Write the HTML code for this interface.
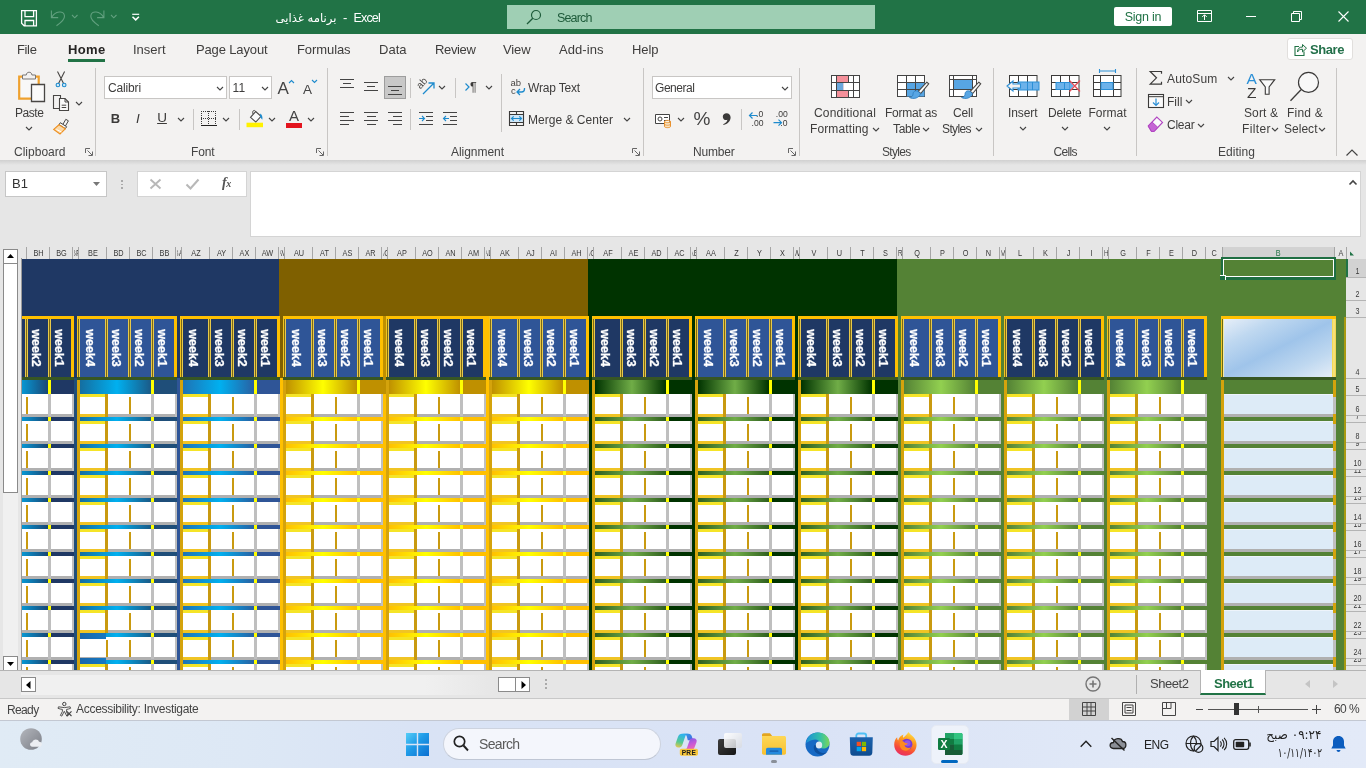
<!DOCTYPE html>
<html lang="en"><head><meta charset="utf-8"><title>Excel</title><style>
*{box-sizing:border-box;margin:0;padding:0}
html,body{width:1366px;height:768px;overflow:hidden;background:#e6e6e6;font-family:"Liberation Sans","DejaVu Sans",sans-serif;color:#323130}
.a{position:absolute}
.t{position:absolute;white-space:nowrap;line-height:16px;font-size:12px;color:#3e3d3c}
.c{text-align:center}
svg{position:absolute;overflow:visible}
.sep{position:absolute;width:1px;background:#c8c6c4}
.lb{position:absolute;white-space:nowrap;line-height:16px;font-size:12px;color:#444;text-align:center;top:144px}
.tab{position:absolute;white-space:nowrap;top:41px;line-height:17px;font-size:13px;color:#3e3d3c}
.box{position:absolute;background:#fff;border:1px solid #c8c6c4}
.ch{position:absolute;width:7px;height:4px}

.wk{position:absolute;width:60px;height:16px;line-height:16px;text-align:center;color:#fff;font-weight:bold;font-size:12.5px;-webkit-text-stroke:.3px #fff;transform:rotate(90deg);white-space:nowrap}
.ch2{font-size:8.5px;line-height:12px;color:#383838;white-space:nowrap;transform:scaleX(.86)}
.rh{font-size:8.3px;line-height:12px;color:#3a3a3a}
</style></head><body><div id="root" style="position:absolute;left:0;top:0;width:1366px;height:768px;will-change:transform">
<div class="a" style="left:0;top:0;width:1366px;height:34px;background:#217346"></div>
<svg style="left:20px;top:9px" width="18" height="18" viewBox="20 9 18 18"><path d="M21.600 10.600h14.800v15.200h-12.300l-2.500-2.500z M25 10.600v6h8.600v-6 M25 25.800v-5.300h8.600v5.300" fill="none" stroke="#fff" stroke-width="1.300"/></svg>
<svg style="left:50px;top:9px" width="17" height="18" viewBox="50 9 17 18"><path d="M51.400 10.400v7.200h6.800 M51.800 17.200C55 11.500 64 9.500 64.500 16C64.800 20 60.500 23 56.500 25.700" fill="none" stroke="#62a07f" stroke-width="1.100"/></svg>
<svg style="left:71.85px;top:15.4px" width="5.5" height="2.8" viewBox="0 0 5.5 2.8"><path d="M0 0 L2.75 2.8 L5.5 0" fill="none" stroke="#62a07f" stroke-width="1.1"/></svg>
<svg style="left:89px;top:9px" width="17" height="18" viewBox="89 9 17 18"><path d="M103.900 10.400v7.200h-6.800 M103.500 17.200C100.300 11.500 91.300 9.500 90.800 16C90.500 20 94.800 23 98.800 25.700" fill="none" stroke="#62a07f" stroke-width="1.100"/></svg>
<svg style="left:110.85px;top:15.4px" width="5.5" height="2.8" viewBox="0 0 5.5 2.8"><path d="M0 0 L2.75 2.8 L5.5 0" fill="none" stroke="#62a07f" stroke-width="1.1"/></svg>
<svg style="left:131px;top:13px" width="9" height="8" viewBox="131 13 9 8"><path d="M132.200 14.300h7" stroke="#fff" stroke-width="1.200"/><path d="M132.500 16.700l3.200 3.200 3.200-3.200" fill="none" stroke="#fff" stroke-width="1.500"/></svg>
<div class="t" id="ttl_ar" style="left:275.5px;top:9.3px;font-size:11.65px;line-height:18px;color:#fff;font-family:'DejaVu Sans',sans-serif;direction:rtl">برنامه غذایی</div>
<div class="t" style="left:343px;top:9px;font-size:13px;line-height:18px;color:#fff">-</div>
<div class="t" id="ttl_ex" style="left:353.6px;top:9px;letter-spacing:-0.854px;font-size:12.5px;line-height:18px;color:#fff">Excel</div>
<div class="a" style="left:507px;top:5px;width:368px;height:24px;background:#9fcfb4"></div>
<svg style="left:526px;top:9px" width="16" height="16" viewBox="0 0 16 16"><circle cx="10" cy="6" r="4.5" fill="none" stroke="#1e5b3a" stroke-width="1.2"/><path d="M6.8 9.2L1 15" stroke="#1e5b3a" stroke-width="1.3"/></svg>
<div class="t" id="srch" style="left:557px;top:8.7px;letter-spacing:-0.851px;font-size:12.5px;line-height:18px;color:#1e5b3a">Search</div>
<div class="a" style="left:1114px;top:7px;width:58px;height:19px;background:#fff;border-radius:2px"></div>
<div class="t c" style="left:1114px;top:8px;width:58px;font-size:12.5px;letter-spacing:-.25px;line-height:18px;color:#217346">Sign in</div>
<svg style="left:1197px;top:10px" width="15" height="12" viewBox="0 0 15 12"><path d="M0.5 0.5h14v11h-14z M0.5 3.5h14" fill="none" stroke="#fff" stroke-width="1"/><path d="M7.5 10v-5 M5.2 7l2.3-2.3L9.8 7" fill="none" stroke="#fff" stroke-width="1"/></svg>
<div class="a" style="left:1246px;top:16px;width:10px;height:1px;background:#fff"></div>
<svg style="left:1291px;top:11px" width="11" height="11" viewBox="0 0 11 11"><path d="M0.5 2.5h8v8h-8z M2.5 2.5v-2h8v8h-2" fill="none" stroke="#fff" stroke-width="1"/></svg>
<svg style="left:1338px;top:11px" width="11" height="11" viewBox="0 0 11 11"><path d="M0.5 0.5l10 10 M10.5 0.5l-10 10" fill="none" stroke="#fff" stroke-width="1.1"/></svg>
<div class="a" style="left:0;top:34px;width:1366px;height:126px;background:#f3f2f1"></div>
<div class="a" style="left:0;top:160px;width:1366px;height:5px;background:linear-gradient(#d0d0d0,#e6e6e6)"></div>
<div class="tab" id="tab0" style="left:17px;top:41px;letter-spacing:-0.363px;">File</div>
<div class="tab" id="tab1" style="left:68px;top:41px;letter-spacing:0.344px;font-weight:bold;color:#252423;">Home</div>
<div class="tab" id="tab2" style="left:133px;top:41px;letter-spacing:-0.003px;">Insert</div>
<div class="tab" id="tab3" style="left:196px;top:41px;letter-spacing:-0.138px;">Page Layout</div>
<div class="tab" id="tab4" style="left:297px;top:41px;letter-spacing:-0.086px;">Formulas</div>
<div class="tab" id="tab5" style="left:379px;top:41px;letter-spacing:0.008px;">Data</div>
<div class="tab" id="tab6" style="left:435px;top:41px;letter-spacing:-0.357px;">Review</div>
<div class="tab" id="tab7" style="left:503px;top:41px;letter-spacing:-0.113px;">View</div>
<div class="tab" id="tab8" style="left:559px;top:41px;letter-spacing:0.060px;">Add-ins</div>
<div class="tab" id="tab9" style="left:632px;top:41px;letter-spacing:-0.062px;">Help</div>
<div class="a" style="left:68px;top:59px;width:37px;height:3px;background:#217346"></div>
<div class="a" style="left:1287px;top:38px;width:66px;height:22px;background:#fff;border:1px solid #e1dfdd;border-radius:3px"></div>
<svg style="left:1294px;top:42.500px" width="13" height="13" viewBox="0 0 13 13"><path d="M5 3.5h-4v9h9v-4" fill="none" stroke="#217346" stroke-width="1.1"/><path d="M3.5 9c0-3.5 2-5 5-5v-2.5l4 3.7-4 3.7v-2.6c-2.5 0-4 .7-5 2.7z" fill="#f3f2f1" stroke="#217346" stroke-width="1"/></svg>
<div class="t" id="share" style="left:1310px;top:40.7px;letter-spacing:-0.428px;font-size:13px;line-height:18px;color:#23704a;font-weight:bold">Share</div>
<div class="sep" style="left:95px;top:68px;height:88px"></div>
<div class="sep" style="left:327px;top:68px;height:88px"></div>
<div class="sep" style="left:643px;top:68px;height:88px"></div>
<div class="sep" style="left:799px;top:68px;height:88px"></div>
<div class="sep" style="left:993px;top:68px;height:88px"></div>
<div class="sep" style="left:1136px;top:68px;height:88px"></div>
<div class="sep" style="left:1336px;top:68px;height:88px"></div>
<div class="t" id="lb_Clipboard" style="left:14px;top:144px;letter-spacing:0.014px;color:#444">Clipboard</div>
<div class="t" id="lb_Font" style="left:191px;top:144px;letter-spacing:-0.129px;color:#444">Font</div>
<div class="t" id="lb_Alignment" style="left:451px;top:144px;letter-spacing:-0.040px;color:#444">Alignment</div>
<div class="t" id="lb_Number" style="left:693px;top:144px;letter-spacing:-0.198px;color:#444">Number</div>
<div class="t" id="lb_Styles" style="left:882px;top:144px;letter-spacing:-0.698px;color:#444">Styles</div>
<div class="t" id="lb_Cells" style="left:1053.5px;top:144px;letter-spacing:-0.637px;color:#444">Cells</div>
<div class="t" id="lb_Editing" style="left:1218px;top:144px;letter-spacing:0.042px;color:#444">Editing</div>
<svg style="left:85px;top:148px" width="8" height="8" viewBox="0 0 8 8"><path d="M0.5 5v-4.5h4.5" fill="none" stroke="#666" stroke-width="1"/><path d="M2.5 2.5l4.5 4.5 M7.5 3.5v4h-4" fill="none" stroke="#666" stroke-width="1"/></svg>
<svg style="left:316px;top:148px" width="8" height="8" viewBox="0 0 8 8"><path d="M0.5 5v-4.5h4.5" fill="none" stroke="#666" stroke-width="1"/><path d="M2.5 2.5l4.5 4.5 M7.5 3.5v4h-4" fill="none" stroke="#666" stroke-width="1"/></svg>
<svg style="left:632px;top:148px" width="8" height="8" viewBox="0 0 8 8"><path d="M0.5 5v-4.5h4.5" fill="none" stroke="#666" stroke-width="1"/><path d="M2.5 2.5l4.5 4.5 M7.5 3.5v4h-4" fill="none" stroke="#666" stroke-width="1"/></svg>
<svg style="left:788px;top:148px" width="8" height="8" viewBox="0 0 8 8"><path d="M0.5 5v-4.5h4.5" fill="none" stroke="#666" stroke-width="1"/><path d="M2.5 2.5l4.5 4.5 M7.5 3.5v4h-4" fill="none" stroke="#666" stroke-width="1"/></svg>
<svg style="left:1346px;top:149px" width="12" height="7" viewBox="0 0 12 7"><path d="M0.5 6.5l5.5-5.5 5.5 5.5" fill="none" stroke="#444" stroke-width="1.2"/></svg>
<svg style="left:16px;top:71px" width="31" height="33" viewBox="0 0 31 33">
<path d="M3.200 5.700h19.500v22h-19.500z" fill="#f8f8f8" stroke="#efa12e" stroke-width="2.200"/>
<path d="M6.500 8v-4h3.800c0-3.700 5.600-3.700 5.600 0h3.600v4z" fill="#f3f2f1" stroke="#797775" stroke-width="1"/>
<path d="M15.500 13.500h13v17h-13z" fill="#fafafa" stroke="#484644" stroke-width="1.300"/></svg>
<div class="t" id="paste" style="left:15px;top:105px;letter-spacing:-0.438px;">Paste</div>
<svg style="left:25.5px;top:127.0px" width="6" height="3" viewBox="0 0 6 3"><path d="M0 0 L3.0 3 L6 0" fill="none" stroke="#444" stroke-width="1.1"/></svg>
<svg style="left:55px;top:70px" width="13" height="19" viewBox="0 0 13 19">
<path d="M2.500 1.500L8.700 13.700 M9.600 1.500L3.400 13.700" fill="none" stroke="#484644" stroke-width="1.100"/>
<circle cx="2.900" cy="15" r="1.800" fill="#cfe9f8" stroke="#1e8bcd" stroke-width="1.100"/><circle cx="9.200" cy="15" r="1.800" fill="#cfe9f8" stroke="#1e8bcd" stroke-width="1.100"/></svg>
<svg style="left:53px;top:95px" width="17" height="17" viewBox="0 0 17 17">
<path d="M7.500 3v-2.500h-7v13h5.500" fill="none" stroke="#484644" stroke-width="1.100"/>
<path d="M6.500 3.500h5.500l3.500 3.500v8.500h-9z" fill="#fafafa" stroke="#484644" stroke-width="1.100"/><path d="M12 3.500v3.500h3.500" fill="none" stroke="#484644" stroke-width="1"/><path d="M8.700 10.200h4.500M8.700 12.500h4.500" stroke="#484644" stroke-width="1"/></svg>
<svg style="left:75.5px;top:101.5px" width="6" height="3" viewBox="0 0 6 3"><path d="M0 0 L3.0 3 L6 0" fill="none" stroke="#444" stroke-width="1.1"/></svg>
<svg style="left:53px;top:118px" width="17" height="17" viewBox="0 0 17 17">
<path d="M12.800 1.300l2.600 1.500-3.200 5.600-2.600-1.500z" fill="#f8f8f8" stroke="#484644" stroke-width="1"/>
<path d="M7.300 4.700l6.300 4-1.200 2-6.300-4z" fill="#f8f8f8" stroke="#484644" stroke-width="1"/>
<path d="M6 6.800l6.300 4-5.300 5.200-6.300-4.600z" fill="#fbd9a8" stroke="#ee8f1f" stroke-width="1.100"/><path d="M3.500 11.500l5 2.500" stroke="#fff" stroke-width="1"/></svg>
<div class="box" style="left:104px;top:76px;width:123px;height:23px"></div>
<div class="t" id="calibri" style="left:108px;top:80px;letter-spacing:-0.145px;">Calibri</div>
<svg style="left:217.0px;top:87.0px" width="6" height="3" viewBox="0 0 6 3"><path d="M0 0 L3.0 3 L6 0" fill="none" stroke="#444" stroke-width="1.1"/></svg>
<div class="box" style="left:229px;top:76px;width:43px;height:23px"></div>
<div class="t" id="sz11" style="left:232.5px;top:80px;letter-spacing:0.266px;">11</div>
<svg style="left:261.5px;top:87.0px" width="6" height="3" viewBox="0 0 6 3"><path d="M0 0 L3.0 3 L6 0" fill="none" stroke="#444" stroke-width="1.1"/></svg>
<div class="t" style="left:277.500px;top:77.500px;font-size:17px;line-height:22px;color:#444">A</div>
<svg style="left:288.500px;top:80.300px" width="5" height="3" viewBox="0 0 5 3"><path d="M0 3L2.500 0.500 5 3" fill="none" stroke="#1e8bcd" stroke-width="1.1"/></svg>
<div class="t" style="left:303px;top:80.500px;font-size:13.5px;line-height:18px;color:#444">A</div>
<svg style="left:312px;top:80.300px" width="5" height="3" viewBox="0 0 5 3"><path d="M0 0L2.500 2.500 5 0" fill="none" stroke="#1e8bcd" stroke-width="1.1"/></svg>
<div class="t c" style="left:105.5px;top:110px;width:20px;font-size:13px;line-height:18px;font-weight:bold;color:#3b3a39">B</div>
<div class="t c" style="left:128px;top:110px;width:20px;font-size:13.5px;line-height:18px;font-style:italic;color:#3b3a39">I</div>
<div class="t c" style="left:152px;top:109px;width:20px;font-size:13.5px;line-height:18px;text-decoration:underline;color:#3b3a39">U</div>
<svg style="left:177.5px;top:118.0px" width="6" height="3" viewBox="0 0 6 3"><path d="M0 0 L3.0 3 L6 0" fill="none" stroke="#444" stroke-width="1.1"/></svg>
<div class="sep" style="left:193px;top:109px;height:21px"></div>
<svg style="left:200px;top:110px" width="17" height="17" viewBox="0 0 17 17" shape-rendering="crispEdges">
<path d="M1 1.500h15M1.500 1v14M15.500 1v14M8.500 1v14M1 8.500h15" fill="none" stroke="#3b3a39" stroke-width="1" stroke-dasharray="1 1"/>
<path d="M0.500 15.500h16" stroke="#201f1e" stroke-width="1.400"/></svg>
<svg style="left:223.0px;top:118.0px" width="6" height="3" viewBox="0 0 6 3"><path d="M0 0 L3.0 3 L6 0" fill="none" stroke="#444" stroke-width="1.1"/></svg>
<div class="sep" style="left:239px;top:109px;height:21px"></div>
<svg style="left:246px;top:109px" width="18" height="19" viewBox="0 0 18 19">
<path d="M4.500 8.300l5.200-5.800 5.300 4.900-5.200 5.600z" fill="#fafafa" stroke="#484644" stroke-width="1.100"/>
<path d="M9.700 2.500c-1.500-2.300-4-.5-2.600 2.600" fill="none" stroke="#484644" stroke-width="1"/>
<path d="M14.300 4.500c1.600 1.200 2.600 3.500 2 6.300-.8-1-1.700-1.700-2.400-3.300z" fill="#1e8bcd"/>
<rect x="0.500" y="13.700" width="16.500" height="4.500" fill="#fff100"/></svg>
<svg style="left:269.0px;top:118.0px" width="6" height="3" viewBox="0 0 6 3"><path d="M0 0 L3.0 3 L6 0" fill="none" stroke="#444" stroke-width="1.1"/></svg>
<div class="t c" style="left:284px;top:107px;width:20px;font-size:15px;line-height:18px;color:#444">A</div>
<div class="a" style="left:286px;top:123px;width:16px;height:5px;background:#e3141e"></div>
<svg style="left:308.0px;top:118.0px" width="6" height="3" viewBox="0 0 6 3"><path d="M0 0 L3.0 3 L6 0" fill="none" stroke="#444" stroke-width="1.1"/></svg>
<div class="a" style="left:340px;top:79px;width:14px;height:1px;background:#444"></div>
<div class="a" style="left:343px;top:83px;width:8px;height:1px;background:#444"></div>
<div class="a" style="left:340px;top:87px;width:14px;height:1px;background:#444"></div>
<div class="a" style="left:364px;top:82px;width:14px;height:1px;background:#444"></div>
<div class="a" style="left:367px;top:86px;width:8px;height:1px;background:#444"></div>
<div class="a" style="left:364px;top:90px;width:14px;height:1px;background:#444"></div>
<div class="a" style="left:384px;top:76px;width:22px;height:23px;background:#c8c8c8;border:1px solid #9d9d9d"></div>
<div class="a" style="left:388px;top:86px;width:14px;height:1px;background:#444"></div>
<div class="a" style="left:391px;top:90px;width:8px;height:1px;background:#444"></div>
<div class="a" style="left:388px;top:94px;width:14px;height:1px;background:#444"></div>
<div class="sep" style="left:410px;top:78px;height:20px"></div>
<svg style="left:417px;top:78px" width="19" height="18" viewBox="0 0 19 18">
<text x="0" y="0" font-size="10" font-family="Liberation Sans, sans-serif" fill="#484644" transform="translate(3.500 11.500) rotate(-48)">ab</text>
<path d="M6 16L16.500 5.500 M11.500 5h5.500v5.500" fill="none" stroke="#1e8bcd" stroke-width="1.300"/></svg>
<svg style="left:438.5px;top:86.0px" width="6" height="3" viewBox="0 0 6 3"><path d="M0 0 L3.0 3 L6 0" fill="none" stroke="#444" stroke-width="1.1"/></svg>
<div class="sep" style="left:455px;top:78px;height:20px"></div>
<svg style="left:465px;top:83px" width="5" height="8" viewBox="0 0 5 8"><path d="M0.5 0.500l3.500 3.500-3.500 3.500" fill="none" stroke="#1e8bcd" stroke-width="1.200"/></svg>
<div class="t" style="left:470px;top:79px;font-size:12.5px;line-height:16px;color:#3b3a39">¶</div>
<svg style="left:485.5px;top:86.0px" width="6" height="3" viewBox="0 0 6 3"><path d="M0 0 L3.0 3 L6 0" fill="none" stroke="#444" stroke-width="1.1"/></svg>
<div class="sep" style="left:501px;top:74px;height:58px"></div>
<svg style="left:510px;top:79px" width="17" height="17" viewBox="0 0 17 17">
<text x="0.500" y="7" font-size="9.500" font-family="Liberation Sans, sans-serif" fill="#484644">ab</text>
<text x="1" y="14.500" font-size="9.500" font-family="Liberation Sans, sans-serif" fill="#484644">c</text>
<path d="M14.500 9v1c0 2.500-1 3-3 3h-4 M10 10l-3 3 3 3" fill="none" stroke="#1e8bcd" stroke-width="1.300"/></svg>
<div class="t" id="wrap" style="left:528px;top:80px;letter-spacing:-0.177px;">Wrap Text</div>
<div class="a" style="left:340px;top:112px;width:14px;height:1px;background:#444"></div>
<div class="a" style="left:340px;top:116px;width:9px;height:1px;background:#444"></div>
<div class="a" style="left:340px;top:120px;width:14px;height:1px;background:#444"></div>
<div class="a" style="left:340px;top:124px;width:9px;height:1px;background:#444"></div>
<div class="a" style="left:364.0px;top:112px;width:14px;height:1px;background:#444"></div>
<div class="a" style="left:366.5px;top:116px;width:9px;height:1px;background:#444"></div>
<div class="a" style="left:364.0px;top:120px;width:14px;height:1px;background:#444"></div>
<div class="a" style="left:366.5px;top:124px;width:9px;height:1px;background:#444"></div>
<div class="a" style="left:388px;top:112px;width:14px;height:1px;background:#444"></div>
<div class="a" style="left:393px;top:116px;width:9px;height:1px;background:#444"></div>
<div class="a" style="left:388px;top:120px;width:14px;height:1px;background:#444"></div>
<div class="a" style="left:393px;top:124px;width:9px;height:1px;background:#444"></div>
<div class="sep" style="left:410px;top:109px;height:21px"></div>
<div class="a" style="left:419px;top:112px;width:14px;height:1px;background:#444"></div>
<div class="a" style="left:419px;top:124px;width:14px;height:1px;background:#444"></div>
<div class="a" style="left:426px;top:116px;width:7px;height:1px;background:#444"></div>
<div class="a" style="left:426px;top:120px;width:7px;height:1px;background:#444"></div>
<svg style="left:419px;top:115px" width="6" height="7" viewBox="0 0 6 7"><path d="M0 3.500h5.500 M3 1l2.500 2.500-2.500 2.500" fill="none" stroke="#1e8bcd" stroke-width="1.100"/></svg>
<div class="a" style="left:443px;top:112px;width:14px;height:1px;background:#444"></div>
<div class="a" style="left:443px;top:124px;width:14px;height:1px;background:#444"></div>
<div class="a" style="left:450px;top:116px;width:7px;height:1px;background:#444"></div>
<div class="a" style="left:450px;top:120px;width:7px;height:1px;background:#444"></div>
<svg style="left:443px;top:115px" width="6" height="7" viewBox="0 0 6 7"><path d="M0.500 3.500h5.500 M3 1l-2.500 2.500 2.500 2.500" fill="none" stroke="#1e8bcd" stroke-width="1.100"/></svg>
<svg style="left:509px;top:111px" width="15" height="15" viewBox="0 0 15 15">
<rect x="1" y="4" width="13" height="7" fill="#cfe7f8"/>
<path d="M0.500 0.500h14v14h-14z M0.500 3.500h14 M0.500 11.500h14 M7.500 0.500v3 M7.500 11.500v3" fill="none" stroke="#3b3a39" stroke-width="1.100"/>
<path d="M2.500 7.500h10 M4.700 5.300l-2.200 2.200 2.200 2.200 M10.300 5.300l2.200 2.200-2.200 2.200" fill="none" stroke="#1e8bcd" stroke-width="1.200"/></svg>
<div class="t" id="merge" style="left:528px;top:111.5px;letter-spacing:0.021px;">Merge &amp; Center</div>
<svg style="left:623.5px;top:118.0px" width="6" height="3" viewBox="0 0 6 3"><path d="M0 0 L3.0 3 L6 0" fill="none" stroke="#444" stroke-width="1.1"/></svg>
<div class="box" style="left:652px;top:76px;width:140px;height:23px"></div>
<div class="t" id="general" style="left:655px;top:80px;letter-spacing:-0.458px;">General</div>
<svg style="left:782.0px;top:87.0px" width="6" height="3" viewBox="0 0 6 3"><path d="M0 0 L3.0 3 L6 0" fill="none" stroke="#444" stroke-width="1.1"/></svg>
<svg style="left:655px;top:114px" width="17" height="15" viewBox="0 0 17 15">
<path d="M0.500 0.500h14v9h-14z" fill="#fff" stroke="#444" stroke-width="1"/>
<circle cx="5" cy="5" r="2" fill="none" stroke="#444" stroke-width="1"/><path d="M9 3.500h4M9 6.500h4" stroke="#444"/>
<path d="M9.500 7.500c0-1.500 6-1.500 6 0v5c0 1.500-6 1.500-6 0z M9.500 7.500c0 1.500 6 1.500 6 0 M9.500 10c0 1.500 6 1.500 6 0" fill="#fbe3bd" stroke="#e8912d" stroke-width="1"/></svg>
<svg style="left:677.5px;top:118.0px" width="6" height="3" viewBox="0 0 6 3"><path d="M0 0 L3.0 3 L6 0" fill="none" stroke="#444" stroke-width="1.1"/></svg>
<div class="t c" style="left:690px;top:107px;width:24px;font-size:19px;line-height:24px;color:#444">%</div>
<svg style="left:720px;top:110px" width="14" height="18" viewBox="720 110 14 18"><path d="M726.500 113.200C729 113.200 730.600 115 730.600 117.500C730.600 121 727.500 124 723.500 125.100L723.200 124.300C725.800 123.100 727.200 121.600 727.400 119.800C727 120 726.600 120.100 726.200 120.100C724.200 120.100 722.800 118.700 722.800 116.700C722.800 114.700 724.400 113.200 726.500 113.200Z" fill="#3b3a39"/></svg>
<div class="sep" style="left:741px;top:109px;height:21px"></div>
<svg style="left:748px;top:110px" width="18" height="18" viewBox="748 110 18 18">
<path d="M749.500 115.500h8 M752.500 112.500l-3 3 3 3" fill="none" stroke="#1e8bcd" stroke-width="1.200"/>
<text x="756" y="117.300" font-size="8.600" font-family="Liberation Sans, sans-serif" fill="#3b3a39">.0</text>
<text x="751.500" y="125.500" font-size="8.600" font-family="Liberation Sans, sans-serif" fill="#3b3a39">.00</text></svg>
<svg style="left:772px;top:110px" width="18" height="18" viewBox="772 110 18 18">
<text x="775.800" y="117.300" font-size="8.600" font-family="Liberation Sans, sans-serif" fill="#3b3a39">.00</text>
<path d="M773.500 122.700h8 M778.500 119.700l3 3-3 3" fill="none" stroke="#1e8bcd" stroke-width="1.200"/>
<text x="780.300" y="125.500" font-size="8.600" font-family="Liberation Sans, sans-serif" fill="#3b3a39">.0</text></svg>
<svg style="left:831px;top:75px" width="29" height="23" viewBox="0 0 29 23">
<rect x="0.500" y="0.500" width="28" height="22" fill="#fff" stroke="#444"/>
<rect x="5.500" y="1" width="12" height="21" fill="#f4909a"/><rect x="5.500" y="8" width="7" height="7" fill="#6aa7dc"/><rect x="12.500" y="8" width="10" height="7" fill="#fff"/>
<path d="M5.500 0.500v22 M17.500 0.500v7 M22.500 0.500v22 M0.500 7.500h28 M0.500 15.500h28 M17.500 15.500v7" fill="none" stroke="#444" stroke-width="1"/></svg>
<div class="t" id="cond" style="left:814px;top:105px;letter-spacing:0.178px;">Conditional</div>
<div class="t" id="fmtg" style="left:810px;top:121px;letter-spacing:0.114px;">Formatting</div>
<svg style="left:872.5px;top:127.5px" width="6" height="3" viewBox="0 0 6 3"><path d="M0 0 L3.0 3 L6 0" fill="none" stroke="#444" stroke-width="1.1"/></svg>
<svg style="left:897px;top:75px" width="32" height="26" viewBox="0 0 32 26">
<rect x="0.500" y="0.500" width="27" height="21" fill="#fff" stroke="#444"/>
<rect x="9.500" y="7.500" width="18" height="14" fill="#57a5e3"/>
<path d="M9.500 0.500v21 M18.500 0.500v21 M0.500 7.500h27 M0.500 14.500h27" fill="none" stroke="#444" stroke-width="1"/>
<path d="M29.800 7.200l1.900 1.700-8 9.600-2.500-2.200z" fill="#fafafa" stroke="#484644" stroke-width="1.100"/>
<path d="M21 16.200c-3.500-1.300-5.300 1-5 3.800-.6 1.500-2 2.300-3.500 2.500 3.500 2 9.500 1 11-3.800z" fill="#58a6e4" stroke="#2b7cc0" stroke-width=".8"/></svg>
<div class="t" id="fmtas" style="left:885px;top:105px;letter-spacing:-0.224px;">Format as</div>
<div class="t" id="table" style="left:893px;top:121px;letter-spacing:-0.338px;">Table</div>
<svg style="left:922.5px;top:127.5px" width="6" height="3" viewBox="0 0 6 3"><path d="M0 0 L3.0 3 L6 0" fill="none" stroke="#444" stroke-width="1.1"/></svg>
<svg style="left:949px;top:75px" width="32" height="26" viewBox="0 0 32 26">
<rect x="0.500" y="0.500" width="27" height="21" fill="#fff" stroke="#444"/>
<rect x="4.500" y="4.500" width="19" height="10" fill="#57a5e3"/>
<path d="M4.500 0.500v21 M23.500 0.500v21 M0.500 4.500h27 M0.500 14.500h27" fill="none" stroke="#444" stroke-width="1"/>
<path d="M29.800 7.200l1.900 1.700-8 9.600-2.500-2.200z" fill="#fafafa" stroke="#484644" stroke-width="1.100"/>
<path d="M21 16.200c-3.500-1.300-5.300 1-5 3.800-.6 1.500-2 2.300-3.500 2.500 3.500 2 9.500 1 11-3.800z" fill="#58a6e4" stroke="#2b7cc0" stroke-width=".8"/></svg>
<div class="t" id="cell" style="left:953px;top:105px;letter-spacing:-0.168px;">Cell</div>
<div class="t" id="styles2" style="left:942px;top:121px;letter-spacing:-0.615px;">Styles</div>
<svg style="left:975.5px;top:127.5px" width="6" height="3" viewBox="0 0 6 3"><path d="M0 0 L3.0 3 L6 0" fill="none" stroke="#444" stroke-width="1.1"/></svg>
<svg style="left:1006px;top:75px" width="35" height="23" viewBox="0 0 35 23">
<rect x="3.500" y="0.500" width="27.500" height="21" fill="#fff" stroke="#3b3a39"/>
<path d="M12.500 0.500v21 M21.500 0.500v21 M3.500 7.500h27.500 M3.500 14.500h27.500" fill="none" stroke="#3b3a39"/>
<rect x="12" y="7" width="21" height="8" fill="#6cb2ea" stroke="#2b8fd6" stroke-width="1"/><path d="M21.500 7v8 M26.500 7v8" stroke="#2b8fd6"/>
<path d="M14.500 9h-7.500v-3l-6 5 6 5v-3h7.500z" fill="#f3f2f1" stroke="#2b8fd6" stroke-width="1.100"/></svg>
<svg style="left:1048px;top:75px" width="35" height="23" viewBox="0 0 35 23">
<rect x="3.500" y="0.500" width="27.500" height="21" fill="#fff" stroke="#3b3a39"/>
<path d="M12.500 0.500v6.500 M21.500 0.500v6.500 M12.500 15v6.500 M21.500 15v6.500 M3.500 7.500h27.500 M3.500 14.500h27.500" fill="none" stroke="#3b3a39"/>
<rect x="8" y="7.500" width="14" height="7" fill="#6cb2ea" stroke="#2b8fd6"/><path d="M16.500 7.500v7" stroke="#2b8fd6"/>
<path d="M22 7l4 4-4 4z" fill="#6cb2ea"/>
<path d="M21.500 5.500l10.500 11 M32 5.500l-10.500 11" stroke="#e8505b" stroke-width="1.300"/></svg>
<svg style="left:1093px;top:69px" width="30" height="29" viewBox="0 0 30 29">
<path d="M6.500 0v4 M22.500 0v4 M6.500 2h16" stroke="#2b8fd6" stroke-width="1.100" fill="none"/>
<rect x="0.500" y="6.500" width="27.500" height="21" fill="#fff" stroke="#3b3a39"/>
<path d="M7.500 6.500v21 M20.500 6.500v21 M0.500 13.500h27.500 M0.500 20.500h27.500" fill="none" stroke="#3b3a39"/>
<rect x="8" y="13.500" width="12" height="7" fill="#6cb2ea" stroke="#2b8fd6"/></svg>
<div class="t" id="c_Insert" style="left:1008px;top:105px;letter-spacing:-0.086px;">Insert</div>
<svg style="left:1019.5px;top:127.0px" width="6" height="3" viewBox="0 0 6 3"><path d="M0 0 L3.0 3 L6 0" fill="none" stroke="#444" stroke-width="1.1"/></svg>
<div class="t" id="c_Delete" style="left:1048px;top:105px;letter-spacing:-0.198px;">Delete</div>
<svg style="left:1061.5px;top:127.0px" width="6" height="3" viewBox="0 0 6 3"><path d="M0 0 L3.0 3 L6 0" fill="none" stroke="#444" stroke-width="1.1"/></svg>
<div class="t" id="c_Format" style="left:1088.5px;top:105px;letter-spacing:-0.003px;">Format</div>
<svg style="left:1104.0px;top:127.0px" width="6" height="3" viewBox="0 0 6 3"><path d="M0 0 L3.0 3 L6 0" fill="none" stroke="#444" stroke-width="1.1"/></svg>
<svg style="left:1148px;top:70px" width="16" height="16" viewBox="1148 70 16 16"><path d="M1161.500 73.800v-2.300h-11.300l6.300 6.300-6.300 6.300h11.300v-2.300" fill="none" stroke="#3b3a39" stroke-width="1.200"/></svg>
<div class="t" id="autosum" style="left:1167px;top:71px;letter-spacing:0.161px;">AutoSum</div>
<svg style="left:1227.5px;top:76.5px" width="6" height="3" viewBox="0 0 6 3"><path d="M0 0 L3.0 3 L6 0" fill="none" stroke="#444" stroke-width="1.1"/></svg>
<svg style="left:1148px;top:94px" width="17" height="15" viewBox="0 0 17 15">
<rect x="0.500" y="0.500" width="15" height="13" fill="#fafafa" stroke="#3b3a39" stroke-width="1.100"/><path d="M0.500 2.700h15" stroke="#3b3a39"/>
<path d="M8 4.500v7 M5 8.500l3 3 3-3" fill="none" stroke="#2b8fd6" stroke-width="1.200"/></svg>
<div class="t" id="fill" style="left:1167px;top:93.5px;letter-spacing:0.039px;">Fill</div>
<svg style="left:1185.5px;top:100.0px" width="6" height="3" viewBox="0 0 6 3"><path d="M0 0 L3.0 3 L6 0" fill="none" stroke="#444" stroke-width="1.1"/></svg>
<svg style="left:1147px;top:116px" width="17" height="17" viewBox="0 0 17 17">
<path d="M1.300 10l8.500-9 5.700 5.400-8.500 9h-2.500z" fill="#fafafa" stroke="#b146c2" stroke-width="1.200"/><path d="M1.300 10l3.800-4 5.700 5.400-3.800 4h-2.500z" fill="#c565d4" stroke="#b146c2" stroke-width="1"/></svg>
<div class="t" id="clear" style="left:1167px;top:116.5px;letter-spacing:-0.237px;">Clear</div>
<svg style="left:1197.5px;top:123.5px" width="6" height="3" viewBox="0 0 6 3"><path d="M0 0 L3.0 3 L6 0" fill="none" stroke="#444" stroke-width="1.1"/></svg>
<svg style="left:1246px;top:71px" width="31" height="30" viewBox="1246 71 31 30">
<text x="1246.500" y="84.300" font-size="15.500" font-family="Liberation Sans, sans-serif" fill="#2b8fd6">A</text>
<text x="1247" y="98.200" font-size="15.500" font-family="Liberation Sans, sans-serif" fill="#3b3a39">Z</text>
<path d="M1259.700 79.700h15l-5.600 7.200v7.400h-3.800v-7.400z" fill="#fafafa" stroke="#3b3a39" stroke-width="1.100"/></svg>
<div class="t" id="sort" style="left:1244px;top:105px;letter-spacing:0.107px;">Sort &amp;</div>
<div class="t" id="filter" style="left:1242px;top:121px;letter-spacing:0.388px;">Filter</div>
<svg style="left:1271.5px;top:127.5px" width="6" height="3" viewBox="0 0 6 3"><path d="M0 0 L3.0 3 L6 0" fill="none" stroke="#444" stroke-width="1.1"/></svg>
<svg style="left:1289px;top:71px" width="33" height="31" viewBox="1289 71 33 31">
<circle cx="1308.500" cy="82.400" r="10" fill="#f8f8f8" stroke="#3b3a39" stroke-width="1.200"/><path d="M1301 89.700l-10.500 11" stroke="#3b3a39" stroke-width="1.300"/></svg>
<div class="t" id="find" style="left:1287px;top:105px;letter-spacing:0.219px;">Find &amp;</div>
<div class="t" id="select" style="left:1284px;top:121px;letter-spacing:0.023px;">Select</div>
<svg style="left:1319.0px;top:127.5px" width="6" height="3" viewBox="0 0 6 3"><path d="M0 0 L3.0 3 L6 0" fill="none" stroke="#444" stroke-width="1.1"/></svg>
<div class="a" style="left:0;top:246px;width:1366px;height:13px;background:#e6e6e6"></div>
<div class="a" style="left:1222px;top:247px;width:113px;height:12px;background:#d2d2d2"></div>
<div class="a" style="left:26px;top:247px;width:1px;height:12px;background:#a6a6a6"></div>
<div class="a ch2" style="left:26.5px;top:247px;width:23.0px;height:11px;text-align:center;color:#383838">BH</div>
<div class="a" style="left:49px;top:247px;width:1px;height:12px;background:#a6a6a6"></div>
<div class="a ch2" style="left:49.5px;top:247px;width:23.0px;height:11px;text-align:center;color:#383838">BG</div>
<div class="a" style="left:72px;top:247px;width:1px;height:12px;background:#a6a6a6"></div>
<div class="a ch2" style="left:73.5px;top:247px;width:5.0px;height:11px;overflow:hidden;color:#383838"><span style="position:absolute;left:50%;transform:translateX(-58%)">BF</span></div>
<div class="a" style="left:78px;top:247px;width:1px;height:12px;background:#a6a6a6"></div>
<div class="a ch2" style="left:78.5px;top:247px;width:28.0px;height:11px;text-align:center;color:#383838">BE</div>
<div class="a" style="left:106px;top:247px;width:1px;height:12px;background:#a6a6a6"></div>
<div class="a ch2" style="left:106.5px;top:247px;width:23.0px;height:11px;text-align:center;color:#383838">BD</div>
<div class="a" style="left:129px;top:247px;width:1px;height:12px;background:#a6a6a6"></div>
<div class="a ch2" style="left:129.5px;top:247px;width:23.0px;height:11px;text-align:center;color:#383838">BC</div>
<div class="a" style="left:152px;top:247px;width:1px;height:12px;background:#a6a6a6"></div>
<div class="a ch2" style="left:152.5px;top:247px;width:23.0px;height:11px;text-align:center;color:#383838">BB</div>
<div class="a" style="left:175px;top:247px;width:1px;height:12px;background:#a6a6a6"></div>
<div class="a ch2" style="left:176.5px;top:247px;width:5.0px;height:11px;overflow:hidden;color:#383838"><span style="position:absolute;left:50%;transform:translateX(-58%)">BA</span></div>
<div class="a" style="left:181px;top:247px;width:1px;height:12px;background:#a6a6a6"></div>
<div class="a ch2" style="left:181.5px;top:247px;width:28.0px;height:11px;text-align:center;color:#383838">AZ</div>
<div class="a" style="left:209px;top:247px;width:1px;height:12px;background:#a6a6a6"></div>
<div class="a ch2" style="left:209.5px;top:247px;width:23.0px;height:11px;text-align:center;color:#383838">AY</div>
<div class="a" style="left:232px;top:247px;width:1px;height:12px;background:#a6a6a6"></div>
<div class="a ch2" style="left:232.5px;top:247px;width:23.0px;height:11px;text-align:center;color:#383838">AX</div>
<div class="a" style="left:255px;top:247px;width:1px;height:12px;background:#a6a6a6"></div>
<div class="a ch2" style="left:255.5px;top:247px;width:23.0px;height:11px;text-align:center;color:#383838">AW</div>
<div class="a" style="left:278px;top:247px;width:1px;height:12px;background:#a6a6a6"></div>
<div class="a ch2" style="left:279.5px;top:247px;width:5.0px;height:11px;overflow:hidden;color:#383838"><span style="position:absolute;left:50%;transform:translateX(-58%)">AV</span></div>
<div class="a" style="left:284px;top:247px;width:1px;height:12px;background:#a6a6a6"></div>
<div class="a ch2" style="left:284.5px;top:247px;width:28.0px;height:11px;text-align:center;color:#383838">AU</div>
<div class="a" style="left:312px;top:247px;width:1px;height:12px;background:#a6a6a6"></div>
<div class="a ch2" style="left:312.5px;top:247px;width:23.0px;height:11px;text-align:center;color:#383838">AT</div>
<div class="a" style="left:335px;top:247px;width:1px;height:12px;background:#a6a6a6"></div>
<div class="a ch2" style="left:335.5px;top:247px;width:23.0px;height:11px;text-align:center;color:#383838">AS</div>
<div class="a" style="left:358px;top:247px;width:1px;height:12px;background:#a6a6a6"></div>
<div class="a ch2" style="left:358.5px;top:247px;width:23.0px;height:11px;text-align:center;color:#383838">AR</div>
<div class="a" style="left:381px;top:247px;width:1px;height:12px;background:#a6a6a6"></div>
<div class="a ch2" style="left:382.5px;top:247px;width:5.0px;height:11px;overflow:hidden;color:#383838"><span style="position:absolute;left:50%;transform:translateX(-58%)">AQ</span></div>
<div class="a" style="left:387px;top:247px;width:1px;height:12px;background:#a6a6a6"></div>
<div class="a ch2" style="left:387.5px;top:247px;width:28.0px;height:11px;text-align:center;color:#383838">AP</div>
<div class="a" style="left:415px;top:247px;width:1px;height:12px;background:#a6a6a6"></div>
<div class="a ch2" style="left:415.5px;top:247px;width:23.0px;height:11px;text-align:center;color:#383838">AO</div>
<div class="a" style="left:438px;top:247px;width:1px;height:12px;background:#a6a6a6"></div>
<div class="a ch2" style="left:438.5px;top:247px;width:23.0px;height:11px;text-align:center;color:#383838">AN</div>
<div class="a" style="left:461px;top:247px;width:1px;height:12px;background:#a6a6a6"></div>
<div class="a ch2" style="left:461.5px;top:247px;width:23.0px;height:11px;text-align:center;color:#383838">AM</div>
<div class="a" style="left:484px;top:247px;width:1px;height:12px;background:#a6a6a6"></div>
<div class="a ch2" style="left:485.5px;top:247px;width:5.0px;height:11px;overflow:hidden;color:#383838"><span style="position:absolute;left:50%;transform:translateX(-58%)">AL</span></div>
<div class="a" style="left:490px;top:247px;width:1px;height:12px;background:#a6a6a6"></div>
<div class="a ch2" style="left:490.5px;top:247px;width:28.0px;height:11px;text-align:center;color:#383838">AK</div>
<div class="a" style="left:518px;top:247px;width:1px;height:12px;background:#a6a6a6"></div>
<div class="a ch2" style="left:518.5px;top:247px;width:23.0px;height:11px;text-align:center;color:#383838">AJ</div>
<div class="a" style="left:541px;top:247px;width:1px;height:12px;background:#a6a6a6"></div>
<div class="a ch2" style="left:541.5px;top:247px;width:23.0px;height:11px;text-align:center;color:#383838">AI</div>
<div class="a" style="left:564px;top:247px;width:1px;height:12px;background:#a6a6a6"></div>
<div class="a ch2" style="left:564.5px;top:247px;width:23.0px;height:11px;text-align:center;color:#383838">AH</div>
<div class="a" style="left:587px;top:247px;width:1px;height:12px;background:#a6a6a6"></div>
<div class="a ch2" style="left:588.5px;top:247px;width:5.0px;height:11px;overflow:hidden;color:#383838"><span style="position:absolute;left:50%;transform:translateX(-58%)">AG</span></div>
<div class="a" style="left:593px;top:247px;width:1px;height:12px;background:#a6a6a6"></div>
<div class="a ch2" style="left:593.5px;top:247px;width:28.0px;height:11px;text-align:center;color:#383838">AF</div>
<div class="a" style="left:621px;top:247px;width:1px;height:12px;background:#a6a6a6"></div>
<div class="a ch2" style="left:621.5px;top:247px;width:23.0px;height:11px;text-align:center;color:#383838">AE</div>
<div class="a" style="left:644px;top:247px;width:1px;height:12px;background:#a6a6a6"></div>
<div class="a ch2" style="left:644.5px;top:247px;width:23.0px;height:11px;text-align:center;color:#383838">AD</div>
<div class="a" style="left:667px;top:247px;width:1px;height:12px;background:#a6a6a6"></div>
<div class="a ch2" style="left:667.5px;top:247px;width:23.0px;height:11px;text-align:center;color:#383838">AC</div>
<div class="a" style="left:690px;top:247px;width:1px;height:12px;background:#a6a6a6"></div>
<div class="a ch2" style="left:691.5px;top:247px;width:5.0px;height:11px;overflow:hidden;color:#383838"><span style="position:absolute;left:50%;transform:translateX(-58%)">AB</span></div>
<div class="a" style="left:696px;top:247px;width:1px;height:12px;background:#a6a6a6"></div>
<div class="a ch2" style="left:696.5px;top:247px;width:28.0px;height:11px;text-align:center;color:#383838">AA</div>
<div class="a" style="left:724px;top:247px;width:1px;height:12px;background:#a6a6a6"></div>
<div class="a ch2" style="left:724.5px;top:247px;width:23.0px;height:11px;text-align:center;color:#383838">Z</div>
<div class="a" style="left:747px;top:247px;width:1px;height:12px;background:#a6a6a6"></div>
<div class="a ch2" style="left:747.5px;top:247px;width:23.0px;height:11px;text-align:center;color:#383838">Y</div>
<div class="a" style="left:770px;top:247px;width:1px;height:12px;background:#a6a6a6"></div>
<div class="a ch2" style="left:770.5px;top:247px;width:23.0px;height:11px;text-align:center;color:#383838">X</div>
<div class="a" style="left:793px;top:247px;width:1px;height:12px;background:#a6a6a6"></div>
<div class="a ch2" style="left:794.5px;top:247px;width:5.0px;height:11px;overflow:hidden;color:#383838"><span style="position:absolute;left:50%;transform:translateX(-58%)">W</span></div>
<div class="a" style="left:799px;top:247px;width:1px;height:12px;background:#a6a6a6"></div>
<div class="a ch2" style="left:799.5px;top:247px;width:28.0px;height:11px;text-align:center;color:#383838">V</div>
<div class="a" style="left:827px;top:247px;width:1px;height:12px;background:#a6a6a6"></div>
<div class="a ch2" style="left:827.5px;top:247px;width:23.0px;height:11px;text-align:center;color:#383838">U</div>
<div class="a" style="left:850px;top:247px;width:1px;height:12px;background:#a6a6a6"></div>
<div class="a ch2" style="left:850.5px;top:247px;width:23.0px;height:11px;text-align:center;color:#383838">T</div>
<div class="a" style="left:873px;top:247px;width:1px;height:12px;background:#a6a6a6"></div>
<div class="a ch2" style="left:873.5px;top:247px;width:23.0px;height:11px;text-align:center;color:#383838">S</div>
<div class="a" style="left:896px;top:247px;width:1px;height:12px;background:#a6a6a6"></div>
<div class="a ch2" style="left:897.5px;top:247px;width:5.0px;height:11px;overflow:hidden;color:#383838"><span style="position:absolute;left:50%;transform:translateX(-58%)">R</span></div>
<div class="a" style="left:902px;top:247px;width:1px;height:12px;background:#a6a6a6"></div>
<div class="a ch2" style="left:902.5px;top:247px;width:28.0px;height:11px;text-align:center;color:#383838">Q</div>
<div class="a" style="left:930px;top:247px;width:1px;height:12px;background:#a6a6a6"></div>
<div class="a ch2" style="left:930.5px;top:247px;width:23.0px;height:11px;text-align:center;color:#383838">P</div>
<div class="a" style="left:953px;top:247px;width:1px;height:12px;background:#a6a6a6"></div>
<div class="a ch2" style="left:953.5px;top:247px;width:23.0px;height:11px;text-align:center;color:#383838">O</div>
<div class="a" style="left:976px;top:247px;width:1px;height:12px;background:#a6a6a6"></div>
<div class="a ch2" style="left:976.5px;top:247px;width:23.0px;height:11px;text-align:center;color:#383838">N</div>
<div class="a" style="left:999px;top:247px;width:1px;height:12px;background:#a6a6a6"></div>
<div class="a ch2" style="left:1000.5px;top:247px;width:5.0px;height:11px;overflow:hidden;color:#383838"><span style="position:absolute;left:50%;transform:translateX(-58%)">M</span></div>
<div class="a" style="left:1005px;top:247px;width:1px;height:12px;background:#a6a6a6"></div>
<div class="a ch2" style="left:1005.5px;top:247px;width:28.0px;height:11px;text-align:center;color:#383838">L</div>
<div class="a" style="left:1033px;top:247px;width:1px;height:12px;background:#a6a6a6"></div>
<div class="a ch2" style="left:1033.5px;top:247px;width:23.0px;height:11px;text-align:center;color:#383838">K</div>
<div class="a" style="left:1056px;top:247px;width:1px;height:12px;background:#a6a6a6"></div>
<div class="a ch2" style="left:1056.5px;top:247px;width:23.0px;height:11px;text-align:center;color:#383838">J</div>
<div class="a" style="left:1079px;top:247px;width:1px;height:12px;background:#a6a6a6"></div>
<div class="a ch2" style="left:1079.5px;top:247px;width:23.0px;height:11px;text-align:center;color:#383838">I</div>
<div class="a" style="left:1102px;top:247px;width:1px;height:12px;background:#a6a6a6"></div>
<div class="a ch2" style="left:1103.5px;top:247px;width:5.0px;height:11px;overflow:hidden;color:#383838"><span style="position:absolute;left:50%;transform:translateX(-58%)">H</span></div>
<div class="a" style="left:1108px;top:247px;width:1px;height:12px;background:#a6a6a6"></div>
<div class="a ch2" style="left:1108.5px;top:247px;width:28.0px;height:11px;text-align:center;color:#383838">G</div>
<div class="a" style="left:1136px;top:247px;width:1px;height:12px;background:#a6a6a6"></div>
<div class="a ch2" style="left:1136.5px;top:247px;width:23.0px;height:11px;text-align:center;color:#383838">F</div>
<div class="a" style="left:1159px;top:247px;width:1px;height:12px;background:#a6a6a6"></div>
<div class="a ch2" style="left:1159.5px;top:247px;width:23.0px;height:11px;text-align:center;color:#383838">E</div>
<div class="a" style="left:1182px;top:247px;width:1px;height:12px;background:#a6a6a6"></div>
<div class="a ch2" style="left:1182.5px;top:247px;width:23.0px;height:11px;text-align:center;color:#383838">D</div>
<div class="a" style="left:1205px;top:247px;width:1px;height:12px;background:#a6a6a6"></div>
<div class="a ch2" style="left:1205.5px;top:247px;width:16.5px;height:11px;text-align:center;color:#383838">C</div>
<div class="a" style="left:1222px;top:247px;width:1px;height:12px;background:#a6a6a6"></div>
<div class="a ch2" style="left:1222px;top:247px;width:112.5px;height:11px;text-align:center;color:#217346">B</div>
<div class="a" style="left:1334px;top:247px;width:1px;height:12px;background:#a6a6a6"></div>
<div class="a ch2" style="left:1334.5px;top:247px;width:12.0px;height:11px;text-align:center;color:#383838">A</div>
<div class="a" style="left:1346px;top:247px;width:1px;height:12px;background:#a6a6a6"></div>
<svg style="left:1350px;top:251px" width="5" height="5" viewBox="0 0 5 5"><path d="M0 0.500v4h4z" fill="#217346"/></svg>
<div class="a" style="left:1346px;top:259px;width:20px;height:411px;background:#e6e6e6;overflow:hidden">
<div class="a" style="left:0;top:0;width:20px;height:18px;background:#d2d2d2;border-left:2px solid #217346"></div>
<div class="a" style="left:0;top:18px;width:20px;height:1px;background:#b4b4b4"></div>
<div class="a rh" style="left:2px;top:1px;width:19px;height:17px;overflow:hidden"><span style="position:absolute;left:0;width:19px;bottom:-0.300px;text-align:center;transform:scaleX(.86)">1</span></div>
<div class="a" style="left:0;top:41px;width:20px;height:1px;background:#b4b4b4"></div>
<div class="a rh" style="left:2px;top:19px;width:19px;height:22px;overflow:hidden"><span style="position:absolute;left:0;width:19px;bottom:-0.300px;text-align:center;transform:scaleX(.86)">2</span></div>
<div class="a" style="left:0;top:58px;width:20px;height:1px;background:#b4b4b4"></div>
<div class="a rh" style="left:2px;top:42px;width:19px;height:16px;overflow:hidden"><span style="position:absolute;left:0;width:19px;bottom:-0.300px;text-align:center;transform:scaleX(.86)">3</span></div>
<div class="a" style="left:0;top:119px;width:20px;height:1px;background:#b4b4b4"></div>
<div class="a rh" style="left:2px;top:59px;width:19px;height:60px;overflow:hidden"><span style="position:absolute;left:0;width:19px;bottom:-0.300px;text-align:center;transform:scaleX(.86)">4</span></div>
<div class="a" style="left:0;top:136px;width:20px;height:1px;background:#b4b4b4"></div>
<div class="a rh" style="left:2px;top:120px;width:19px;height:16px;overflow:hidden"><span style="position:absolute;left:0;width:19px;bottom:-0.300px;text-align:center;transform:scaleX(.86)">5</span></div>
<div class="a" style="left:0;top:156px;width:20px;height:1px;background:#b4b4b4"></div>
<div class="a rh" style="left:2px;top:137px;width:19px;height:19px;overflow:hidden"><span style="position:absolute;left:0;width:19px;bottom:-0.300px;text-align:center;transform:scaleX(.86)">6</span></div>
<div class="a" style="left:0;top:163px;width:20px;height:1px;background:#b4b4b4"></div>
<div class="a rh" style="left:2px;top:157px;width:19px;height:6px;overflow:hidden"><span style="position:absolute;left:0;width:19px;bottom:-0.300px;text-align:center;transform:scaleX(.86)">7</span></div>
<div class="a" style="left:0;top:183px;width:20px;height:1px;background:#b4b4b4"></div>
<div class="a rh" style="left:2px;top:164px;width:19px;height:19px;overflow:hidden"><span style="position:absolute;left:0;width:19px;bottom:-0.300px;text-align:center;transform:scaleX(.86)">8</span></div>
<div class="a" style="left:0;top:190px;width:20px;height:1px;background:#b4b4b4"></div>
<div class="a rh" style="left:2px;top:184px;width:19px;height:6px;overflow:hidden"><span style="position:absolute;left:0;width:19px;bottom:-0.300px;text-align:center;transform:scaleX(.86)">9</span></div>
<div class="a" style="left:0;top:210px;width:20px;height:1px;background:#b4b4b4"></div>
<div class="a rh" style="left:2px;top:191px;width:19px;height:19px;overflow:hidden"><span style="position:absolute;left:0;width:19px;bottom:-0.300px;text-align:center;transform:scaleX(.86)">10</span></div>
<div class="a" style="left:0;top:217px;width:20px;height:1px;background:#b4b4b4"></div>
<div class="a rh" style="left:2px;top:211px;width:19px;height:6px;overflow:hidden"><span style="position:absolute;left:0;width:19px;bottom:-0.300px;text-align:center;transform:scaleX(.86)">11</span></div>
<div class="a" style="left:0;top:237px;width:20px;height:1px;background:#b4b4b4"></div>
<div class="a rh" style="left:2px;top:218px;width:19px;height:19px;overflow:hidden"><span style="position:absolute;left:0;width:19px;bottom:-0.300px;text-align:center;transform:scaleX(.86)">12</span></div>
<div class="a" style="left:0;top:244px;width:20px;height:1px;background:#b4b4b4"></div>
<div class="a rh" style="left:2px;top:238px;width:19px;height:6px;overflow:hidden"><span style="position:absolute;left:0;width:19px;bottom:-0.300px;text-align:center;transform:scaleX(.86)">13</span></div>
<div class="a" style="left:0;top:264px;width:20px;height:1px;background:#b4b4b4"></div>
<div class="a rh" style="left:2px;top:245px;width:19px;height:19px;overflow:hidden"><span style="position:absolute;left:0;width:19px;bottom:-0.300px;text-align:center;transform:scaleX(.86)">14</span></div>
<div class="a" style="left:0;top:271px;width:20px;height:1px;background:#b4b4b4"></div>
<div class="a rh" style="left:2px;top:265px;width:19px;height:6px;overflow:hidden"><span style="position:absolute;left:0;width:19px;bottom:-0.300px;text-align:center;transform:scaleX(.86)">15</span></div>
<div class="a" style="left:0;top:291px;width:20px;height:1px;background:#b4b4b4"></div>
<div class="a rh" style="left:2px;top:272px;width:19px;height:19px;overflow:hidden"><span style="position:absolute;left:0;width:19px;bottom:-0.300px;text-align:center;transform:scaleX(.86)">16</span></div>
<div class="a" style="left:0;top:298px;width:20px;height:1px;background:#b4b4b4"></div>
<div class="a rh" style="left:2px;top:292px;width:19px;height:6px;overflow:hidden"><span style="position:absolute;left:0;width:19px;bottom:-0.300px;text-align:center;transform:scaleX(.86)">17</span></div>
<div class="a" style="left:0;top:318px;width:20px;height:1px;background:#b4b4b4"></div>
<div class="a rh" style="left:2px;top:299px;width:19px;height:19px;overflow:hidden"><span style="position:absolute;left:0;width:19px;bottom:-0.300px;text-align:center;transform:scaleX(.86)">18</span></div>
<div class="a" style="left:0;top:325px;width:20px;height:1px;background:#b4b4b4"></div>
<div class="a rh" style="left:2px;top:319px;width:19px;height:6px;overflow:hidden"><span style="position:absolute;left:0;width:19px;bottom:-0.300px;text-align:center;transform:scaleX(.86)">19</span></div>
<div class="a" style="left:0;top:345px;width:20px;height:1px;background:#b4b4b4"></div>
<div class="a rh" style="left:2px;top:326px;width:19px;height:19px;overflow:hidden"><span style="position:absolute;left:0;width:19px;bottom:-0.300px;text-align:center;transform:scaleX(.86)">20</span></div>
<div class="a" style="left:0;top:352px;width:20px;height:1px;background:#b4b4b4"></div>
<div class="a rh" style="left:2px;top:346px;width:19px;height:6px;overflow:hidden"><span style="position:absolute;left:0;width:19px;bottom:-0.300px;text-align:center;transform:scaleX(.86)">21</span></div>
<div class="a" style="left:0;top:372px;width:20px;height:1px;background:#b4b4b4"></div>
<div class="a rh" style="left:2px;top:353px;width:19px;height:19px;overflow:hidden"><span style="position:absolute;left:0;width:19px;bottom:-0.300px;text-align:center;transform:scaleX(.86)">22</span></div>
<div class="a" style="left:0;top:379px;width:20px;height:1px;background:#b4b4b4"></div>
<div class="a rh" style="left:2px;top:373px;width:19px;height:6px;overflow:hidden"><span style="position:absolute;left:0;width:19px;bottom:-0.300px;text-align:center;transform:scaleX(.86)">23</span></div>
<div class="a" style="left:0;top:399px;width:20px;height:1px;background:#b4b4b4"></div>
<div class="a rh" style="left:2px;top:380px;width:19px;height:19px;overflow:hidden"><span style="position:absolute;left:0;width:19px;bottom:-0.300px;text-align:center;transform:scaleX(.86)">24</span></div>
<div class="a" style="left:0;top:406px;width:20px;height:1px;background:#b4b4b4"></div>
<div class="a rh" style="left:2px;top:400px;width:19px;height:6px;overflow:hidden"><span style="position:absolute;left:0;width:19px;bottom:-0.300px;text-align:center;transform:scaleX(.86)">25</span></div>
<div class="a" style="left:0;top:426px;width:20px;height:1px;background:#b4b4b4"></div>
<div class="a rh" style="left:2px;top:407px;width:19px;height:19px;overflow:hidden"><span style="position:absolute;left:0;width:19px;bottom:-0.300px;text-align:center;transform:scaleX(.86)">26</span></div>
<div class="a" style="left:0;top:433px;width:20px;height:1px;background:#b4b4b4"></div>
<div class="a rh" style="left:2px;top:427px;width:19px;height:6px;overflow:hidden"><span style="position:absolute;left:0;width:19px;bottom:-0.300px;text-align:center;transform:scaleX(.86)">27</span></div>
</div>
<div class="a" id="grid" style="left:22px;top:259px;width:1324px;height:411px;overflow:hidden;background:#548235">
<div class="a" style="left:0px;top:-1px;width:257px;height:412px;background:#1f3864"></div>
<div class="a" style="left:257px;top:-1px;width:309px;height:412px;background:#7f6000"></div>
<div class="a" style="left:566px;top:-1px;width:309px;height:412px;background:#003300"></div>
<div class="a" style="left:875px;top:-1px;width:450px;height:412px;background:#548235"></div>
<div class="a" style="left:-48px;top:57px;width:100px;height:61px;background:#1f3864;border-top:3px solid #ffc000;border-right:3px solid #ffc000"></div>
<div class="a" style="left:-48px;top:57px;width:1px;height:61px;background:#f3c51f"></div>
<div class="a" style="left:-47px;top:60px;width:1px;height:58px;background:#7d6a14"></div>
<div class="a" style="left:-46px;top:60px;width:1px;height:58px;background:#e8c94a"></div>
<div class="a" style="left:-20px;top:60px;width:1px;height:58px;background:#e8c94a"></div>
<div class="a" style="left:-19px;top:60px;width:1px;height:58px;background:#7d6a14"></div>
<div class="a" style="left:-18px;top:60px;width:1px;height:58px;background:#e8c94a"></div>
<div class="a" style="left:3px;top:60px;width:1px;height:58px;background:#e8c94a"></div>
<div class="a" style="left:4px;top:60px;width:1px;height:58px;background:#7d6a14"></div>
<div class="a" style="left:5px;top:60px;width:1px;height:58px;background:#e8c94a"></div>
<div class="a" style="left:26px;top:60px;width:1px;height:58px;background:#e8c94a"></div>
<div class="a" style="left:27px;top:60px;width:1px;height:58px;background:#7d6a14"></div>
<div class="a" style="left:28px;top:60px;width:1px;height:58px;background:#e8c94a"></div>
<div class="wk" style="left:-64.9px;top:81px">week4</div>
<div class="wk" style="left:-39.4px;top:81px">week3</div>
<div class="wk" style="left:-16.4px;top:81px">week2</div>
<div class="wk" style="left:6.6px;top:81px">week1</div>
<div class="a" style="left:-48px;top:118px;width:100px;height:3px;background:#375623"></div>
<div class="a" style="left:-45px;top:121px;width:71px;height:14px;background:linear-gradient(90deg,#156092,#00b0f0 52%,#1b4675)"></div>
<div class="a" style="left:29px;top:121px;width:23px;height:14px;background:#1f3864"></div>
<div class="a" style="left:26px;top:121px;width:3px;height:14px;background:#ffff00"></div>
<div class="a" style="left:-48px;top:121px;width:3px;height:300px;background:#d4a30c"></div>
<div class="a" style="left:-45px;top:135px;width:97px;height:20px;background:#fff"></div>
<div class="a" style="left:-45px;top:155px;width:97px;height:3px;background:#b0b0b0"></div>
<div class="a" style="left:-45px;top:158px;width:71px;height:4px;background:linear-gradient(90deg,#156092,#00b0f0 52%,#1b4675)"></div>
<div class="a" style="left:29px;top:158px;width:23px;height:4px;background:#1f3864"></div>
<div class="a" style="left:26px;top:157.5px;width:3px;height:5px;background:#ffff00"></div>
<div class="a" style="left:-45px;top:135px;width:25px;height:3px;background:#f5e428"></div>
<div class="a" style="left:-45px;top:155px;width:25px;height:3px;background:#f0c424"></div>
<div class="a" style="left:-20px;top:135px;width:3px;height:23px;background:#c99a10"></div>
<div class="a" style="left:4px;top:138px;width:2px;height:17px;background:#c99a10"></div>
<div class="a" style="left:26px;top:135px;width:3px;height:22px;background:#bfbfbf"></div>
<div class="a" style="left:49.5px;top:135px;width:2.5px;height:23px;background:#bfbfbf"></div>
<div class="a" style="left:-45px;top:162px;width:97px;height:20px;background:#fff"></div>
<div class="a" style="left:-45px;top:182px;width:97px;height:3px;background:#b0b0b0"></div>
<div class="a" style="left:-45px;top:185px;width:71px;height:4px;background:linear-gradient(90deg,#156092,#00b0f0 52%,#1b4675)"></div>
<div class="a" style="left:29px;top:185px;width:23px;height:4px;background:#1f3864"></div>
<div class="a" style="left:26px;top:184.5px;width:3px;height:5px;background:#ffff00"></div>
<div class="a" style="left:-45px;top:162px;width:25px;height:3px;background:#f5e428"></div>
<div class="a" style="left:-45px;top:182px;width:25px;height:3px;background:#f0c424"></div>
<div class="a" style="left:-20px;top:162px;width:3px;height:23px;background:#c99a10"></div>
<div class="a" style="left:4px;top:165px;width:2px;height:17px;background:#c99a10"></div>
<div class="a" style="left:26px;top:162px;width:3px;height:22px;background:#bfbfbf"></div>
<div class="a" style="left:49.5px;top:162px;width:2.5px;height:23px;background:#bfbfbf"></div>
<div class="a" style="left:-45px;top:189px;width:97px;height:20px;background:#fff"></div>
<div class="a" style="left:-45px;top:209px;width:97px;height:3px;background:#b0b0b0"></div>
<div class="a" style="left:-45px;top:212px;width:71px;height:4px;background:linear-gradient(90deg,#156092,#00b0f0 52%,#1b4675)"></div>
<div class="a" style="left:29px;top:212px;width:23px;height:4px;background:#1f3864"></div>
<div class="a" style="left:26px;top:211.5px;width:3px;height:5px;background:#ffff00"></div>
<div class="a" style="left:-45px;top:189px;width:25px;height:3px;background:#f5e428"></div>
<div class="a" style="left:-45px;top:209px;width:25px;height:3px;background:#f0c424"></div>
<div class="a" style="left:-20px;top:189px;width:3px;height:23px;background:#c99a10"></div>
<div class="a" style="left:4px;top:192px;width:2px;height:17px;background:#c99a10"></div>
<div class="a" style="left:26px;top:189px;width:3px;height:22px;background:#bfbfbf"></div>
<div class="a" style="left:49.5px;top:189px;width:2.5px;height:23px;background:#bfbfbf"></div>
<div class="a" style="left:-45px;top:216px;width:97px;height:20px;background:#fff"></div>
<div class="a" style="left:-45px;top:236px;width:97px;height:3px;background:#b0b0b0"></div>
<div class="a" style="left:-45px;top:239px;width:71px;height:4px;background:linear-gradient(90deg,#156092,#00b0f0 52%,#1b4675)"></div>
<div class="a" style="left:29px;top:239px;width:23px;height:4px;background:#1f3864"></div>
<div class="a" style="left:26px;top:238.5px;width:3px;height:5px;background:#ffff00"></div>
<div class="a" style="left:-45px;top:216px;width:25px;height:3px;background:#f5e428"></div>
<div class="a" style="left:-45px;top:236px;width:25px;height:3px;background:#f0c424"></div>
<div class="a" style="left:-20px;top:216px;width:3px;height:23px;background:#c99a10"></div>
<div class="a" style="left:4px;top:219px;width:2px;height:17px;background:#c99a10"></div>
<div class="a" style="left:26px;top:216px;width:3px;height:22px;background:#bfbfbf"></div>
<div class="a" style="left:49.5px;top:216px;width:2.5px;height:23px;background:#bfbfbf"></div>
<div class="a" style="left:-45px;top:243px;width:97px;height:20px;background:#fff"></div>
<div class="a" style="left:-45px;top:263px;width:97px;height:3px;background:#b0b0b0"></div>
<div class="a" style="left:-45px;top:266px;width:71px;height:4px;background:linear-gradient(90deg,#156092,#00b0f0 52%,#1b4675)"></div>
<div class="a" style="left:29px;top:266px;width:23px;height:4px;background:#1f3864"></div>
<div class="a" style="left:26px;top:265.5px;width:3px;height:5px;background:#ffff00"></div>
<div class="a" style="left:-45px;top:243px;width:25px;height:3px;background:#f5e428"></div>
<div class="a" style="left:-45px;top:263px;width:25px;height:3px;background:#f0c424"></div>
<div class="a" style="left:-20px;top:243px;width:3px;height:23px;background:#c99a10"></div>
<div class="a" style="left:4px;top:246px;width:2px;height:17px;background:#c99a10"></div>
<div class="a" style="left:26px;top:243px;width:3px;height:22px;background:#bfbfbf"></div>
<div class="a" style="left:49.5px;top:243px;width:2.5px;height:23px;background:#bfbfbf"></div>
<div class="a" style="left:-45px;top:270px;width:97px;height:20px;background:#fff"></div>
<div class="a" style="left:-45px;top:290px;width:97px;height:3px;background:#b0b0b0"></div>
<div class="a" style="left:-45px;top:293px;width:71px;height:4px;background:linear-gradient(90deg,#156092,#00b0f0 52%,#1b4675)"></div>
<div class="a" style="left:29px;top:293px;width:23px;height:4px;background:#1f3864"></div>
<div class="a" style="left:26px;top:292.5px;width:3px;height:5px;background:#ffff00"></div>
<div class="a" style="left:-45px;top:270px;width:25px;height:3px;background:#f5e428"></div>
<div class="a" style="left:-45px;top:290px;width:25px;height:3px;background:#f0c424"></div>
<div class="a" style="left:-20px;top:270px;width:3px;height:23px;background:#c99a10"></div>
<div class="a" style="left:4px;top:273px;width:2px;height:17px;background:#c99a10"></div>
<div class="a" style="left:26px;top:270px;width:3px;height:22px;background:#bfbfbf"></div>
<div class="a" style="left:49.5px;top:270px;width:2.5px;height:23px;background:#bfbfbf"></div>
<div class="a" style="left:-45px;top:297px;width:97px;height:20px;background:#fff"></div>
<div class="a" style="left:-45px;top:317px;width:97px;height:3px;background:#b0b0b0"></div>
<div class="a" style="left:-45px;top:320px;width:71px;height:4px;background:linear-gradient(90deg,#156092,#00b0f0 52%,#1b4675)"></div>
<div class="a" style="left:29px;top:320px;width:23px;height:4px;background:#1f3864"></div>
<div class="a" style="left:26px;top:319.5px;width:3px;height:5px;background:#ffff00"></div>
<div class="a" style="left:-45px;top:297px;width:25px;height:3px;background:#f5e428"></div>
<div class="a" style="left:-45px;top:317px;width:25px;height:3px;background:#f0c424"></div>
<div class="a" style="left:-20px;top:297px;width:3px;height:23px;background:#c99a10"></div>
<div class="a" style="left:4px;top:300px;width:2px;height:17px;background:#c99a10"></div>
<div class="a" style="left:26px;top:297px;width:3px;height:22px;background:#bfbfbf"></div>
<div class="a" style="left:49.5px;top:297px;width:2.5px;height:23px;background:#bfbfbf"></div>
<div class="a" style="left:-45px;top:324px;width:97px;height:20px;background:#fff"></div>
<div class="a" style="left:-45px;top:344px;width:97px;height:3px;background:#b0b0b0"></div>
<div class="a" style="left:-45px;top:347px;width:71px;height:4px;background:linear-gradient(90deg,#156092,#00b0f0 52%,#1b4675)"></div>
<div class="a" style="left:29px;top:347px;width:23px;height:4px;background:#1f3864"></div>
<div class="a" style="left:26px;top:346.5px;width:3px;height:5px;background:#ffff00"></div>
<div class="a" style="left:-45px;top:324px;width:25px;height:3px;background:#f5e428"></div>
<div class="a" style="left:-45px;top:344px;width:25px;height:3px;background:#f0c424"></div>
<div class="a" style="left:-20px;top:324px;width:3px;height:23px;background:#c99a10"></div>
<div class="a" style="left:4px;top:327px;width:2px;height:17px;background:#c99a10"></div>
<div class="a" style="left:26px;top:324px;width:3px;height:22px;background:#bfbfbf"></div>
<div class="a" style="left:49.5px;top:324px;width:2.5px;height:23px;background:#bfbfbf"></div>
<div class="a" style="left:-45px;top:351px;width:97px;height:20px;background:#fff"></div>
<div class="a" style="left:-45px;top:371px;width:97px;height:3px;background:#b0b0b0"></div>
<div class="a" style="left:-45px;top:374px;width:71px;height:4px;background:linear-gradient(90deg,#156092,#00b0f0 52%,#1b4675)"></div>
<div class="a" style="left:29px;top:374px;width:23px;height:4px;background:#1f3864"></div>
<div class="a" style="left:26px;top:373.5px;width:3px;height:5px;background:#ffff00"></div>
<div class="a" style="left:-45px;top:351px;width:25px;height:3px;background:#f5e428"></div>
<div class="a" style="left:-45px;top:371px;width:25px;height:3px;background:#f0c424"></div>
<div class="a" style="left:-20px;top:351px;width:3px;height:23px;background:#c99a10"></div>
<div class="a" style="left:4px;top:354px;width:2px;height:17px;background:#c99a10"></div>
<div class="a" style="left:26px;top:351px;width:3px;height:22px;background:#bfbfbf"></div>
<div class="a" style="left:49.5px;top:351px;width:2.5px;height:23px;background:#bfbfbf"></div>
<div class="a" style="left:-45px;top:378px;width:97px;height:20px;background:#fff"></div>
<div class="a" style="left:-45px;top:398px;width:97px;height:3px;background:#b0b0b0"></div>
<div class="a" style="left:-45px;top:401px;width:71px;height:4px;background:linear-gradient(90deg,#156092,#00b0f0 52%,#1b4675)"></div>
<div class="a" style="left:29px;top:401px;width:23px;height:4px;background:#1f3864"></div>
<div class="a" style="left:26px;top:400.5px;width:3px;height:5px;background:#ffff00"></div>
<div class="a" style="left:-45px;top:378px;width:25px;height:3px;background:#f5e428"></div>
<div class="a" style="left:-45px;top:398px;width:25px;height:3px;background:#f0c424"></div>
<div class="a" style="left:-20px;top:378px;width:3px;height:23px;background:#c99a10"></div>
<div class="a" style="left:4px;top:381px;width:2px;height:17px;background:#c99a10"></div>
<div class="a" style="left:26px;top:378px;width:3px;height:22px;background:#bfbfbf"></div>
<div class="a" style="left:49.5px;top:378px;width:2.5px;height:23px;background:#bfbfbf"></div>
<div class="a" style="left:-45px;top:405px;width:97px;height:20px;background:#fff"></div>
<div class="a" style="left:-45px;top:425px;width:97px;height:3px;background:#b0b0b0"></div>
<div class="a" style="left:-45px;top:428px;width:71px;height:4px;background:linear-gradient(90deg,#156092,#00b0f0 52%,#1b4675)"></div>
<div class="a" style="left:29px;top:428px;width:23px;height:4px;background:#1f3864"></div>
<div class="a" style="left:26px;top:427.5px;width:3px;height:5px;background:#ffff00"></div>
<div class="a" style="left:-45px;top:405px;width:25px;height:3px;background:#f5e428"></div>
<div class="a" style="left:-45px;top:425px;width:25px;height:3px;background:#f0c424"></div>
<div class="a" style="left:-20px;top:405px;width:3px;height:23px;background:#c99a10"></div>
<div class="a" style="left:4px;top:408px;width:2px;height:17px;background:#c99a10"></div>
<div class="a" style="left:26px;top:405px;width:3px;height:22px;background:#bfbfbf"></div>
<div class="a" style="left:49.5px;top:405px;width:2.5px;height:23px;background:#bfbfbf"></div>
<div class="a" style="left:52px;top:57px;width:3px;height:62px;background:#1f3864"></div>
<div class="a" style="left:52px;top:119px;width:3px;height:16px;background:#1f4e79"></div>
<div class="a" style="left:52px;top:135px;width:3px;height:280px;background:#1f4e79"></div>
<div class="a" style="left:55px;top:57px;width:100px;height:61px;background:#2f5597;border-top:3px solid #ffc000;border-right:3px solid #ffc000"></div>
<div class="a" style="left:55px;top:57px;width:1px;height:61px;background:#f3c51f"></div>
<div class="a" style="left:56px;top:60px;width:1px;height:58px;background:#7d6a14"></div>
<div class="a" style="left:57px;top:60px;width:1px;height:58px;background:#e8c94a"></div>
<div class="a" style="left:83px;top:60px;width:1px;height:58px;background:#e8c94a"></div>
<div class="a" style="left:84px;top:60px;width:1px;height:58px;background:#7d6a14"></div>
<div class="a" style="left:85px;top:60px;width:1px;height:58px;background:#e8c94a"></div>
<div class="a" style="left:106px;top:60px;width:1px;height:58px;background:#e8c94a"></div>
<div class="a" style="left:107px;top:60px;width:1px;height:58px;background:#7d6a14"></div>
<div class="a" style="left:108px;top:60px;width:1px;height:58px;background:#e8c94a"></div>
<div class="a" style="left:129px;top:60px;width:1px;height:58px;background:#e8c94a"></div>
<div class="a" style="left:130px;top:60px;width:1px;height:58px;background:#7d6a14"></div>
<div class="a" style="left:131px;top:60px;width:1px;height:58px;background:#e8c94a"></div>
<div class="wk" style="left:38.1px;top:81px">week4</div>
<div class="wk" style="left:63.6px;top:81px">week3</div>
<div class="wk" style="left:86.6px;top:81px">week2</div>
<div class="wk" style="left:109.6px;top:81px">week1</div>
<div class="a" style="left:55px;top:118px;width:100px;height:3px;background:#375623"></div>
<div class="a" style="left:58px;top:121px;width:71px;height:14px;background:linear-gradient(90deg,#156ea0,#00b0f0 52%,#1b5a87)"></div>
<div class="a" style="left:132px;top:121px;width:23px;height:14px;background:#1f4e79"></div>
<div class="a" style="left:129px;top:121px;width:3px;height:14px;background:#ffff00"></div>
<div class="a" style="left:55px;top:121px;width:3px;height:300px;background:#d4a30c"></div>
<div class="a" style="left:58px;top:135px;width:97px;height:20px;background:#fff"></div>
<div class="a" style="left:58px;top:155px;width:97px;height:3px;background:#b0b0b0"></div>
<div class="a" style="left:58px;top:158px;width:71px;height:4px;background:linear-gradient(90deg,#156ea0,#00b0f0 52%,#1b5a87)"></div>
<div class="a" style="left:132px;top:158px;width:23px;height:4px;background:#1f4e79"></div>
<div class="a" style="left:129px;top:157.5px;width:3px;height:5px;background:#ffff00"></div>
<div class="a" style="left:58px;top:135px;width:25px;height:3px;background:#f5e428"></div>
<div class="a" style="left:58px;top:155px;width:25px;height:3px;background:#f0c424"></div>
<div class="a" style="left:83px;top:135px;width:3px;height:23px;background:#c99a10"></div>
<div class="a" style="left:107px;top:138px;width:2px;height:17px;background:#c99a10"></div>
<div class="a" style="left:129px;top:135px;width:3px;height:22px;background:#bfbfbf"></div>
<div class="a" style="left:152.5px;top:135px;width:2.5px;height:23px;background:#bfbfbf"></div>
<div class="a" style="left:58px;top:162px;width:97px;height:20px;background:#fff"></div>
<div class="a" style="left:58px;top:182px;width:97px;height:3px;background:#b0b0b0"></div>
<div class="a" style="left:58px;top:185px;width:71px;height:4px;background:linear-gradient(90deg,#156ea0,#00b0f0 52%,#1b5a87)"></div>
<div class="a" style="left:132px;top:185px;width:23px;height:4px;background:#1f4e79"></div>
<div class="a" style="left:129px;top:184.5px;width:3px;height:5px;background:#ffff00"></div>
<div class="a" style="left:58px;top:162px;width:25px;height:3px;background:#f5e428"></div>
<div class="a" style="left:58px;top:182px;width:25px;height:3px;background:#f0c424"></div>
<div class="a" style="left:83px;top:162px;width:3px;height:23px;background:#c99a10"></div>
<div class="a" style="left:107px;top:165px;width:2px;height:17px;background:#c99a10"></div>
<div class="a" style="left:129px;top:162px;width:3px;height:22px;background:#bfbfbf"></div>
<div class="a" style="left:152.5px;top:162px;width:2.5px;height:23px;background:#bfbfbf"></div>
<div class="a" style="left:58px;top:189px;width:97px;height:20px;background:#fff"></div>
<div class="a" style="left:58px;top:209px;width:97px;height:3px;background:#b0b0b0"></div>
<div class="a" style="left:58px;top:212px;width:71px;height:4px;background:linear-gradient(90deg,#156ea0,#00b0f0 52%,#1b5a87)"></div>
<div class="a" style="left:132px;top:212px;width:23px;height:4px;background:#1f4e79"></div>
<div class="a" style="left:129px;top:211.5px;width:3px;height:5px;background:#ffff00"></div>
<div class="a" style="left:58px;top:189px;width:25px;height:3px;background:#f5e428"></div>
<div class="a" style="left:58px;top:209px;width:25px;height:3px;background:#f0c424"></div>
<div class="a" style="left:83px;top:189px;width:3px;height:23px;background:#c99a10"></div>
<div class="a" style="left:107px;top:192px;width:2px;height:17px;background:#c99a10"></div>
<div class="a" style="left:129px;top:189px;width:3px;height:22px;background:#bfbfbf"></div>
<div class="a" style="left:152.5px;top:189px;width:2.5px;height:23px;background:#bfbfbf"></div>
<div class="a" style="left:58px;top:216px;width:97px;height:20px;background:#fff"></div>
<div class="a" style="left:58px;top:236px;width:97px;height:3px;background:#b0b0b0"></div>
<div class="a" style="left:58px;top:239px;width:71px;height:4px;background:linear-gradient(90deg,#156ea0,#00b0f0 52%,#1b5a87)"></div>
<div class="a" style="left:132px;top:239px;width:23px;height:4px;background:#1f4e79"></div>
<div class="a" style="left:129px;top:238.5px;width:3px;height:5px;background:#ffff00"></div>
<div class="a" style="left:58px;top:216px;width:25px;height:3px;background:#f5e428"></div>
<div class="a" style="left:58px;top:236px;width:25px;height:3px;background:#f0c424"></div>
<div class="a" style="left:83px;top:216px;width:3px;height:23px;background:#c99a10"></div>
<div class="a" style="left:107px;top:219px;width:2px;height:17px;background:#c99a10"></div>
<div class="a" style="left:129px;top:216px;width:3px;height:22px;background:#bfbfbf"></div>
<div class="a" style="left:152.5px;top:216px;width:2.5px;height:23px;background:#bfbfbf"></div>
<div class="a" style="left:58px;top:243px;width:97px;height:20px;background:#fff"></div>
<div class="a" style="left:58px;top:263px;width:97px;height:3px;background:#b0b0b0"></div>
<div class="a" style="left:58px;top:266px;width:71px;height:4px;background:linear-gradient(90deg,#156ea0,#00b0f0 52%,#1b5a87)"></div>
<div class="a" style="left:132px;top:266px;width:23px;height:4px;background:#1f4e79"></div>
<div class="a" style="left:129px;top:265.5px;width:3px;height:5px;background:#ffff00"></div>
<div class="a" style="left:58px;top:243px;width:25px;height:3px;background:#f5e428"></div>
<div class="a" style="left:58px;top:263px;width:25px;height:3px;background:#f0c424"></div>
<div class="a" style="left:83px;top:243px;width:3px;height:23px;background:#c99a10"></div>
<div class="a" style="left:107px;top:246px;width:2px;height:17px;background:#c99a10"></div>
<div class="a" style="left:129px;top:243px;width:3px;height:22px;background:#bfbfbf"></div>
<div class="a" style="left:152.5px;top:243px;width:2.5px;height:23px;background:#bfbfbf"></div>
<div class="a" style="left:58px;top:270px;width:97px;height:20px;background:#fff"></div>
<div class="a" style="left:58px;top:290px;width:97px;height:3px;background:#b0b0b0"></div>
<div class="a" style="left:58px;top:293px;width:71px;height:4px;background:linear-gradient(90deg,#156ea0,#00b0f0 52%,#1b5a87)"></div>
<div class="a" style="left:132px;top:293px;width:23px;height:4px;background:#1f4e79"></div>
<div class="a" style="left:129px;top:292.5px;width:3px;height:5px;background:#ffff00"></div>
<div class="a" style="left:58px;top:270px;width:25px;height:3px;background:#f5e428"></div>
<div class="a" style="left:58px;top:290px;width:25px;height:3px;background:#f0c424"></div>
<div class="a" style="left:83px;top:270px;width:3px;height:23px;background:#c99a10"></div>
<div class="a" style="left:107px;top:273px;width:2px;height:17px;background:#c99a10"></div>
<div class="a" style="left:129px;top:270px;width:3px;height:22px;background:#bfbfbf"></div>
<div class="a" style="left:152.5px;top:270px;width:2.5px;height:23px;background:#bfbfbf"></div>
<div class="a" style="left:58px;top:297px;width:97px;height:20px;background:#fff"></div>
<div class="a" style="left:58px;top:317px;width:97px;height:3px;background:#b0b0b0"></div>
<div class="a" style="left:58px;top:320px;width:71px;height:4px;background:linear-gradient(90deg,#156ea0,#00b0f0 52%,#1b5a87)"></div>
<div class="a" style="left:132px;top:320px;width:23px;height:4px;background:#1f4e79"></div>
<div class="a" style="left:129px;top:319.5px;width:3px;height:5px;background:#ffff00"></div>
<div class="a" style="left:58px;top:297px;width:25px;height:3px;background:#f5e428"></div>
<div class="a" style="left:58px;top:317px;width:25px;height:3px;background:#f0c424"></div>
<div class="a" style="left:83px;top:297px;width:3px;height:23px;background:#c99a10"></div>
<div class="a" style="left:107px;top:300px;width:2px;height:17px;background:#c99a10"></div>
<div class="a" style="left:129px;top:297px;width:3px;height:22px;background:#bfbfbf"></div>
<div class="a" style="left:152.5px;top:297px;width:2.5px;height:23px;background:#bfbfbf"></div>
<div class="a" style="left:58px;top:324px;width:97px;height:20px;background:#fff"></div>
<div class="a" style="left:58px;top:344px;width:97px;height:3px;background:#b0b0b0"></div>
<div class="a" style="left:58px;top:347px;width:71px;height:4px;background:linear-gradient(90deg,#156ea0,#00b0f0 52%,#1b5a87)"></div>
<div class="a" style="left:132px;top:347px;width:23px;height:4px;background:#1f4e79"></div>
<div class="a" style="left:129px;top:346.5px;width:3px;height:5px;background:#ffff00"></div>
<div class="a" style="left:58px;top:324px;width:25px;height:3px;background:#f5e428"></div>
<div class="a" style="left:58px;top:344px;width:25px;height:3px;background:#f0c424"></div>
<div class="a" style="left:83px;top:324px;width:3px;height:23px;background:#c99a10"></div>
<div class="a" style="left:107px;top:327px;width:2px;height:17px;background:#c99a10"></div>
<div class="a" style="left:129px;top:324px;width:3px;height:22px;background:#bfbfbf"></div>
<div class="a" style="left:152.5px;top:324px;width:2.5px;height:23px;background:#bfbfbf"></div>
<div class="a" style="left:58px;top:351px;width:97px;height:20px;background:#fff"></div>
<div class="a" style="left:58px;top:371px;width:97px;height:3px;background:#b0b0b0"></div>
<div class="a" style="left:58px;top:374px;width:71px;height:4px;background:linear-gradient(90deg,#156ea0,#00b0f0 52%,#1b5a87)"></div>
<div class="a" style="left:132px;top:374px;width:23px;height:4px;background:#1f4e79"></div>
<div class="a" style="left:129px;top:373.5px;width:3px;height:5px;background:#ffff00"></div>
<div class="a" style="left:58px;top:351px;width:25px;height:3px;background:#f5e428"></div>
<div class="a" style="left:58px;top:371px;width:25px;height:3px;background:#f0c424"></div>
<div class="a" style="left:83px;top:351px;width:3px;height:23px;background:#c99a10"></div>
<div class="a" style="left:107px;top:354px;width:2px;height:17px;background:#c99a10"></div>
<div class="a" style="left:129px;top:351px;width:3px;height:22px;background:#bfbfbf"></div>
<div class="a" style="left:152.5px;top:351px;width:2.5px;height:23px;background:#bfbfbf"></div>
<div class="a" style="left:58px;top:378px;width:97px;height:20px;background:#fff"></div>
<div class="a" style="left:58px;top:398px;width:97px;height:3px;background:#b0b0b0"></div>
<div class="a" style="left:58px;top:401px;width:71px;height:4px;background:linear-gradient(90deg,#156ea0,#00b0f0 52%,#1b5a87)"></div>
<div class="a" style="left:132px;top:401px;width:23px;height:4px;background:#1f4e79"></div>
<div class="a" style="left:129px;top:400.5px;width:3px;height:5px;background:#ffff00"></div>
<div class="a" style="left:58px;top:374px;width:26px;height:6px;background:linear-gradient(90deg,#1a66aa,#1579c4)"></div>
<div class="a" style="left:58px;top:399px;width:26px;height:6px;background:linear-gradient(90deg,#1a66aa,#1579c4)"></div>
<div class="a" style="left:84px;top:381px;width:2px;height:17px;background:#c99a10"></div>
<div class="a" style="left:107px;top:381px;width:2px;height:17px;background:#c99a10"></div>
<div class="a" style="left:129px;top:378px;width:3px;height:22px;background:#bfbfbf"></div>
<div class="a" style="left:152.5px;top:378px;width:2.5px;height:23px;background:#bfbfbf"></div>
<div class="a" style="left:58px;top:405px;width:97px;height:20px;background:#fff"></div>
<div class="a" style="left:58px;top:425px;width:97px;height:3px;background:#b0b0b0"></div>
<div class="a" style="left:58px;top:428px;width:71px;height:4px;background:linear-gradient(90deg,#156ea0,#00b0f0 52%,#1b5a87)"></div>
<div class="a" style="left:132px;top:428px;width:23px;height:4px;background:#1f4e79"></div>
<div class="a" style="left:129px;top:427.5px;width:3px;height:5px;background:#ffff00"></div>
<div class="a" style="left:58px;top:405px;width:25px;height:3px;background:#f5e428"></div>
<div class="a" style="left:58px;top:425px;width:25px;height:3px;background:#f0c424"></div>
<div class="a" style="left:83px;top:405px;width:3px;height:23px;background:#c99a10"></div>
<div class="a" style="left:107px;top:408px;width:2px;height:17px;background:#c99a10"></div>
<div class="a" style="left:129px;top:405px;width:3px;height:22px;background:#bfbfbf"></div>
<div class="a" style="left:152.5px;top:405px;width:2.5px;height:23px;background:#bfbfbf"></div>
<div class="a" style="left:155px;top:57px;width:3px;height:62px;background:#1f3864"></div>
<div class="a" style="left:155px;top:119px;width:3px;height:16px;background:#2f5597"></div>
<div class="a" style="left:155px;top:135px;width:3px;height:280px;background:#2f5597"></div>
<div class="a" style="left:158px;top:57px;width:100px;height:61px;background:#1f3864;border-top:3px solid #ffc000;border-right:3px solid #ffc000"></div>
<div class="a" style="left:158px;top:57px;width:1px;height:61px;background:#f3c51f"></div>
<div class="a" style="left:159px;top:60px;width:1px;height:58px;background:#7d6a14"></div>
<div class="a" style="left:160px;top:60px;width:1px;height:58px;background:#e8c94a"></div>
<div class="a" style="left:186px;top:60px;width:1px;height:58px;background:#e8c94a"></div>
<div class="a" style="left:187px;top:60px;width:1px;height:58px;background:#7d6a14"></div>
<div class="a" style="left:188px;top:60px;width:1px;height:58px;background:#e8c94a"></div>
<div class="a" style="left:209px;top:60px;width:1px;height:58px;background:#e8c94a"></div>
<div class="a" style="left:210px;top:60px;width:1px;height:58px;background:#7d6a14"></div>
<div class="a" style="left:211px;top:60px;width:1px;height:58px;background:#e8c94a"></div>
<div class="a" style="left:232px;top:60px;width:1px;height:58px;background:#e8c94a"></div>
<div class="a" style="left:233px;top:60px;width:1px;height:58px;background:#7d6a14"></div>
<div class="a" style="left:234px;top:60px;width:1px;height:58px;background:#e8c94a"></div>
<div class="wk" style="left:141.1px;top:81px">week4</div>
<div class="wk" style="left:166.6px;top:81px">week3</div>
<div class="wk" style="left:189.6px;top:81px">week2</div>
<div class="wk" style="left:212.6px;top:81px">week1</div>
<div class="a" style="left:158px;top:118px;width:100px;height:3px;background:#375623"></div>
<div class="a" style="left:161px;top:121px;width:71px;height:14px;background:linear-gradient(90deg,#1f73b4,#00b0f0 52%,#2960a2)"></div>
<div class="a" style="left:235px;top:121px;width:23px;height:14px;background:#2f5597"></div>
<div class="a" style="left:232px;top:121px;width:3px;height:14px;background:#ffff00"></div>
<div class="a" style="left:158px;top:121px;width:3px;height:300px;background:#d4a30c"></div>
<div class="a" style="left:161px;top:135px;width:97px;height:20px;background:#fff"></div>
<div class="a" style="left:161px;top:155px;width:97px;height:3px;background:#b0b0b0"></div>
<div class="a" style="left:161px;top:158px;width:71px;height:4px;background:linear-gradient(90deg,#1f73b4,#00b0f0 52%,#2960a2)"></div>
<div class="a" style="left:235px;top:158px;width:23px;height:4px;background:#2f5597"></div>
<div class="a" style="left:232px;top:157.5px;width:3px;height:5px;background:#ffff00"></div>
<div class="a" style="left:161px;top:135px;width:25px;height:3px;background:#f5e428"></div>
<div class="a" style="left:161px;top:155px;width:25px;height:3px;background:#f0c424"></div>
<div class="a" style="left:186px;top:135px;width:3px;height:23px;background:#c99a10"></div>
<div class="a" style="left:210px;top:138px;width:2px;height:17px;background:#c99a10"></div>
<div class="a" style="left:232px;top:135px;width:3px;height:22px;background:#bfbfbf"></div>
<div class="a" style="left:255.5px;top:135px;width:2.5px;height:23px;background:#bfbfbf"></div>
<div class="a" style="left:161px;top:162px;width:97px;height:20px;background:#fff"></div>
<div class="a" style="left:161px;top:182px;width:97px;height:3px;background:#b0b0b0"></div>
<div class="a" style="left:161px;top:185px;width:71px;height:4px;background:linear-gradient(90deg,#1f73b4,#00b0f0 52%,#2960a2)"></div>
<div class="a" style="left:235px;top:185px;width:23px;height:4px;background:#2f5597"></div>
<div class="a" style="left:232px;top:184.5px;width:3px;height:5px;background:#ffff00"></div>
<div class="a" style="left:161px;top:162px;width:25px;height:3px;background:#f5e428"></div>
<div class="a" style="left:161px;top:182px;width:25px;height:3px;background:#f0c424"></div>
<div class="a" style="left:186px;top:162px;width:3px;height:23px;background:#c99a10"></div>
<div class="a" style="left:210px;top:165px;width:2px;height:17px;background:#c99a10"></div>
<div class="a" style="left:232px;top:162px;width:3px;height:22px;background:#bfbfbf"></div>
<div class="a" style="left:255.5px;top:162px;width:2.5px;height:23px;background:#bfbfbf"></div>
<div class="a" style="left:161px;top:189px;width:97px;height:20px;background:#fff"></div>
<div class="a" style="left:161px;top:209px;width:97px;height:3px;background:#b0b0b0"></div>
<div class="a" style="left:161px;top:212px;width:71px;height:4px;background:linear-gradient(90deg,#1f73b4,#00b0f0 52%,#2960a2)"></div>
<div class="a" style="left:235px;top:212px;width:23px;height:4px;background:#2f5597"></div>
<div class="a" style="left:232px;top:211.5px;width:3px;height:5px;background:#ffff00"></div>
<div class="a" style="left:161px;top:189px;width:25px;height:3px;background:#f5e428"></div>
<div class="a" style="left:161px;top:209px;width:25px;height:3px;background:#f0c424"></div>
<div class="a" style="left:186px;top:189px;width:3px;height:23px;background:#c99a10"></div>
<div class="a" style="left:210px;top:192px;width:2px;height:17px;background:#c99a10"></div>
<div class="a" style="left:232px;top:189px;width:3px;height:22px;background:#bfbfbf"></div>
<div class="a" style="left:255.5px;top:189px;width:2.5px;height:23px;background:#bfbfbf"></div>
<div class="a" style="left:161px;top:216px;width:97px;height:20px;background:#fff"></div>
<div class="a" style="left:161px;top:236px;width:97px;height:3px;background:#b0b0b0"></div>
<div class="a" style="left:161px;top:239px;width:71px;height:4px;background:linear-gradient(90deg,#1f73b4,#00b0f0 52%,#2960a2)"></div>
<div class="a" style="left:235px;top:239px;width:23px;height:4px;background:#2f5597"></div>
<div class="a" style="left:232px;top:238.5px;width:3px;height:5px;background:#ffff00"></div>
<div class="a" style="left:161px;top:216px;width:25px;height:3px;background:#f5e428"></div>
<div class="a" style="left:161px;top:236px;width:25px;height:3px;background:#f0c424"></div>
<div class="a" style="left:186px;top:216px;width:3px;height:23px;background:#c99a10"></div>
<div class="a" style="left:210px;top:219px;width:2px;height:17px;background:#c99a10"></div>
<div class="a" style="left:232px;top:216px;width:3px;height:22px;background:#bfbfbf"></div>
<div class="a" style="left:255.5px;top:216px;width:2.5px;height:23px;background:#bfbfbf"></div>
<div class="a" style="left:161px;top:243px;width:97px;height:20px;background:#fff"></div>
<div class="a" style="left:161px;top:263px;width:97px;height:3px;background:#b0b0b0"></div>
<div class="a" style="left:161px;top:266px;width:71px;height:4px;background:linear-gradient(90deg,#1f73b4,#00b0f0 52%,#2960a2)"></div>
<div class="a" style="left:235px;top:266px;width:23px;height:4px;background:#2f5597"></div>
<div class="a" style="left:232px;top:265.5px;width:3px;height:5px;background:#ffff00"></div>
<div class="a" style="left:161px;top:243px;width:25px;height:3px;background:#f5e428"></div>
<div class="a" style="left:161px;top:263px;width:25px;height:3px;background:#f0c424"></div>
<div class="a" style="left:186px;top:243px;width:3px;height:23px;background:#c99a10"></div>
<div class="a" style="left:210px;top:246px;width:2px;height:17px;background:#c99a10"></div>
<div class="a" style="left:232px;top:243px;width:3px;height:22px;background:#bfbfbf"></div>
<div class="a" style="left:255.5px;top:243px;width:2.5px;height:23px;background:#bfbfbf"></div>
<div class="a" style="left:161px;top:270px;width:97px;height:20px;background:#fff"></div>
<div class="a" style="left:161px;top:290px;width:97px;height:3px;background:#b0b0b0"></div>
<div class="a" style="left:161px;top:293px;width:71px;height:4px;background:linear-gradient(90deg,#1f73b4,#00b0f0 52%,#2960a2)"></div>
<div class="a" style="left:235px;top:293px;width:23px;height:4px;background:#2f5597"></div>
<div class="a" style="left:232px;top:292.5px;width:3px;height:5px;background:#ffff00"></div>
<div class="a" style="left:161px;top:270px;width:25px;height:3px;background:#f5e428"></div>
<div class="a" style="left:161px;top:290px;width:25px;height:3px;background:#f0c424"></div>
<div class="a" style="left:186px;top:270px;width:3px;height:23px;background:#c99a10"></div>
<div class="a" style="left:210px;top:273px;width:2px;height:17px;background:#c99a10"></div>
<div class="a" style="left:232px;top:270px;width:3px;height:22px;background:#bfbfbf"></div>
<div class="a" style="left:255.5px;top:270px;width:2.5px;height:23px;background:#bfbfbf"></div>
<div class="a" style="left:161px;top:297px;width:97px;height:20px;background:#fff"></div>
<div class="a" style="left:161px;top:317px;width:97px;height:3px;background:#b0b0b0"></div>
<div class="a" style="left:161px;top:320px;width:71px;height:4px;background:linear-gradient(90deg,#1f73b4,#00b0f0 52%,#2960a2)"></div>
<div class="a" style="left:235px;top:320px;width:23px;height:4px;background:#2f5597"></div>
<div class="a" style="left:232px;top:319.5px;width:3px;height:5px;background:#ffff00"></div>
<div class="a" style="left:161px;top:297px;width:25px;height:3px;background:#f5e428"></div>
<div class="a" style="left:161px;top:317px;width:25px;height:3px;background:#f0c424"></div>
<div class="a" style="left:186px;top:297px;width:3px;height:23px;background:#c99a10"></div>
<div class="a" style="left:210px;top:300px;width:2px;height:17px;background:#c99a10"></div>
<div class="a" style="left:232px;top:297px;width:3px;height:22px;background:#bfbfbf"></div>
<div class="a" style="left:255.5px;top:297px;width:2.5px;height:23px;background:#bfbfbf"></div>
<div class="a" style="left:161px;top:324px;width:97px;height:20px;background:#fff"></div>
<div class="a" style="left:161px;top:344px;width:97px;height:3px;background:#b0b0b0"></div>
<div class="a" style="left:161px;top:347px;width:71px;height:4px;background:linear-gradient(90deg,#1f73b4,#00b0f0 52%,#2960a2)"></div>
<div class="a" style="left:235px;top:347px;width:23px;height:4px;background:#2f5597"></div>
<div class="a" style="left:232px;top:346.5px;width:3px;height:5px;background:#ffff00"></div>
<div class="a" style="left:161px;top:324px;width:25px;height:3px;background:#f5e428"></div>
<div class="a" style="left:161px;top:344px;width:25px;height:3px;background:#f0c424"></div>
<div class="a" style="left:186px;top:324px;width:3px;height:23px;background:#c99a10"></div>
<div class="a" style="left:210px;top:327px;width:2px;height:17px;background:#c99a10"></div>
<div class="a" style="left:232px;top:324px;width:3px;height:22px;background:#bfbfbf"></div>
<div class="a" style="left:255.5px;top:324px;width:2.5px;height:23px;background:#bfbfbf"></div>
<div class="a" style="left:161px;top:351px;width:97px;height:20px;background:#fff"></div>
<div class="a" style="left:161px;top:371px;width:97px;height:3px;background:#b0b0b0"></div>
<div class="a" style="left:161px;top:374px;width:71px;height:4px;background:linear-gradient(90deg,#1f73b4,#00b0f0 52%,#2960a2)"></div>
<div class="a" style="left:235px;top:374px;width:23px;height:4px;background:#2f5597"></div>
<div class="a" style="left:232px;top:373.5px;width:3px;height:5px;background:#ffff00"></div>
<div class="a" style="left:161px;top:351px;width:25px;height:3px;background:#f5e428"></div>
<div class="a" style="left:161px;top:371px;width:25px;height:3px;background:#f0c424"></div>
<div class="a" style="left:186px;top:351px;width:3px;height:23px;background:#c99a10"></div>
<div class="a" style="left:210px;top:354px;width:2px;height:17px;background:#c99a10"></div>
<div class="a" style="left:232px;top:351px;width:3px;height:22px;background:#bfbfbf"></div>
<div class="a" style="left:255.5px;top:351px;width:2.5px;height:23px;background:#bfbfbf"></div>
<div class="a" style="left:161px;top:378px;width:97px;height:20px;background:#fff"></div>
<div class="a" style="left:161px;top:398px;width:97px;height:3px;background:#b0b0b0"></div>
<div class="a" style="left:161px;top:401px;width:71px;height:4px;background:linear-gradient(90deg,#1f73b4,#00b0f0 52%,#2960a2)"></div>
<div class="a" style="left:235px;top:401px;width:23px;height:4px;background:#2f5597"></div>
<div class="a" style="left:232px;top:400.5px;width:3px;height:5px;background:#ffff00"></div>
<div class="a" style="left:161px;top:378px;width:25px;height:3px;background:#f5e428"></div>
<div class="a" style="left:161px;top:398px;width:25px;height:3px;background:#f0c424"></div>
<div class="a" style="left:186px;top:378px;width:3px;height:23px;background:#c99a10"></div>
<div class="a" style="left:210px;top:381px;width:2px;height:17px;background:#c99a10"></div>
<div class="a" style="left:232px;top:378px;width:3px;height:22px;background:#bfbfbf"></div>
<div class="a" style="left:255.5px;top:378px;width:2.5px;height:23px;background:#bfbfbf"></div>
<div class="a" style="left:161px;top:405px;width:97px;height:20px;background:#fff"></div>
<div class="a" style="left:161px;top:425px;width:97px;height:3px;background:#b0b0b0"></div>
<div class="a" style="left:161px;top:428px;width:71px;height:4px;background:linear-gradient(90deg,#1f73b4,#00b0f0 52%,#2960a2)"></div>
<div class="a" style="left:235px;top:428px;width:23px;height:4px;background:#2f5597"></div>
<div class="a" style="left:232px;top:427.5px;width:3px;height:5px;background:#ffff00"></div>
<div class="a" style="left:161px;top:405px;width:25px;height:3px;background:#f5e428"></div>
<div class="a" style="left:161px;top:425px;width:25px;height:3px;background:#f0c424"></div>
<div class="a" style="left:186px;top:405px;width:3px;height:23px;background:#c99a10"></div>
<div class="a" style="left:210px;top:408px;width:2px;height:17px;background:#c99a10"></div>
<div class="a" style="left:232px;top:405px;width:3px;height:22px;background:#bfbfbf"></div>
<div class="a" style="left:255.5px;top:405px;width:2.5px;height:23px;background:#bfbfbf"></div>
<div class="a" style="left:258px;top:57px;width:3px;height:62px;background:#7f6000"></div>
<div class="a" style="left:258px;top:119px;width:3px;height:16px;background:#ffc000"></div>
<div class="a" style="left:258px;top:135px;width:3px;height:280px;background:#ffc000"></div>
<div class="a" style="left:261px;top:57px;width:100px;height:61px;background:#2f5597;border-top:3px solid #ffc000;border-right:3px solid #ffc000"></div>
<div class="a" style="left:261px;top:57px;width:1px;height:61px;background:#f3c51f"></div>
<div class="a" style="left:262px;top:60px;width:1px;height:58px;background:#7d6a14"></div>
<div class="a" style="left:263px;top:60px;width:1px;height:58px;background:#e8c94a"></div>
<div class="a" style="left:289px;top:60px;width:1px;height:58px;background:#e8c94a"></div>
<div class="a" style="left:290px;top:60px;width:1px;height:58px;background:#7d6a14"></div>
<div class="a" style="left:291px;top:60px;width:1px;height:58px;background:#e8c94a"></div>
<div class="a" style="left:312px;top:60px;width:1px;height:58px;background:#e8c94a"></div>
<div class="a" style="left:313px;top:60px;width:1px;height:58px;background:#7d6a14"></div>
<div class="a" style="left:314px;top:60px;width:1px;height:58px;background:#e8c94a"></div>
<div class="a" style="left:335px;top:60px;width:1px;height:58px;background:#e8c94a"></div>
<div class="a" style="left:336px;top:60px;width:1px;height:58px;background:#7d6a14"></div>
<div class="a" style="left:337px;top:60px;width:1px;height:58px;background:#e8c94a"></div>
<div class="wk" style="left:244.1px;top:81px">week4</div>
<div class="wk" style="left:269.6px;top:81px">week3</div>
<div class="wk" style="left:292.6px;top:81px">week2</div>
<div class="wk" style="left:315.6px;top:81px">week1</div>
<div class="a" style="left:261px;top:118px;width:100px;height:3px;background:#375623"></div>
<div class="a" style="left:264px;top:121px;width:71px;height:14px;background:linear-gradient(90deg,#bf9000,#ffff00 52%,#bf9000)"></div>
<div class="a" style="left:338px;top:121px;width:23px;height:14px;background:#bf9000"></div>
<div class="a" style="left:335px;top:121px;width:3px;height:14px;background:#ffff00"></div>
<div class="a" style="left:261px;top:121px;width:3px;height:300px;background:#d4a30c"></div>
<div class="a" style="left:264px;top:135px;width:97px;height:20px;background:#fff"></div>
<div class="a" style="left:264px;top:155px;width:97px;height:3px;background:#b0b0b0"></div>
<div class="a" style="left:264px;top:158px;width:71px;height:4px;background:linear-gradient(90deg,#ffc000,#ffff00 52%,#ffc000)"></div>
<div class="a" style="left:338px;top:158px;width:23px;height:4px;background:#ffc000"></div>
<div class="a" style="left:335px;top:157.5px;width:3px;height:5px;background:#ffff00"></div>
<div class="a" style="left:264px;top:135px;width:25px;height:3px;background:#f5e428"></div>
<div class="a" style="left:264px;top:155px;width:25px;height:3px;background:#f0c424"></div>
<div class="a" style="left:289px;top:135px;width:3px;height:23px;background:#c99a10"></div>
<div class="a" style="left:313px;top:138px;width:2px;height:17px;background:#c99a10"></div>
<div class="a" style="left:335px;top:135px;width:3px;height:22px;background:#bfbfbf"></div>
<div class="a" style="left:358.5px;top:135px;width:2.5px;height:23px;background:#bfbfbf"></div>
<div class="a" style="left:264px;top:162px;width:97px;height:20px;background:#fff"></div>
<div class="a" style="left:264px;top:182px;width:97px;height:3px;background:#b0b0b0"></div>
<div class="a" style="left:264px;top:185px;width:71px;height:4px;background:linear-gradient(90deg,#ffc000,#ffff00 52%,#ffc000)"></div>
<div class="a" style="left:338px;top:185px;width:23px;height:4px;background:#ffc000"></div>
<div class="a" style="left:335px;top:184.5px;width:3px;height:5px;background:#ffff00"></div>
<div class="a" style="left:264px;top:162px;width:25px;height:3px;background:#f5e428"></div>
<div class="a" style="left:264px;top:182px;width:25px;height:3px;background:#f0c424"></div>
<div class="a" style="left:289px;top:162px;width:3px;height:23px;background:#c99a10"></div>
<div class="a" style="left:313px;top:165px;width:2px;height:17px;background:#c99a10"></div>
<div class="a" style="left:335px;top:162px;width:3px;height:22px;background:#bfbfbf"></div>
<div class="a" style="left:358.5px;top:162px;width:2.5px;height:23px;background:#bfbfbf"></div>
<div class="a" style="left:264px;top:189px;width:97px;height:20px;background:#fff"></div>
<div class="a" style="left:264px;top:209px;width:97px;height:3px;background:#b0b0b0"></div>
<div class="a" style="left:264px;top:212px;width:71px;height:4px;background:linear-gradient(90deg,#ffc000,#ffff00 52%,#ffc000)"></div>
<div class="a" style="left:338px;top:212px;width:23px;height:4px;background:#ffc000"></div>
<div class="a" style="left:335px;top:211.5px;width:3px;height:5px;background:#ffff00"></div>
<div class="a" style="left:264px;top:189px;width:25px;height:3px;background:#f5e428"></div>
<div class="a" style="left:264px;top:209px;width:25px;height:3px;background:#f0c424"></div>
<div class="a" style="left:289px;top:189px;width:3px;height:23px;background:#c99a10"></div>
<div class="a" style="left:313px;top:192px;width:2px;height:17px;background:#c99a10"></div>
<div class="a" style="left:335px;top:189px;width:3px;height:22px;background:#bfbfbf"></div>
<div class="a" style="left:358.5px;top:189px;width:2.5px;height:23px;background:#bfbfbf"></div>
<div class="a" style="left:264px;top:216px;width:97px;height:20px;background:#fff"></div>
<div class="a" style="left:264px;top:236px;width:97px;height:3px;background:#b0b0b0"></div>
<div class="a" style="left:264px;top:239px;width:71px;height:4px;background:linear-gradient(90deg,#ffc000,#ffff00 52%,#ffc000)"></div>
<div class="a" style="left:338px;top:239px;width:23px;height:4px;background:#ffc000"></div>
<div class="a" style="left:335px;top:238.5px;width:3px;height:5px;background:#ffff00"></div>
<div class="a" style="left:264px;top:216px;width:25px;height:3px;background:#f5e428"></div>
<div class="a" style="left:264px;top:236px;width:25px;height:3px;background:#f0c424"></div>
<div class="a" style="left:289px;top:216px;width:3px;height:23px;background:#c99a10"></div>
<div class="a" style="left:313px;top:219px;width:2px;height:17px;background:#c99a10"></div>
<div class="a" style="left:335px;top:216px;width:3px;height:22px;background:#bfbfbf"></div>
<div class="a" style="left:358.5px;top:216px;width:2.5px;height:23px;background:#bfbfbf"></div>
<div class="a" style="left:264px;top:243px;width:97px;height:20px;background:#fff"></div>
<div class="a" style="left:264px;top:263px;width:97px;height:3px;background:#b0b0b0"></div>
<div class="a" style="left:264px;top:266px;width:71px;height:4px;background:linear-gradient(90deg,#ffc000,#ffff00 52%,#ffc000)"></div>
<div class="a" style="left:338px;top:266px;width:23px;height:4px;background:#ffc000"></div>
<div class="a" style="left:335px;top:265.5px;width:3px;height:5px;background:#ffff00"></div>
<div class="a" style="left:264px;top:243px;width:25px;height:3px;background:#f5e428"></div>
<div class="a" style="left:264px;top:263px;width:25px;height:3px;background:#f0c424"></div>
<div class="a" style="left:289px;top:243px;width:3px;height:23px;background:#c99a10"></div>
<div class="a" style="left:313px;top:246px;width:2px;height:17px;background:#c99a10"></div>
<div class="a" style="left:335px;top:243px;width:3px;height:22px;background:#bfbfbf"></div>
<div class="a" style="left:358.5px;top:243px;width:2.5px;height:23px;background:#bfbfbf"></div>
<div class="a" style="left:264px;top:270px;width:97px;height:20px;background:#fff"></div>
<div class="a" style="left:264px;top:290px;width:97px;height:3px;background:#b0b0b0"></div>
<div class="a" style="left:264px;top:293px;width:71px;height:4px;background:linear-gradient(90deg,#ffc000,#ffff00 52%,#ffc000)"></div>
<div class="a" style="left:338px;top:293px;width:23px;height:4px;background:#ffc000"></div>
<div class="a" style="left:335px;top:292.5px;width:3px;height:5px;background:#ffff00"></div>
<div class="a" style="left:264px;top:270px;width:25px;height:3px;background:#f5e428"></div>
<div class="a" style="left:264px;top:290px;width:25px;height:3px;background:#f0c424"></div>
<div class="a" style="left:289px;top:270px;width:3px;height:23px;background:#c99a10"></div>
<div class="a" style="left:313px;top:273px;width:2px;height:17px;background:#c99a10"></div>
<div class="a" style="left:335px;top:270px;width:3px;height:22px;background:#bfbfbf"></div>
<div class="a" style="left:358.5px;top:270px;width:2.5px;height:23px;background:#bfbfbf"></div>
<div class="a" style="left:264px;top:297px;width:97px;height:20px;background:#fff"></div>
<div class="a" style="left:264px;top:317px;width:97px;height:3px;background:#b0b0b0"></div>
<div class="a" style="left:264px;top:320px;width:71px;height:4px;background:linear-gradient(90deg,#ffc000,#ffff00 52%,#ffc000)"></div>
<div class="a" style="left:338px;top:320px;width:23px;height:4px;background:#ffc000"></div>
<div class="a" style="left:335px;top:319.5px;width:3px;height:5px;background:#ffff00"></div>
<div class="a" style="left:264px;top:297px;width:25px;height:3px;background:#f5e428"></div>
<div class="a" style="left:264px;top:317px;width:25px;height:3px;background:#f0c424"></div>
<div class="a" style="left:289px;top:297px;width:3px;height:23px;background:#c99a10"></div>
<div class="a" style="left:313px;top:300px;width:2px;height:17px;background:#c99a10"></div>
<div class="a" style="left:335px;top:297px;width:3px;height:22px;background:#bfbfbf"></div>
<div class="a" style="left:358.5px;top:297px;width:2.5px;height:23px;background:#bfbfbf"></div>
<div class="a" style="left:264px;top:324px;width:97px;height:20px;background:#fff"></div>
<div class="a" style="left:264px;top:344px;width:97px;height:3px;background:#b0b0b0"></div>
<div class="a" style="left:264px;top:347px;width:71px;height:4px;background:linear-gradient(90deg,#ffc000,#ffff00 52%,#ffc000)"></div>
<div class="a" style="left:338px;top:347px;width:23px;height:4px;background:#ffc000"></div>
<div class="a" style="left:335px;top:346.5px;width:3px;height:5px;background:#ffff00"></div>
<div class="a" style="left:264px;top:324px;width:25px;height:3px;background:#f5e428"></div>
<div class="a" style="left:264px;top:344px;width:25px;height:3px;background:#f0c424"></div>
<div class="a" style="left:289px;top:324px;width:3px;height:23px;background:#c99a10"></div>
<div class="a" style="left:313px;top:327px;width:2px;height:17px;background:#c99a10"></div>
<div class="a" style="left:335px;top:324px;width:3px;height:22px;background:#bfbfbf"></div>
<div class="a" style="left:358.5px;top:324px;width:2.5px;height:23px;background:#bfbfbf"></div>
<div class="a" style="left:264px;top:351px;width:97px;height:20px;background:#fff"></div>
<div class="a" style="left:264px;top:371px;width:97px;height:3px;background:#b0b0b0"></div>
<div class="a" style="left:264px;top:374px;width:71px;height:4px;background:linear-gradient(90deg,#ffc000,#ffff00 52%,#ffc000)"></div>
<div class="a" style="left:338px;top:374px;width:23px;height:4px;background:#ffc000"></div>
<div class="a" style="left:335px;top:373.5px;width:3px;height:5px;background:#ffff00"></div>
<div class="a" style="left:264px;top:351px;width:25px;height:3px;background:#f5e428"></div>
<div class="a" style="left:264px;top:371px;width:25px;height:3px;background:#f0c424"></div>
<div class="a" style="left:289px;top:351px;width:3px;height:23px;background:#c99a10"></div>
<div class="a" style="left:313px;top:354px;width:2px;height:17px;background:#c99a10"></div>
<div class="a" style="left:335px;top:351px;width:3px;height:22px;background:#bfbfbf"></div>
<div class="a" style="left:358.5px;top:351px;width:2.5px;height:23px;background:#bfbfbf"></div>
<div class="a" style="left:264px;top:378px;width:97px;height:20px;background:#fff"></div>
<div class="a" style="left:264px;top:398px;width:97px;height:3px;background:#b0b0b0"></div>
<div class="a" style="left:264px;top:401px;width:71px;height:4px;background:linear-gradient(90deg,#ffc000,#ffff00 52%,#ffc000)"></div>
<div class="a" style="left:338px;top:401px;width:23px;height:4px;background:#ffc000"></div>
<div class="a" style="left:335px;top:400.5px;width:3px;height:5px;background:#ffff00"></div>
<div class="a" style="left:264px;top:378px;width:25px;height:3px;background:#f5e428"></div>
<div class="a" style="left:264px;top:398px;width:25px;height:3px;background:#f0c424"></div>
<div class="a" style="left:289px;top:378px;width:3px;height:23px;background:#c99a10"></div>
<div class="a" style="left:313px;top:381px;width:2px;height:17px;background:#c99a10"></div>
<div class="a" style="left:335px;top:378px;width:3px;height:22px;background:#bfbfbf"></div>
<div class="a" style="left:358.5px;top:378px;width:2.5px;height:23px;background:#bfbfbf"></div>
<div class="a" style="left:264px;top:405px;width:97px;height:20px;background:#fff"></div>
<div class="a" style="left:264px;top:425px;width:97px;height:3px;background:#b0b0b0"></div>
<div class="a" style="left:264px;top:428px;width:71px;height:4px;background:linear-gradient(90deg,#ffc000,#ffff00 52%,#ffc000)"></div>
<div class="a" style="left:338px;top:428px;width:23px;height:4px;background:#ffc000"></div>
<div class="a" style="left:335px;top:427.5px;width:3px;height:5px;background:#ffff00"></div>
<div class="a" style="left:264px;top:405px;width:25px;height:3px;background:#f5e428"></div>
<div class="a" style="left:264px;top:425px;width:25px;height:3px;background:#f0c424"></div>
<div class="a" style="left:289px;top:405px;width:3px;height:23px;background:#c99a10"></div>
<div class="a" style="left:313px;top:408px;width:2px;height:17px;background:#c99a10"></div>
<div class="a" style="left:335px;top:405px;width:3px;height:22px;background:#bfbfbf"></div>
<div class="a" style="left:358.5px;top:405px;width:2.5px;height:23px;background:#bfbfbf"></div>
<div class="a" style="left:361px;top:57px;width:3px;height:62px;background:#bf9000"></div>
<div class="a" style="left:361px;top:119px;width:3px;height:16px;background:#bf9000"></div>
<div class="a" style="left:361px;top:135px;width:3px;height:280px;background:#ffc000"></div>
<div class="a" style="left:364px;top:57px;width:100px;height:61px;background:#1f3864;border-top:3px solid #ffc000;border-right:3px solid #ffc000"></div>
<div class="a" style="left:364px;top:57px;width:1px;height:61px;background:#f3c51f"></div>
<div class="a" style="left:365px;top:60px;width:1px;height:58px;background:#7d6a14"></div>
<div class="a" style="left:366px;top:60px;width:1px;height:58px;background:#e8c94a"></div>
<div class="a" style="left:392px;top:60px;width:1px;height:58px;background:#e8c94a"></div>
<div class="a" style="left:393px;top:60px;width:1px;height:58px;background:#7d6a14"></div>
<div class="a" style="left:394px;top:60px;width:1px;height:58px;background:#e8c94a"></div>
<div class="a" style="left:415px;top:60px;width:1px;height:58px;background:#e8c94a"></div>
<div class="a" style="left:416px;top:60px;width:1px;height:58px;background:#7d6a14"></div>
<div class="a" style="left:417px;top:60px;width:1px;height:58px;background:#e8c94a"></div>
<div class="a" style="left:438px;top:60px;width:1px;height:58px;background:#e8c94a"></div>
<div class="a" style="left:439px;top:60px;width:1px;height:58px;background:#7d6a14"></div>
<div class="a" style="left:440px;top:60px;width:1px;height:58px;background:#e8c94a"></div>
<div class="wk" style="left:347.1px;top:81px">week4</div>
<div class="wk" style="left:372.6px;top:81px">week3</div>
<div class="wk" style="left:395.6px;top:81px">week2</div>
<div class="wk" style="left:418.6px;top:81px">week1</div>
<div class="a" style="left:364px;top:118px;width:100px;height:3px;background:#375623"></div>
<div class="a" style="left:367px;top:121px;width:71px;height:14px;background:linear-gradient(90deg,#bf9000,#ffff00 52%,#bf9000)"></div>
<div class="a" style="left:441px;top:121px;width:23px;height:14px;background:#bf9000"></div>
<div class="a" style="left:438px;top:121px;width:3px;height:14px;background:#ffff00"></div>
<div class="a" style="left:364px;top:121px;width:3px;height:300px;background:#d4a30c"></div>
<div class="a" style="left:367px;top:135px;width:97px;height:20px;background:#fff"></div>
<div class="a" style="left:367px;top:155px;width:97px;height:3px;background:#b0b0b0"></div>
<div class="a" style="left:367px;top:158px;width:71px;height:4px;background:linear-gradient(90deg,#ffc000,#ffff00 52%,#ffc000)"></div>
<div class="a" style="left:441px;top:158px;width:23px;height:4px;background:#ffc000"></div>
<div class="a" style="left:438px;top:157.5px;width:3px;height:5px;background:#ffff00"></div>
<div class="a" style="left:367px;top:135px;width:25px;height:3px;background:#f5e428"></div>
<div class="a" style="left:367px;top:155px;width:25px;height:3px;background:#f0c424"></div>
<div class="a" style="left:392px;top:135px;width:3px;height:23px;background:#c99a10"></div>
<div class="a" style="left:416px;top:138px;width:2px;height:17px;background:#c99a10"></div>
<div class="a" style="left:438px;top:135px;width:3px;height:22px;background:#bfbfbf"></div>
<div class="a" style="left:461.5px;top:135px;width:2.5px;height:23px;background:#bfbfbf"></div>
<div class="a" style="left:367px;top:162px;width:97px;height:20px;background:#fff"></div>
<div class="a" style="left:367px;top:182px;width:97px;height:3px;background:#b0b0b0"></div>
<div class="a" style="left:367px;top:185px;width:71px;height:4px;background:linear-gradient(90deg,#ffc000,#ffff00 52%,#ffc000)"></div>
<div class="a" style="left:441px;top:185px;width:23px;height:4px;background:#ffc000"></div>
<div class="a" style="left:438px;top:184.5px;width:3px;height:5px;background:#ffff00"></div>
<div class="a" style="left:367px;top:162px;width:25px;height:3px;background:#f5e428"></div>
<div class="a" style="left:367px;top:182px;width:25px;height:3px;background:#f0c424"></div>
<div class="a" style="left:392px;top:162px;width:3px;height:23px;background:#c99a10"></div>
<div class="a" style="left:416px;top:165px;width:2px;height:17px;background:#c99a10"></div>
<div class="a" style="left:438px;top:162px;width:3px;height:22px;background:#bfbfbf"></div>
<div class="a" style="left:461.5px;top:162px;width:2.5px;height:23px;background:#bfbfbf"></div>
<div class="a" style="left:367px;top:189px;width:97px;height:20px;background:#fff"></div>
<div class="a" style="left:367px;top:209px;width:97px;height:3px;background:#b0b0b0"></div>
<div class="a" style="left:367px;top:212px;width:71px;height:4px;background:linear-gradient(90deg,#ffc000,#ffff00 52%,#ffc000)"></div>
<div class="a" style="left:441px;top:212px;width:23px;height:4px;background:#ffc000"></div>
<div class="a" style="left:438px;top:211.5px;width:3px;height:5px;background:#ffff00"></div>
<div class="a" style="left:367px;top:189px;width:25px;height:3px;background:#f5e428"></div>
<div class="a" style="left:367px;top:209px;width:25px;height:3px;background:#f0c424"></div>
<div class="a" style="left:392px;top:189px;width:3px;height:23px;background:#c99a10"></div>
<div class="a" style="left:416px;top:192px;width:2px;height:17px;background:#c99a10"></div>
<div class="a" style="left:438px;top:189px;width:3px;height:22px;background:#bfbfbf"></div>
<div class="a" style="left:461.5px;top:189px;width:2.5px;height:23px;background:#bfbfbf"></div>
<div class="a" style="left:367px;top:216px;width:97px;height:20px;background:#fff"></div>
<div class="a" style="left:367px;top:236px;width:97px;height:3px;background:#b0b0b0"></div>
<div class="a" style="left:367px;top:239px;width:71px;height:4px;background:linear-gradient(90deg,#ffc000,#ffff00 52%,#ffc000)"></div>
<div class="a" style="left:441px;top:239px;width:23px;height:4px;background:#ffc000"></div>
<div class="a" style="left:438px;top:238.5px;width:3px;height:5px;background:#ffff00"></div>
<div class="a" style="left:367px;top:216px;width:25px;height:3px;background:#f5e428"></div>
<div class="a" style="left:367px;top:236px;width:25px;height:3px;background:#f0c424"></div>
<div class="a" style="left:392px;top:216px;width:3px;height:23px;background:#c99a10"></div>
<div class="a" style="left:416px;top:219px;width:2px;height:17px;background:#c99a10"></div>
<div class="a" style="left:438px;top:216px;width:3px;height:22px;background:#bfbfbf"></div>
<div class="a" style="left:461.5px;top:216px;width:2.5px;height:23px;background:#bfbfbf"></div>
<div class="a" style="left:367px;top:243px;width:97px;height:20px;background:#fff"></div>
<div class="a" style="left:367px;top:263px;width:97px;height:3px;background:#b0b0b0"></div>
<div class="a" style="left:367px;top:266px;width:71px;height:4px;background:linear-gradient(90deg,#ffc000,#ffff00 52%,#ffc000)"></div>
<div class="a" style="left:441px;top:266px;width:23px;height:4px;background:#ffc000"></div>
<div class="a" style="left:438px;top:265.5px;width:3px;height:5px;background:#ffff00"></div>
<div class="a" style="left:367px;top:243px;width:25px;height:3px;background:#f5e428"></div>
<div class="a" style="left:367px;top:263px;width:25px;height:3px;background:#f0c424"></div>
<div class="a" style="left:392px;top:243px;width:3px;height:23px;background:#c99a10"></div>
<div class="a" style="left:416px;top:246px;width:2px;height:17px;background:#c99a10"></div>
<div class="a" style="left:438px;top:243px;width:3px;height:22px;background:#bfbfbf"></div>
<div class="a" style="left:461.5px;top:243px;width:2.5px;height:23px;background:#bfbfbf"></div>
<div class="a" style="left:367px;top:270px;width:97px;height:20px;background:#fff"></div>
<div class="a" style="left:367px;top:290px;width:97px;height:3px;background:#b0b0b0"></div>
<div class="a" style="left:367px;top:293px;width:71px;height:4px;background:linear-gradient(90deg,#ffc000,#ffff00 52%,#ffc000)"></div>
<div class="a" style="left:441px;top:293px;width:23px;height:4px;background:#ffc000"></div>
<div class="a" style="left:438px;top:292.5px;width:3px;height:5px;background:#ffff00"></div>
<div class="a" style="left:367px;top:270px;width:25px;height:3px;background:#f5e428"></div>
<div class="a" style="left:367px;top:290px;width:25px;height:3px;background:#f0c424"></div>
<div class="a" style="left:392px;top:270px;width:3px;height:23px;background:#c99a10"></div>
<div class="a" style="left:416px;top:273px;width:2px;height:17px;background:#c99a10"></div>
<div class="a" style="left:438px;top:270px;width:3px;height:22px;background:#bfbfbf"></div>
<div class="a" style="left:461.5px;top:270px;width:2.5px;height:23px;background:#bfbfbf"></div>
<div class="a" style="left:367px;top:297px;width:97px;height:20px;background:#fff"></div>
<div class="a" style="left:367px;top:317px;width:97px;height:3px;background:#b0b0b0"></div>
<div class="a" style="left:367px;top:320px;width:71px;height:4px;background:linear-gradient(90deg,#ffc000,#ffff00 52%,#ffc000)"></div>
<div class="a" style="left:441px;top:320px;width:23px;height:4px;background:#ffc000"></div>
<div class="a" style="left:438px;top:319.5px;width:3px;height:5px;background:#ffff00"></div>
<div class="a" style="left:367px;top:297px;width:25px;height:3px;background:#f5e428"></div>
<div class="a" style="left:367px;top:317px;width:25px;height:3px;background:#f0c424"></div>
<div class="a" style="left:392px;top:297px;width:3px;height:23px;background:#c99a10"></div>
<div class="a" style="left:416px;top:300px;width:2px;height:17px;background:#c99a10"></div>
<div class="a" style="left:438px;top:297px;width:3px;height:22px;background:#bfbfbf"></div>
<div class="a" style="left:461.5px;top:297px;width:2.5px;height:23px;background:#bfbfbf"></div>
<div class="a" style="left:367px;top:324px;width:97px;height:20px;background:#fff"></div>
<div class="a" style="left:367px;top:344px;width:97px;height:3px;background:#b0b0b0"></div>
<div class="a" style="left:367px;top:347px;width:71px;height:4px;background:linear-gradient(90deg,#ffc000,#ffff00 52%,#ffc000)"></div>
<div class="a" style="left:441px;top:347px;width:23px;height:4px;background:#ffc000"></div>
<div class="a" style="left:438px;top:346.5px;width:3px;height:5px;background:#ffff00"></div>
<div class="a" style="left:367px;top:324px;width:25px;height:3px;background:#f5e428"></div>
<div class="a" style="left:367px;top:344px;width:25px;height:3px;background:#f0c424"></div>
<div class="a" style="left:392px;top:324px;width:3px;height:23px;background:#c99a10"></div>
<div class="a" style="left:416px;top:327px;width:2px;height:17px;background:#c99a10"></div>
<div class="a" style="left:438px;top:324px;width:3px;height:22px;background:#bfbfbf"></div>
<div class="a" style="left:461.5px;top:324px;width:2.5px;height:23px;background:#bfbfbf"></div>
<div class="a" style="left:367px;top:351px;width:97px;height:20px;background:#fff"></div>
<div class="a" style="left:367px;top:371px;width:97px;height:3px;background:#b0b0b0"></div>
<div class="a" style="left:367px;top:374px;width:71px;height:4px;background:linear-gradient(90deg,#ffc000,#ffff00 52%,#ffc000)"></div>
<div class="a" style="left:441px;top:374px;width:23px;height:4px;background:#ffc000"></div>
<div class="a" style="left:438px;top:373.5px;width:3px;height:5px;background:#ffff00"></div>
<div class="a" style="left:367px;top:351px;width:25px;height:3px;background:#f5e428"></div>
<div class="a" style="left:367px;top:371px;width:25px;height:3px;background:#f0c424"></div>
<div class="a" style="left:392px;top:351px;width:3px;height:23px;background:#c99a10"></div>
<div class="a" style="left:416px;top:354px;width:2px;height:17px;background:#c99a10"></div>
<div class="a" style="left:438px;top:351px;width:3px;height:22px;background:#bfbfbf"></div>
<div class="a" style="left:461.5px;top:351px;width:2.5px;height:23px;background:#bfbfbf"></div>
<div class="a" style="left:367px;top:378px;width:97px;height:20px;background:#fff"></div>
<div class="a" style="left:367px;top:398px;width:97px;height:3px;background:#b0b0b0"></div>
<div class="a" style="left:367px;top:401px;width:71px;height:4px;background:linear-gradient(90deg,#ffc000,#ffff00 52%,#ffc000)"></div>
<div class="a" style="left:441px;top:401px;width:23px;height:4px;background:#ffc000"></div>
<div class="a" style="left:438px;top:400.5px;width:3px;height:5px;background:#ffff00"></div>
<div class="a" style="left:367px;top:378px;width:25px;height:3px;background:#f5e428"></div>
<div class="a" style="left:367px;top:398px;width:25px;height:3px;background:#f0c424"></div>
<div class="a" style="left:392px;top:378px;width:3px;height:23px;background:#c99a10"></div>
<div class="a" style="left:416px;top:381px;width:2px;height:17px;background:#c99a10"></div>
<div class="a" style="left:438px;top:378px;width:3px;height:22px;background:#bfbfbf"></div>
<div class="a" style="left:461.5px;top:378px;width:2.5px;height:23px;background:#bfbfbf"></div>
<div class="a" style="left:367px;top:405px;width:97px;height:20px;background:#fff"></div>
<div class="a" style="left:367px;top:425px;width:97px;height:3px;background:#b0b0b0"></div>
<div class="a" style="left:367px;top:428px;width:71px;height:4px;background:linear-gradient(90deg,#ffc000,#ffff00 52%,#ffc000)"></div>
<div class="a" style="left:441px;top:428px;width:23px;height:4px;background:#ffc000"></div>
<div class="a" style="left:438px;top:427.5px;width:3px;height:5px;background:#ffff00"></div>
<div class="a" style="left:367px;top:405px;width:25px;height:3px;background:#f5e428"></div>
<div class="a" style="left:367px;top:425px;width:25px;height:3px;background:#f0c424"></div>
<div class="a" style="left:392px;top:405px;width:3px;height:23px;background:#c99a10"></div>
<div class="a" style="left:416px;top:408px;width:2px;height:17px;background:#c99a10"></div>
<div class="a" style="left:438px;top:405px;width:3px;height:22px;background:#bfbfbf"></div>
<div class="a" style="left:461.5px;top:405px;width:2.5px;height:23px;background:#bfbfbf"></div>
<div class="a" style="left:464px;top:57px;width:3px;height:62px;background:#ffc000"></div>
<div class="a" style="left:464px;top:119px;width:3px;height:16px;background:#ffc000"></div>
<div class="a" style="left:464px;top:135px;width:3px;height:280px;background:#ffc000"></div>
<div class="a" style="left:467px;top:57px;width:100px;height:61px;background:#2f5597;border-top:3px solid #ffc000;border-right:3px solid #ffc000"></div>
<div class="a" style="left:467px;top:57px;width:1px;height:61px;background:#f3c51f"></div>
<div class="a" style="left:468px;top:60px;width:1px;height:58px;background:#7d6a14"></div>
<div class="a" style="left:469px;top:60px;width:1px;height:58px;background:#e8c94a"></div>
<div class="a" style="left:495px;top:60px;width:1px;height:58px;background:#e8c94a"></div>
<div class="a" style="left:496px;top:60px;width:1px;height:58px;background:#7d6a14"></div>
<div class="a" style="left:497px;top:60px;width:1px;height:58px;background:#e8c94a"></div>
<div class="a" style="left:518px;top:60px;width:1px;height:58px;background:#e8c94a"></div>
<div class="a" style="left:519px;top:60px;width:1px;height:58px;background:#7d6a14"></div>
<div class="a" style="left:520px;top:60px;width:1px;height:58px;background:#e8c94a"></div>
<div class="a" style="left:541px;top:60px;width:1px;height:58px;background:#e8c94a"></div>
<div class="a" style="left:542px;top:60px;width:1px;height:58px;background:#7d6a14"></div>
<div class="a" style="left:543px;top:60px;width:1px;height:58px;background:#e8c94a"></div>
<div class="wk" style="left:450.1px;top:81px">week4</div>
<div class="wk" style="left:475.6px;top:81px">week3</div>
<div class="wk" style="left:498.6px;top:81px">week2</div>
<div class="wk" style="left:521.6px;top:81px">week1</div>
<div class="a" style="left:467px;top:118px;width:100px;height:3px;background:#375623"></div>
<div class="a" style="left:470px;top:121px;width:71px;height:14px;background:linear-gradient(90deg,#bf9000,#ffff00 52%,#bf9000)"></div>
<div class="a" style="left:544px;top:121px;width:23px;height:14px;background:#bf9000"></div>
<div class="a" style="left:541px;top:121px;width:3px;height:14px;background:#ffff00"></div>
<div class="a" style="left:467px;top:121px;width:3px;height:300px;background:#d4a30c"></div>
<div class="a" style="left:470px;top:135px;width:97px;height:20px;background:#fff"></div>
<div class="a" style="left:470px;top:155px;width:97px;height:3px;background:#b0b0b0"></div>
<div class="a" style="left:470px;top:158px;width:71px;height:4px;background:linear-gradient(90deg,#ffc000,#ffff00 52%,#ffc000)"></div>
<div class="a" style="left:544px;top:158px;width:23px;height:4px;background:#ffc000"></div>
<div class="a" style="left:541px;top:157.5px;width:3px;height:5px;background:#ffff00"></div>
<div class="a" style="left:470px;top:135px;width:25px;height:3px;background:#f5e428"></div>
<div class="a" style="left:470px;top:155px;width:25px;height:3px;background:#f0c424"></div>
<div class="a" style="left:495px;top:135px;width:3px;height:23px;background:#c99a10"></div>
<div class="a" style="left:519px;top:138px;width:2px;height:17px;background:#c99a10"></div>
<div class="a" style="left:541px;top:135px;width:3px;height:22px;background:#bfbfbf"></div>
<div class="a" style="left:564.5px;top:135px;width:2.5px;height:23px;background:#bfbfbf"></div>
<div class="a" style="left:470px;top:162px;width:97px;height:20px;background:#fff"></div>
<div class="a" style="left:470px;top:182px;width:97px;height:3px;background:#b0b0b0"></div>
<div class="a" style="left:470px;top:185px;width:71px;height:4px;background:linear-gradient(90deg,#ffc000,#ffff00 52%,#ffc000)"></div>
<div class="a" style="left:544px;top:185px;width:23px;height:4px;background:#ffc000"></div>
<div class="a" style="left:541px;top:184.5px;width:3px;height:5px;background:#ffff00"></div>
<div class="a" style="left:470px;top:162px;width:25px;height:3px;background:#f5e428"></div>
<div class="a" style="left:470px;top:182px;width:25px;height:3px;background:#f0c424"></div>
<div class="a" style="left:495px;top:162px;width:3px;height:23px;background:#c99a10"></div>
<div class="a" style="left:519px;top:165px;width:2px;height:17px;background:#c99a10"></div>
<div class="a" style="left:541px;top:162px;width:3px;height:22px;background:#bfbfbf"></div>
<div class="a" style="left:564.5px;top:162px;width:2.5px;height:23px;background:#bfbfbf"></div>
<div class="a" style="left:470px;top:189px;width:97px;height:20px;background:#fff"></div>
<div class="a" style="left:470px;top:209px;width:97px;height:3px;background:#b0b0b0"></div>
<div class="a" style="left:470px;top:212px;width:71px;height:4px;background:linear-gradient(90deg,#ffc000,#ffff00 52%,#ffc000)"></div>
<div class="a" style="left:544px;top:212px;width:23px;height:4px;background:#ffc000"></div>
<div class="a" style="left:541px;top:211.5px;width:3px;height:5px;background:#ffff00"></div>
<div class="a" style="left:470px;top:189px;width:25px;height:3px;background:#f5e428"></div>
<div class="a" style="left:470px;top:209px;width:25px;height:3px;background:#f0c424"></div>
<div class="a" style="left:495px;top:189px;width:3px;height:23px;background:#c99a10"></div>
<div class="a" style="left:519px;top:192px;width:2px;height:17px;background:#c99a10"></div>
<div class="a" style="left:541px;top:189px;width:3px;height:22px;background:#bfbfbf"></div>
<div class="a" style="left:564.5px;top:189px;width:2.5px;height:23px;background:#bfbfbf"></div>
<div class="a" style="left:470px;top:216px;width:97px;height:20px;background:#fff"></div>
<div class="a" style="left:470px;top:236px;width:97px;height:3px;background:#b0b0b0"></div>
<div class="a" style="left:470px;top:239px;width:71px;height:4px;background:linear-gradient(90deg,#ffc000,#ffff00 52%,#ffc000)"></div>
<div class="a" style="left:544px;top:239px;width:23px;height:4px;background:#ffc000"></div>
<div class="a" style="left:541px;top:238.5px;width:3px;height:5px;background:#ffff00"></div>
<div class="a" style="left:470px;top:216px;width:25px;height:3px;background:#f5e428"></div>
<div class="a" style="left:470px;top:236px;width:25px;height:3px;background:#f0c424"></div>
<div class="a" style="left:495px;top:216px;width:3px;height:23px;background:#c99a10"></div>
<div class="a" style="left:519px;top:219px;width:2px;height:17px;background:#c99a10"></div>
<div class="a" style="left:541px;top:216px;width:3px;height:22px;background:#bfbfbf"></div>
<div class="a" style="left:564.5px;top:216px;width:2.5px;height:23px;background:#bfbfbf"></div>
<div class="a" style="left:470px;top:243px;width:97px;height:20px;background:#fff"></div>
<div class="a" style="left:470px;top:263px;width:97px;height:3px;background:#b0b0b0"></div>
<div class="a" style="left:470px;top:266px;width:71px;height:4px;background:linear-gradient(90deg,#ffc000,#ffff00 52%,#ffc000)"></div>
<div class="a" style="left:544px;top:266px;width:23px;height:4px;background:#ffc000"></div>
<div class="a" style="left:541px;top:265.5px;width:3px;height:5px;background:#ffff00"></div>
<div class="a" style="left:470px;top:243px;width:25px;height:3px;background:#f5e428"></div>
<div class="a" style="left:470px;top:263px;width:25px;height:3px;background:#f0c424"></div>
<div class="a" style="left:495px;top:243px;width:3px;height:23px;background:#c99a10"></div>
<div class="a" style="left:519px;top:246px;width:2px;height:17px;background:#c99a10"></div>
<div class="a" style="left:541px;top:243px;width:3px;height:22px;background:#bfbfbf"></div>
<div class="a" style="left:564.5px;top:243px;width:2.5px;height:23px;background:#bfbfbf"></div>
<div class="a" style="left:470px;top:270px;width:97px;height:20px;background:#fff"></div>
<div class="a" style="left:470px;top:290px;width:97px;height:3px;background:#b0b0b0"></div>
<div class="a" style="left:470px;top:293px;width:71px;height:4px;background:linear-gradient(90deg,#ffc000,#ffff00 52%,#ffc000)"></div>
<div class="a" style="left:544px;top:293px;width:23px;height:4px;background:#ffc000"></div>
<div class="a" style="left:541px;top:292.5px;width:3px;height:5px;background:#ffff00"></div>
<div class="a" style="left:470px;top:270px;width:25px;height:3px;background:#f5e428"></div>
<div class="a" style="left:470px;top:290px;width:25px;height:3px;background:#f0c424"></div>
<div class="a" style="left:495px;top:270px;width:3px;height:23px;background:#c99a10"></div>
<div class="a" style="left:519px;top:273px;width:2px;height:17px;background:#c99a10"></div>
<div class="a" style="left:541px;top:270px;width:3px;height:22px;background:#bfbfbf"></div>
<div class="a" style="left:564.5px;top:270px;width:2.5px;height:23px;background:#bfbfbf"></div>
<div class="a" style="left:470px;top:297px;width:97px;height:20px;background:#fff"></div>
<div class="a" style="left:470px;top:317px;width:97px;height:3px;background:#b0b0b0"></div>
<div class="a" style="left:470px;top:320px;width:71px;height:4px;background:linear-gradient(90deg,#ffc000,#ffff00 52%,#ffc000)"></div>
<div class="a" style="left:544px;top:320px;width:23px;height:4px;background:#ffc000"></div>
<div class="a" style="left:541px;top:319.5px;width:3px;height:5px;background:#ffff00"></div>
<div class="a" style="left:470px;top:297px;width:25px;height:3px;background:#f5e428"></div>
<div class="a" style="left:470px;top:317px;width:25px;height:3px;background:#f0c424"></div>
<div class="a" style="left:495px;top:297px;width:3px;height:23px;background:#c99a10"></div>
<div class="a" style="left:519px;top:300px;width:2px;height:17px;background:#c99a10"></div>
<div class="a" style="left:541px;top:297px;width:3px;height:22px;background:#bfbfbf"></div>
<div class="a" style="left:564.5px;top:297px;width:2.5px;height:23px;background:#bfbfbf"></div>
<div class="a" style="left:470px;top:324px;width:97px;height:20px;background:#fff"></div>
<div class="a" style="left:470px;top:344px;width:97px;height:3px;background:#b0b0b0"></div>
<div class="a" style="left:470px;top:347px;width:71px;height:4px;background:linear-gradient(90deg,#ffc000,#ffff00 52%,#ffc000)"></div>
<div class="a" style="left:544px;top:347px;width:23px;height:4px;background:#ffc000"></div>
<div class="a" style="left:541px;top:346.5px;width:3px;height:5px;background:#ffff00"></div>
<div class="a" style="left:470px;top:324px;width:25px;height:3px;background:#f5e428"></div>
<div class="a" style="left:470px;top:344px;width:25px;height:3px;background:#f0c424"></div>
<div class="a" style="left:495px;top:324px;width:3px;height:23px;background:#c99a10"></div>
<div class="a" style="left:519px;top:327px;width:2px;height:17px;background:#c99a10"></div>
<div class="a" style="left:541px;top:324px;width:3px;height:22px;background:#bfbfbf"></div>
<div class="a" style="left:564.5px;top:324px;width:2.5px;height:23px;background:#bfbfbf"></div>
<div class="a" style="left:470px;top:351px;width:97px;height:20px;background:#fff"></div>
<div class="a" style="left:470px;top:371px;width:97px;height:3px;background:#b0b0b0"></div>
<div class="a" style="left:470px;top:374px;width:71px;height:4px;background:linear-gradient(90deg,#ffc000,#ffff00 52%,#ffc000)"></div>
<div class="a" style="left:544px;top:374px;width:23px;height:4px;background:#ffc000"></div>
<div class="a" style="left:541px;top:373.5px;width:3px;height:5px;background:#ffff00"></div>
<div class="a" style="left:470px;top:351px;width:25px;height:3px;background:#f5e428"></div>
<div class="a" style="left:470px;top:371px;width:25px;height:3px;background:#f0c424"></div>
<div class="a" style="left:495px;top:351px;width:3px;height:23px;background:#c99a10"></div>
<div class="a" style="left:519px;top:354px;width:2px;height:17px;background:#c99a10"></div>
<div class="a" style="left:541px;top:351px;width:3px;height:22px;background:#bfbfbf"></div>
<div class="a" style="left:564.5px;top:351px;width:2.5px;height:23px;background:#bfbfbf"></div>
<div class="a" style="left:470px;top:378px;width:97px;height:20px;background:#fff"></div>
<div class="a" style="left:470px;top:398px;width:97px;height:3px;background:#b0b0b0"></div>
<div class="a" style="left:470px;top:401px;width:71px;height:4px;background:linear-gradient(90deg,#ffc000,#ffff00 52%,#ffc000)"></div>
<div class="a" style="left:544px;top:401px;width:23px;height:4px;background:#ffc000"></div>
<div class="a" style="left:541px;top:400.5px;width:3px;height:5px;background:#ffff00"></div>
<div class="a" style="left:470px;top:378px;width:25px;height:3px;background:#f5e428"></div>
<div class="a" style="left:470px;top:398px;width:25px;height:3px;background:#f0c424"></div>
<div class="a" style="left:495px;top:378px;width:3px;height:23px;background:#c99a10"></div>
<div class="a" style="left:519px;top:381px;width:2px;height:17px;background:#c99a10"></div>
<div class="a" style="left:541px;top:378px;width:3px;height:22px;background:#bfbfbf"></div>
<div class="a" style="left:564.5px;top:378px;width:2.5px;height:23px;background:#bfbfbf"></div>
<div class="a" style="left:470px;top:405px;width:97px;height:20px;background:#fff"></div>
<div class="a" style="left:470px;top:425px;width:97px;height:3px;background:#b0b0b0"></div>
<div class="a" style="left:470px;top:428px;width:71px;height:4px;background:linear-gradient(90deg,#ffc000,#ffff00 52%,#ffc000)"></div>
<div class="a" style="left:544px;top:428px;width:23px;height:4px;background:#ffc000"></div>
<div class="a" style="left:541px;top:427.5px;width:3px;height:5px;background:#ffff00"></div>
<div class="a" style="left:470px;top:405px;width:25px;height:3px;background:#f5e428"></div>
<div class="a" style="left:470px;top:425px;width:25px;height:3px;background:#f0c424"></div>
<div class="a" style="left:495px;top:405px;width:3px;height:23px;background:#c99a10"></div>
<div class="a" style="left:519px;top:408px;width:2px;height:17px;background:#c99a10"></div>
<div class="a" style="left:541px;top:405px;width:3px;height:22px;background:#bfbfbf"></div>
<div class="a" style="left:564.5px;top:405px;width:2.5px;height:23px;background:#bfbfbf"></div>
<div class="a" style="left:567px;top:57px;width:3px;height:62px;background:#003300"></div>
<div class="a" style="left:567px;top:119px;width:3px;height:16px;background:#003300"></div>
<div class="a" style="left:567px;top:135px;width:3px;height:280px;background:#003300"></div>
<div class="a" style="left:570px;top:57px;width:100px;height:61px;background:#1f3864;border-top:3px solid #ffc000;border-right:3px solid #ffc000"></div>
<div class="a" style="left:570px;top:57px;width:1px;height:61px;background:#f3c51f"></div>
<div class="a" style="left:571px;top:60px;width:1px;height:58px;background:#7d6a14"></div>
<div class="a" style="left:572px;top:60px;width:1px;height:58px;background:#e8c94a"></div>
<div class="a" style="left:598px;top:60px;width:1px;height:58px;background:#e8c94a"></div>
<div class="a" style="left:599px;top:60px;width:1px;height:58px;background:#7d6a14"></div>
<div class="a" style="left:600px;top:60px;width:1px;height:58px;background:#e8c94a"></div>
<div class="a" style="left:621px;top:60px;width:1px;height:58px;background:#e8c94a"></div>
<div class="a" style="left:622px;top:60px;width:1px;height:58px;background:#7d6a14"></div>
<div class="a" style="left:623px;top:60px;width:1px;height:58px;background:#e8c94a"></div>
<div class="a" style="left:644px;top:60px;width:1px;height:58px;background:#e8c94a"></div>
<div class="a" style="left:645px;top:60px;width:1px;height:58px;background:#7d6a14"></div>
<div class="a" style="left:646px;top:60px;width:1px;height:58px;background:#e8c94a"></div>
<div class="wk" style="left:553.1px;top:81px">week4</div>
<div class="wk" style="left:578.6px;top:81px">week3</div>
<div class="wk" style="left:601.6px;top:81px">week2</div>
<div class="wk" style="left:624.6px;top:81px">week1</div>
<div class="a" style="left:570px;top:118px;width:100px;height:3px;background:#375623"></div>
<div class="a" style="left:573px;top:121px;width:71px;height:14px;background:linear-gradient(90deg,#003300,#70ad47 52%,#003300)"></div>
<div class="a" style="left:647px;top:121px;width:23px;height:14px;background:#003300"></div>
<div class="a" style="left:644px;top:121px;width:3px;height:14px;background:#ffff00"></div>
<div class="a" style="left:570px;top:121px;width:3px;height:300px;background:#d4a30c"></div>
<div class="a" style="left:573px;top:135px;width:97px;height:20px;background:#fff"></div>
<div class="a" style="left:573px;top:155px;width:97px;height:3px;background:#b0b0b0"></div>
<div class="a" style="left:573px;top:158px;width:71px;height:4px;background:linear-gradient(90deg,#2f5f1f,#70ad47 52%,#2f5f1f)"></div>
<div class="a" style="left:647px;top:158px;width:23px;height:4px;background:#003300"></div>
<div class="a" style="left:644px;top:157.5px;width:3px;height:5px;background:#ffff00"></div>
<div class="a" style="left:573px;top:135px;width:25px;height:3px;background:#f5e428"></div>
<div class="a" style="left:573px;top:155px;width:25px;height:3px;background:#f0c424"></div>
<div class="a" style="left:598px;top:135px;width:3px;height:23px;background:#c99a10"></div>
<div class="a" style="left:622px;top:138px;width:2px;height:17px;background:#c99a10"></div>
<div class="a" style="left:644px;top:135px;width:3px;height:22px;background:#bfbfbf"></div>
<div class="a" style="left:667.5px;top:135px;width:2.5px;height:23px;background:#bfbfbf"></div>
<div class="a" style="left:573px;top:162px;width:97px;height:20px;background:#fff"></div>
<div class="a" style="left:573px;top:182px;width:97px;height:3px;background:#b0b0b0"></div>
<div class="a" style="left:573px;top:185px;width:71px;height:4px;background:linear-gradient(90deg,#2f5f1f,#70ad47 52%,#2f5f1f)"></div>
<div class="a" style="left:647px;top:185px;width:23px;height:4px;background:#003300"></div>
<div class="a" style="left:644px;top:184.5px;width:3px;height:5px;background:#ffff00"></div>
<div class="a" style="left:573px;top:162px;width:25px;height:3px;background:#f5e428"></div>
<div class="a" style="left:573px;top:182px;width:25px;height:3px;background:#f0c424"></div>
<div class="a" style="left:598px;top:162px;width:3px;height:23px;background:#c99a10"></div>
<div class="a" style="left:622px;top:165px;width:2px;height:17px;background:#c99a10"></div>
<div class="a" style="left:644px;top:162px;width:3px;height:22px;background:#bfbfbf"></div>
<div class="a" style="left:667.5px;top:162px;width:2.5px;height:23px;background:#bfbfbf"></div>
<div class="a" style="left:573px;top:189px;width:97px;height:20px;background:#fff"></div>
<div class="a" style="left:573px;top:209px;width:97px;height:3px;background:#b0b0b0"></div>
<div class="a" style="left:573px;top:212px;width:71px;height:4px;background:linear-gradient(90deg,#2f5f1f,#70ad47 52%,#2f5f1f)"></div>
<div class="a" style="left:647px;top:212px;width:23px;height:4px;background:#003300"></div>
<div class="a" style="left:644px;top:211.5px;width:3px;height:5px;background:#ffff00"></div>
<div class="a" style="left:573px;top:189px;width:25px;height:3px;background:#f5e428"></div>
<div class="a" style="left:573px;top:209px;width:25px;height:3px;background:#f0c424"></div>
<div class="a" style="left:598px;top:189px;width:3px;height:23px;background:#c99a10"></div>
<div class="a" style="left:622px;top:192px;width:2px;height:17px;background:#c99a10"></div>
<div class="a" style="left:644px;top:189px;width:3px;height:22px;background:#bfbfbf"></div>
<div class="a" style="left:667.5px;top:189px;width:2.5px;height:23px;background:#bfbfbf"></div>
<div class="a" style="left:573px;top:216px;width:97px;height:20px;background:#fff"></div>
<div class="a" style="left:573px;top:236px;width:97px;height:3px;background:#b0b0b0"></div>
<div class="a" style="left:573px;top:239px;width:71px;height:4px;background:linear-gradient(90deg,#2f5f1f,#70ad47 52%,#2f5f1f)"></div>
<div class="a" style="left:647px;top:239px;width:23px;height:4px;background:#003300"></div>
<div class="a" style="left:644px;top:238.5px;width:3px;height:5px;background:#ffff00"></div>
<div class="a" style="left:573px;top:216px;width:25px;height:3px;background:#f5e428"></div>
<div class="a" style="left:573px;top:236px;width:25px;height:3px;background:#f0c424"></div>
<div class="a" style="left:598px;top:216px;width:3px;height:23px;background:#c99a10"></div>
<div class="a" style="left:622px;top:219px;width:2px;height:17px;background:#c99a10"></div>
<div class="a" style="left:644px;top:216px;width:3px;height:22px;background:#bfbfbf"></div>
<div class="a" style="left:667.5px;top:216px;width:2.5px;height:23px;background:#bfbfbf"></div>
<div class="a" style="left:573px;top:243px;width:97px;height:20px;background:#fff"></div>
<div class="a" style="left:573px;top:263px;width:97px;height:3px;background:#b0b0b0"></div>
<div class="a" style="left:573px;top:266px;width:71px;height:4px;background:linear-gradient(90deg,#2f5f1f,#70ad47 52%,#2f5f1f)"></div>
<div class="a" style="left:647px;top:266px;width:23px;height:4px;background:#003300"></div>
<div class="a" style="left:644px;top:265.5px;width:3px;height:5px;background:#ffff00"></div>
<div class="a" style="left:573px;top:243px;width:25px;height:3px;background:#f5e428"></div>
<div class="a" style="left:573px;top:263px;width:25px;height:3px;background:#f0c424"></div>
<div class="a" style="left:598px;top:243px;width:3px;height:23px;background:#c99a10"></div>
<div class="a" style="left:622px;top:246px;width:2px;height:17px;background:#c99a10"></div>
<div class="a" style="left:644px;top:243px;width:3px;height:22px;background:#bfbfbf"></div>
<div class="a" style="left:667.5px;top:243px;width:2.5px;height:23px;background:#bfbfbf"></div>
<div class="a" style="left:573px;top:270px;width:97px;height:20px;background:#fff"></div>
<div class="a" style="left:573px;top:290px;width:97px;height:3px;background:#b0b0b0"></div>
<div class="a" style="left:573px;top:293px;width:71px;height:4px;background:linear-gradient(90deg,#2f5f1f,#70ad47 52%,#2f5f1f)"></div>
<div class="a" style="left:647px;top:293px;width:23px;height:4px;background:#003300"></div>
<div class="a" style="left:644px;top:292.5px;width:3px;height:5px;background:#ffff00"></div>
<div class="a" style="left:573px;top:270px;width:25px;height:3px;background:#f5e428"></div>
<div class="a" style="left:573px;top:290px;width:25px;height:3px;background:#f0c424"></div>
<div class="a" style="left:598px;top:270px;width:3px;height:23px;background:#c99a10"></div>
<div class="a" style="left:622px;top:273px;width:2px;height:17px;background:#c99a10"></div>
<div class="a" style="left:644px;top:270px;width:3px;height:22px;background:#bfbfbf"></div>
<div class="a" style="left:667.5px;top:270px;width:2.5px;height:23px;background:#bfbfbf"></div>
<div class="a" style="left:573px;top:297px;width:97px;height:20px;background:#fff"></div>
<div class="a" style="left:573px;top:317px;width:97px;height:3px;background:#b0b0b0"></div>
<div class="a" style="left:573px;top:320px;width:71px;height:4px;background:linear-gradient(90deg,#2f5f1f,#70ad47 52%,#2f5f1f)"></div>
<div class="a" style="left:647px;top:320px;width:23px;height:4px;background:#003300"></div>
<div class="a" style="left:644px;top:319.5px;width:3px;height:5px;background:#ffff00"></div>
<div class="a" style="left:573px;top:297px;width:25px;height:3px;background:#f5e428"></div>
<div class="a" style="left:573px;top:317px;width:25px;height:3px;background:#f0c424"></div>
<div class="a" style="left:598px;top:297px;width:3px;height:23px;background:#c99a10"></div>
<div class="a" style="left:622px;top:300px;width:2px;height:17px;background:#c99a10"></div>
<div class="a" style="left:644px;top:297px;width:3px;height:22px;background:#bfbfbf"></div>
<div class="a" style="left:667.5px;top:297px;width:2.5px;height:23px;background:#bfbfbf"></div>
<div class="a" style="left:573px;top:324px;width:97px;height:20px;background:#fff"></div>
<div class="a" style="left:573px;top:344px;width:97px;height:3px;background:#b0b0b0"></div>
<div class="a" style="left:573px;top:347px;width:71px;height:4px;background:linear-gradient(90deg,#2f5f1f,#70ad47 52%,#2f5f1f)"></div>
<div class="a" style="left:647px;top:347px;width:23px;height:4px;background:#003300"></div>
<div class="a" style="left:644px;top:346.5px;width:3px;height:5px;background:#ffff00"></div>
<div class="a" style="left:573px;top:324px;width:25px;height:3px;background:#f5e428"></div>
<div class="a" style="left:573px;top:344px;width:25px;height:3px;background:#f0c424"></div>
<div class="a" style="left:598px;top:324px;width:3px;height:23px;background:#c99a10"></div>
<div class="a" style="left:622px;top:327px;width:2px;height:17px;background:#c99a10"></div>
<div class="a" style="left:644px;top:324px;width:3px;height:22px;background:#bfbfbf"></div>
<div class="a" style="left:667.5px;top:324px;width:2.5px;height:23px;background:#bfbfbf"></div>
<div class="a" style="left:573px;top:351px;width:97px;height:20px;background:#fff"></div>
<div class="a" style="left:573px;top:371px;width:97px;height:3px;background:#b0b0b0"></div>
<div class="a" style="left:573px;top:374px;width:71px;height:4px;background:linear-gradient(90deg,#2f5f1f,#70ad47 52%,#2f5f1f)"></div>
<div class="a" style="left:647px;top:374px;width:23px;height:4px;background:#003300"></div>
<div class="a" style="left:644px;top:373.5px;width:3px;height:5px;background:#ffff00"></div>
<div class="a" style="left:573px;top:351px;width:25px;height:3px;background:#f5e428"></div>
<div class="a" style="left:573px;top:371px;width:25px;height:3px;background:#f0c424"></div>
<div class="a" style="left:598px;top:351px;width:3px;height:23px;background:#c99a10"></div>
<div class="a" style="left:622px;top:354px;width:2px;height:17px;background:#c99a10"></div>
<div class="a" style="left:644px;top:351px;width:3px;height:22px;background:#bfbfbf"></div>
<div class="a" style="left:667.5px;top:351px;width:2.5px;height:23px;background:#bfbfbf"></div>
<div class="a" style="left:573px;top:378px;width:97px;height:20px;background:#fff"></div>
<div class="a" style="left:573px;top:398px;width:97px;height:3px;background:#b0b0b0"></div>
<div class="a" style="left:573px;top:401px;width:71px;height:4px;background:linear-gradient(90deg,#2f5f1f,#70ad47 52%,#2f5f1f)"></div>
<div class="a" style="left:647px;top:401px;width:23px;height:4px;background:#003300"></div>
<div class="a" style="left:644px;top:400.5px;width:3px;height:5px;background:#ffff00"></div>
<div class="a" style="left:573px;top:378px;width:25px;height:3px;background:#f5e428"></div>
<div class="a" style="left:573px;top:398px;width:25px;height:3px;background:#f0c424"></div>
<div class="a" style="left:598px;top:378px;width:3px;height:23px;background:#c99a10"></div>
<div class="a" style="left:622px;top:381px;width:2px;height:17px;background:#c99a10"></div>
<div class="a" style="left:644px;top:378px;width:3px;height:22px;background:#bfbfbf"></div>
<div class="a" style="left:667.5px;top:378px;width:2.5px;height:23px;background:#bfbfbf"></div>
<div class="a" style="left:573px;top:405px;width:97px;height:20px;background:#fff"></div>
<div class="a" style="left:573px;top:425px;width:97px;height:3px;background:#b0b0b0"></div>
<div class="a" style="left:573px;top:428px;width:71px;height:4px;background:linear-gradient(90deg,#2f5f1f,#70ad47 52%,#2f5f1f)"></div>
<div class="a" style="left:647px;top:428px;width:23px;height:4px;background:#003300"></div>
<div class="a" style="left:644px;top:427.5px;width:3px;height:5px;background:#ffff00"></div>
<div class="a" style="left:573px;top:405px;width:25px;height:3px;background:#f5e428"></div>
<div class="a" style="left:573px;top:425px;width:25px;height:3px;background:#f0c424"></div>
<div class="a" style="left:598px;top:405px;width:3px;height:23px;background:#c99a10"></div>
<div class="a" style="left:622px;top:408px;width:2px;height:17px;background:#c99a10"></div>
<div class="a" style="left:644px;top:405px;width:3px;height:22px;background:#bfbfbf"></div>
<div class="a" style="left:667.5px;top:405px;width:2.5px;height:23px;background:#bfbfbf"></div>
<div class="a" style="left:670px;top:57px;width:3px;height:62px;background:#003300"></div>
<div class="a" style="left:670px;top:119px;width:3px;height:16px;background:#003300"></div>
<div class="a" style="left:670px;top:135px;width:3px;height:280px;background:#003300"></div>
<div class="a" style="left:673px;top:57px;width:100px;height:61px;background:#2f5597;border-top:3px solid #ffc000;border-right:3px solid #ffc000"></div>
<div class="a" style="left:673px;top:57px;width:1px;height:61px;background:#f3c51f"></div>
<div class="a" style="left:674px;top:60px;width:1px;height:58px;background:#7d6a14"></div>
<div class="a" style="left:675px;top:60px;width:1px;height:58px;background:#e8c94a"></div>
<div class="a" style="left:701px;top:60px;width:1px;height:58px;background:#e8c94a"></div>
<div class="a" style="left:702px;top:60px;width:1px;height:58px;background:#7d6a14"></div>
<div class="a" style="left:703px;top:60px;width:1px;height:58px;background:#e8c94a"></div>
<div class="a" style="left:724px;top:60px;width:1px;height:58px;background:#e8c94a"></div>
<div class="a" style="left:725px;top:60px;width:1px;height:58px;background:#7d6a14"></div>
<div class="a" style="left:726px;top:60px;width:1px;height:58px;background:#e8c94a"></div>
<div class="a" style="left:747px;top:60px;width:1px;height:58px;background:#e8c94a"></div>
<div class="a" style="left:748px;top:60px;width:1px;height:58px;background:#7d6a14"></div>
<div class="a" style="left:749px;top:60px;width:1px;height:58px;background:#e8c94a"></div>
<div class="wk" style="left:656.1px;top:81px">week4</div>
<div class="wk" style="left:681.6px;top:81px">week3</div>
<div class="wk" style="left:704.6px;top:81px">week2</div>
<div class="wk" style="left:727.6px;top:81px">week1</div>
<div class="a" style="left:673px;top:118px;width:100px;height:3px;background:#375623"></div>
<div class="a" style="left:676px;top:121px;width:71px;height:14px;background:linear-gradient(90deg,#003300,#70ad47 52%,#003300)"></div>
<div class="a" style="left:750px;top:121px;width:23px;height:14px;background:#003300"></div>
<div class="a" style="left:747px;top:121px;width:3px;height:14px;background:#ffff00"></div>
<div class="a" style="left:673px;top:121px;width:3px;height:300px;background:#d4a30c"></div>
<div class="a" style="left:676px;top:135px;width:97px;height:20px;background:#fff"></div>
<div class="a" style="left:676px;top:155px;width:97px;height:3px;background:#b0b0b0"></div>
<div class="a" style="left:676px;top:158px;width:71px;height:4px;background:linear-gradient(90deg,#2f5f1f,#70ad47 52%,#2f5f1f)"></div>
<div class="a" style="left:750px;top:158px;width:23px;height:4px;background:#003300"></div>
<div class="a" style="left:747px;top:157.5px;width:3px;height:5px;background:#ffff00"></div>
<div class="a" style="left:676px;top:135px;width:25px;height:3px;background:#f5e428"></div>
<div class="a" style="left:676px;top:155px;width:25px;height:3px;background:#f0c424"></div>
<div class="a" style="left:701px;top:135px;width:3px;height:23px;background:#c99a10"></div>
<div class="a" style="left:725px;top:138px;width:2px;height:17px;background:#c99a10"></div>
<div class="a" style="left:747px;top:135px;width:3px;height:22px;background:#bfbfbf"></div>
<div class="a" style="left:770.5px;top:135px;width:2.5px;height:23px;background:#bfbfbf"></div>
<div class="a" style="left:676px;top:162px;width:97px;height:20px;background:#fff"></div>
<div class="a" style="left:676px;top:182px;width:97px;height:3px;background:#b0b0b0"></div>
<div class="a" style="left:676px;top:185px;width:71px;height:4px;background:linear-gradient(90deg,#2f5f1f,#70ad47 52%,#2f5f1f)"></div>
<div class="a" style="left:750px;top:185px;width:23px;height:4px;background:#003300"></div>
<div class="a" style="left:747px;top:184.5px;width:3px;height:5px;background:#ffff00"></div>
<div class="a" style="left:676px;top:162px;width:25px;height:3px;background:#f5e428"></div>
<div class="a" style="left:676px;top:182px;width:25px;height:3px;background:#f0c424"></div>
<div class="a" style="left:701px;top:162px;width:3px;height:23px;background:#c99a10"></div>
<div class="a" style="left:725px;top:165px;width:2px;height:17px;background:#c99a10"></div>
<div class="a" style="left:747px;top:162px;width:3px;height:22px;background:#bfbfbf"></div>
<div class="a" style="left:770.5px;top:162px;width:2.5px;height:23px;background:#bfbfbf"></div>
<div class="a" style="left:676px;top:189px;width:97px;height:20px;background:#fff"></div>
<div class="a" style="left:676px;top:209px;width:97px;height:3px;background:#b0b0b0"></div>
<div class="a" style="left:676px;top:212px;width:71px;height:4px;background:linear-gradient(90deg,#2f5f1f,#70ad47 52%,#2f5f1f)"></div>
<div class="a" style="left:750px;top:212px;width:23px;height:4px;background:#003300"></div>
<div class="a" style="left:747px;top:211.5px;width:3px;height:5px;background:#ffff00"></div>
<div class="a" style="left:676px;top:189px;width:25px;height:3px;background:#f5e428"></div>
<div class="a" style="left:676px;top:209px;width:25px;height:3px;background:#f0c424"></div>
<div class="a" style="left:701px;top:189px;width:3px;height:23px;background:#c99a10"></div>
<div class="a" style="left:725px;top:192px;width:2px;height:17px;background:#c99a10"></div>
<div class="a" style="left:747px;top:189px;width:3px;height:22px;background:#bfbfbf"></div>
<div class="a" style="left:770.5px;top:189px;width:2.5px;height:23px;background:#bfbfbf"></div>
<div class="a" style="left:676px;top:216px;width:97px;height:20px;background:#fff"></div>
<div class="a" style="left:676px;top:236px;width:97px;height:3px;background:#b0b0b0"></div>
<div class="a" style="left:676px;top:239px;width:71px;height:4px;background:linear-gradient(90deg,#2f5f1f,#70ad47 52%,#2f5f1f)"></div>
<div class="a" style="left:750px;top:239px;width:23px;height:4px;background:#003300"></div>
<div class="a" style="left:747px;top:238.5px;width:3px;height:5px;background:#ffff00"></div>
<div class="a" style="left:676px;top:216px;width:25px;height:3px;background:#f5e428"></div>
<div class="a" style="left:676px;top:236px;width:25px;height:3px;background:#f0c424"></div>
<div class="a" style="left:701px;top:216px;width:3px;height:23px;background:#c99a10"></div>
<div class="a" style="left:725px;top:219px;width:2px;height:17px;background:#c99a10"></div>
<div class="a" style="left:747px;top:216px;width:3px;height:22px;background:#bfbfbf"></div>
<div class="a" style="left:770.5px;top:216px;width:2.5px;height:23px;background:#bfbfbf"></div>
<div class="a" style="left:676px;top:243px;width:97px;height:20px;background:#fff"></div>
<div class="a" style="left:676px;top:263px;width:97px;height:3px;background:#b0b0b0"></div>
<div class="a" style="left:676px;top:266px;width:71px;height:4px;background:linear-gradient(90deg,#2f5f1f,#70ad47 52%,#2f5f1f)"></div>
<div class="a" style="left:750px;top:266px;width:23px;height:4px;background:#003300"></div>
<div class="a" style="left:747px;top:265.5px;width:3px;height:5px;background:#ffff00"></div>
<div class="a" style="left:676px;top:243px;width:25px;height:3px;background:#f5e428"></div>
<div class="a" style="left:676px;top:263px;width:25px;height:3px;background:#f0c424"></div>
<div class="a" style="left:701px;top:243px;width:3px;height:23px;background:#c99a10"></div>
<div class="a" style="left:725px;top:246px;width:2px;height:17px;background:#c99a10"></div>
<div class="a" style="left:747px;top:243px;width:3px;height:22px;background:#bfbfbf"></div>
<div class="a" style="left:770.5px;top:243px;width:2.5px;height:23px;background:#bfbfbf"></div>
<div class="a" style="left:676px;top:270px;width:97px;height:20px;background:#fff"></div>
<div class="a" style="left:676px;top:290px;width:97px;height:3px;background:#b0b0b0"></div>
<div class="a" style="left:676px;top:293px;width:71px;height:4px;background:linear-gradient(90deg,#2f5f1f,#70ad47 52%,#2f5f1f)"></div>
<div class="a" style="left:750px;top:293px;width:23px;height:4px;background:#003300"></div>
<div class="a" style="left:747px;top:292.5px;width:3px;height:5px;background:#ffff00"></div>
<div class="a" style="left:676px;top:270px;width:25px;height:3px;background:#f5e428"></div>
<div class="a" style="left:676px;top:290px;width:25px;height:3px;background:#f0c424"></div>
<div class="a" style="left:701px;top:270px;width:3px;height:23px;background:#c99a10"></div>
<div class="a" style="left:725px;top:273px;width:2px;height:17px;background:#c99a10"></div>
<div class="a" style="left:747px;top:270px;width:3px;height:22px;background:#bfbfbf"></div>
<div class="a" style="left:770.5px;top:270px;width:2.5px;height:23px;background:#bfbfbf"></div>
<div class="a" style="left:676px;top:297px;width:97px;height:20px;background:#fff"></div>
<div class="a" style="left:676px;top:317px;width:97px;height:3px;background:#b0b0b0"></div>
<div class="a" style="left:676px;top:320px;width:71px;height:4px;background:linear-gradient(90deg,#2f5f1f,#70ad47 52%,#2f5f1f)"></div>
<div class="a" style="left:750px;top:320px;width:23px;height:4px;background:#003300"></div>
<div class="a" style="left:747px;top:319.5px;width:3px;height:5px;background:#ffff00"></div>
<div class="a" style="left:676px;top:297px;width:25px;height:3px;background:#f5e428"></div>
<div class="a" style="left:676px;top:317px;width:25px;height:3px;background:#f0c424"></div>
<div class="a" style="left:701px;top:297px;width:3px;height:23px;background:#c99a10"></div>
<div class="a" style="left:725px;top:300px;width:2px;height:17px;background:#c99a10"></div>
<div class="a" style="left:747px;top:297px;width:3px;height:22px;background:#bfbfbf"></div>
<div class="a" style="left:770.5px;top:297px;width:2.5px;height:23px;background:#bfbfbf"></div>
<div class="a" style="left:676px;top:324px;width:97px;height:20px;background:#fff"></div>
<div class="a" style="left:676px;top:344px;width:97px;height:3px;background:#b0b0b0"></div>
<div class="a" style="left:676px;top:347px;width:71px;height:4px;background:linear-gradient(90deg,#2f5f1f,#70ad47 52%,#2f5f1f)"></div>
<div class="a" style="left:750px;top:347px;width:23px;height:4px;background:#003300"></div>
<div class="a" style="left:747px;top:346.5px;width:3px;height:5px;background:#ffff00"></div>
<div class="a" style="left:676px;top:324px;width:25px;height:3px;background:#f5e428"></div>
<div class="a" style="left:676px;top:344px;width:25px;height:3px;background:#f0c424"></div>
<div class="a" style="left:701px;top:324px;width:3px;height:23px;background:#c99a10"></div>
<div class="a" style="left:725px;top:327px;width:2px;height:17px;background:#c99a10"></div>
<div class="a" style="left:747px;top:324px;width:3px;height:22px;background:#bfbfbf"></div>
<div class="a" style="left:770.5px;top:324px;width:2.5px;height:23px;background:#bfbfbf"></div>
<div class="a" style="left:676px;top:351px;width:97px;height:20px;background:#fff"></div>
<div class="a" style="left:676px;top:371px;width:97px;height:3px;background:#b0b0b0"></div>
<div class="a" style="left:676px;top:374px;width:71px;height:4px;background:linear-gradient(90deg,#2f5f1f,#70ad47 52%,#2f5f1f)"></div>
<div class="a" style="left:750px;top:374px;width:23px;height:4px;background:#003300"></div>
<div class="a" style="left:747px;top:373.5px;width:3px;height:5px;background:#ffff00"></div>
<div class="a" style="left:676px;top:351px;width:25px;height:3px;background:#f5e428"></div>
<div class="a" style="left:676px;top:371px;width:25px;height:3px;background:#f0c424"></div>
<div class="a" style="left:701px;top:351px;width:3px;height:23px;background:#c99a10"></div>
<div class="a" style="left:725px;top:354px;width:2px;height:17px;background:#c99a10"></div>
<div class="a" style="left:747px;top:351px;width:3px;height:22px;background:#bfbfbf"></div>
<div class="a" style="left:770.5px;top:351px;width:2.5px;height:23px;background:#bfbfbf"></div>
<div class="a" style="left:676px;top:378px;width:97px;height:20px;background:#fff"></div>
<div class="a" style="left:676px;top:398px;width:97px;height:3px;background:#b0b0b0"></div>
<div class="a" style="left:676px;top:401px;width:71px;height:4px;background:linear-gradient(90deg,#2f5f1f,#70ad47 52%,#2f5f1f)"></div>
<div class="a" style="left:750px;top:401px;width:23px;height:4px;background:#003300"></div>
<div class="a" style="left:747px;top:400.5px;width:3px;height:5px;background:#ffff00"></div>
<div class="a" style="left:676px;top:378px;width:25px;height:3px;background:#f5e428"></div>
<div class="a" style="left:676px;top:398px;width:25px;height:3px;background:#f0c424"></div>
<div class="a" style="left:701px;top:378px;width:3px;height:23px;background:#c99a10"></div>
<div class="a" style="left:725px;top:381px;width:2px;height:17px;background:#c99a10"></div>
<div class="a" style="left:747px;top:378px;width:3px;height:22px;background:#bfbfbf"></div>
<div class="a" style="left:770.5px;top:378px;width:2.5px;height:23px;background:#bfbfbf"></div>
<div class="a" style="left:676px;top:405px;width:97px;height:20px;background:#fff"></div>
<div class="a" style="left:676px;top:425px;width:97px;height:3px;background:#b0b0b0"></div>
<div class="a" style="left:676px;top:428px;width:71px;height:4px;background:linear-gradient(90deg,#2f5f1f,#70ad47 52%,#2f5f1f)"></div>
<div class="a" style="left:750px;top:428px;width:23px;height:4px;background:#003300"></div>
<div class="a" style="left:747px;top:427.5px;width:3px;height:5px;background:#ffff00"></div>
<div class="a" style="left:676px;top:405px;width:25px;height:3px;background:#f5e428"></div>
<div class="a" style="left:676px;top:425px;width:25px;height:3px;background:#f0c424"></div>
<div class="a" style="left:701px;top:405px;width:3px;height:23px;background:#c99a10"></div>
<div class="a" style="left:725px;top:408px;width:2px;height:17px;background:#c99a10"></div>
<div class="a" style="left:747px;top:405px;width:3px;height:22px;background:#bfbfbf"></div>
<div class="a" style="left:770.5px;top:405px;width:2.5px;height:23px;background:#bfbfbf"></div>
<div class="a" style="left:773px;top:57px;width:3px;height:62px;background:#003300"></div>
<div class="a" style="left:773px;top:119px;width:3px;height:16px;background:#003300"></div>
<div class="a" style="left:773px;top:135px;width:3px;height:280px;background:#003300"></div>
<div class="a" style="left:776px;top:57px;width:100px;height:61px;background:#1f3864;border-top:3px solid #ffc000;border-right:3px solid #ffc000"></div>
<div class="a" style="left:776px;top:57px;width:1px;height:61px;background:#f3c51f"></div>
<div class="a" style="left:777px;top:60px;width:1px;height:58px;background:#7d6a14"></div>
<div class="a" style="left:778px;top:60px;width:1px;height:58px;background:#e8c94a"></div>
<div class="a" style="left:804px;top:60px;width:1px;height:58px;background:#e8c94a"></div>
<div class="a" style="left:805px;top:60px;width:1px;height:58px;background:#7d6a14"></div>
<div class="a" style="left:806px;top:60px;width:1px;height:58px;background:#e8c94a"></div>
<div class="a" style="left:827px;top:60px;width:1px;height:58px;background:#e8c94a"></div>
<div class="a" style="left:828px;top:60px;width:1px;height:58px;background:#7d6a14"></div>
<div class="a" style="left:829px;top:60px;width:1px;height:58px;background:#e8c94a"></div>
<div class="a" style="left:850px;top:60px;width:1px;height:58px;background:#e8c94a"></div>
<div class="a" style="left:851px;top:60px;width:1px;height:58px;background:#7d6a14"></div>
<div class="a" style="left:852px;top:60px;width:1px;height:58px;background:#e8c94a"></div>
<div class="wk" style="left:759.1px;top:81px">week4</div>
<div class="wk" style="left:784.6px;top:81px">week3</div>
<div class="wk" style="left:807.6px;top:81px">week2</div>
<div class="wk" style="left:830.6px;top:81px">week1</div>
<div class="a" style="left:776px;top:118px;width:100px;height:3px;background:#375623"></div>
<div class="a" style="left:779px;top:121px;width:71px;height:14px;background:linear-gradient(90deg,#003300,#70ad47 52%,#003300)"></div>
<div class="a" style="left:853px;top:121px;width:23px;height:14px;background:#003300"></div>
<div class="a" style="left:850px;top:121px;width:3px;height:14px;background:#ffff00"></div>
<div class="a" style="left:776px;top:121px;width:3px;height:300px;background:#d4a30c"></div>
<div class="a" style="left:779px;top:135px;width:97px;height:20px;background:#fff"></div>
<div class="a" style="left:779px;top:155px;width:97px;height:3px;background:#b0b0b0"></div>
<div class="a" style="left:779px;top:158px;width:71px;height:4px;background:linear-gradient(90deg,#2f5f1f,#70ad47 52%,#2f5f1f)"></div>
<div class="a" style="left:853px;top:158px;width:23px;height:4px;background:#003300"></div>
<div class="a" style="left:850px;top:157.5px;width:3px;height:5px;background:#ffff00"></div>
<div class="a" style="left:779px;top:135px;width:25px;height:3px;background:#f5e428"></div>
<div class="a" style="left:779px;top:155px;width:25px;height:3px;background:#f0c424"></div>
<div class="a" style="left:804px;top:135px;width:3px;height:23px;background:#c99a10"></div>
<div class="a" style="left:828px;top:138px;width:2px;height:17px;background:#c99a10"></div>
<div class="a" style="left:850px;top:135px;width:3px;height:22px;background:#bfbfbf"></div>
<div class="a" style="left:873.5px;top:135px;width:2.5px;height:23px;background:#bfbfbf"></div>
<div class="a" style="left:779px;top:162px;width:97px;height:20px;background:#fff"></div>
<div class="a" style="left:779px;top:182px;width:97px;height:3px;background:#b0b0b0"></div>
<div class="a" style="left:779px;top:185px;width:71px;height:4px;background:linear-gradient(90deg,#2f5f1f,#70ad47 52%,#2f5f1f)"></div>
<div class="a" style="left:853px;top:185px;width:23px;height:4px;background:#003300"></div>
<div class="a" style="left:850px;top:184.5px;width:3px;height:5px;background:#ffff00"></div>
<div class="a" style="left:779px;top:162px;width:25px;height:3px;background:#f5e428"></div>
<div class="a" style="left:779px;top:182px;width:25px;height:3px;background:#f0c424"></div>
<div class="a" style="left:804px;top:162px;width:3px;height:23px;background:#c99a10"></div>
<div class="a" style="left:828px;top:165px;width:2px;height:17px;background:#c99a10"></div>
<div class="a" style="left:850px;top:162px;width:3px;height:22px;background:#bfbfbf"></div>
<div class="a" style="left:873.5px;top:162px;width:2.5px;height:23px;background:#bfbfbf"></div>
<div class="a" style="left:779px;top:189px;width:97px;height:20px;background:#fff"></div>
<div class="a" style="left:779px;top:209px;width:97px;height:3px;background:#b0b0b0"></div>
<div class="a" style="left:779px;top:212px;width:71px;height:4px;background:linear-gradient(90deg,#2f5f1f,#70ad47 52%,#2f5f1f)"></div>
<div class="a" style="left:853px;top:212px;width:23px;height:4px;background:#003300"></div>
<div class="a" style="left:850px;top:211.5px;width:3px;height:5px;background:#ffff00"></div>
<div class="a" style="left:779px;top:189px;width:25px;height:3px;background:#f5e428"></div>
<div class="a" style="left:779px;top:209px;width:25px;height:3px;background:#f0c424"></div>
<div class="a" style="left:804px;top:189px;width:3px;height:23px;background:#c99a10"></div>
<div class="a" style="left:828px;top:192px;width:2px;height:17px;background:#c99a10"></div>
<div class="a" style="left:850px;top:189px;width:3px;height:22px;background:#bfbfbf"></div>
<div class="a" style="left:873.5px;top:189px;width:2.5px;height:23px;background:#bfbfbf"></div>
<div class="a" style="left:779px;top:216px;width:97px;height:20px;background:#fff"></div>
<div class="a" style="left:779px;top:236px;width:97px;height:3px;background:#b0b0b0"></div>
<div class="a" style="left:779px;top:239px;width:71px;height:4px;background:linear-gradient(90deg,#2f5f1f,#70ad47 52%,#2f5f1f)"></div>
<div class="a" style="left:853px;top:239px;width:23px;height:4px;background:#003300"></div>
<div class="a" style="left:850px;top:238.5px;width:3px;height:5px;background:#ffff00"></div>
<div class="a" style="left:779px;top:216px;width:25px;height:3px;background:#f5e428"></div>
<div class="a" style="left:779px;top:236px;width:25px;height:3px;background:#f0c424"></div>
<div class="a" style="left:804px;top:216px;width:3px;height:23px;background:#c99a10"></div>
<div class="a" style="left:828px;top:219px;width:2px;height:17px;background:#c99a10"></div>
<div class="a" style="left:850px;top:216px;width:3px;height:22px;background:#bfbfbf"></div>
<div class="a" style="left:873.5px;top:216px;width:2.5px;height:23px;background:#bfbfbf"></div>
<div class="a" style="left:779px;top:243px;width:97px;height:20px;background:#fff"></div>
<div class="a" style="left:779px;top:263px;width:97px;height:3px;background:#b0b0b0"></div>
<div class="a" style="left:779px;top:266px;width:71px;height:4px;background:linear-gradient(90deg,#2f5f1f,#70ad47 52%,#2f5f1f)"></div>
<div class="a" style="left:853px;top:266px;width:23px;height:4px;background:#003300"></div>
<div class="a" style="left:850px;top:265.5px;width:3px;height:5px;background:#ffff00"></div>
<div class="a" style="left:779px;top:243px;width:25px;height:3px;background:#f5e428"></div>
<div class="a" style="left:779px;top:263px;width:25px;height:3px;background:#f0c424"></div>
<div class="a" style="left:804px;top:243px;width:3px;height:23px;background:#c99a10"></div>
<div class="a" style="left:828px;top:246px;width:2px;height:17px;background:#c99a10"></div>
<div class="a" style="left:850px;top:243px;width:3px;height:22px;background:#bfbfbf"></div>
<div class="a" style="left:873.5px;top:243px;width:2.5px;height:23px;background:#bfbfbf"></div>
<div class="a" style="left:779px;top:270px;width:97px;height:20px;background:#fff"></div>
<div class="a" style="left:779px;top:290px;width:97px;height:3px;background:#b0b0b0"></div>
<div class="a" style="left:779px;top:293px;width:71px;height:4px;background:linear-gradient(90deg,#2f5f1f,#70ad47 52%,#2f5f1f)"></div>
<div class="a" style="left:853px;top:293px;width:23px;height:4px;background:#003300"></div>
<div class="a" style="left:850px;top:292.5px;width:3px;height:5px;background:#ffff00"></div>
<div class="a" style="left:779px;top:270px;width:25px;height:3px;background:#f5e428"></div>
<div class="a" style="left:779px;top:290px;width:25px;height:3px;background:#f0c424"></div>
<div class="a" style="left:804px;top:270px;width:3px;height:23px;background:#c99a10"></div>
<div class="a" style="left:828px;top:273px;width:2px;height:17px;background:#c99a10"></div>
<div class="a" style="left:850px;top:270px;width:3px;height:22px;background:#bfbfbf"></div>
<div class="a" style="left:873.5px;top:270px;width:2.5px;height:23px;background:#bfbfbf"></div>
<div class="a" style="left:779px;top:297px;width:97px;height:20px;background:#fff"></div>
<div class="a" style="left:779px;top:317px;width:97px;height:3px;background:#b0b0b0"></div>
<div class="a" style="left:779px;top:320px;width:71px;height:4px;background:linear-gradient(90deg,#2f5f1f,#70ad47 52%,#2f5f1f)"></div>
<div class="a" style="left:853px;top:320px;width:23px;height:4px;background:#003300"></div>
<div class="a" style="left:850px;top:319.5px;width:3px;height:5px;background:#ffff00"></div>
<div class="a" style="left:779px;top:297px;width:25px;height:3px;background:#f5e428"></div>
<div class="a" style="left:779px;top:317px;width:25px;height:3px;background:#f0c424"></div>
<div class="a" style="left:804px;top:297px;width:3px;height:23px;background:#c99a10"></div>
<div class="a" style="left:828px;top:300px;width:2px;height:17px;background:#c99a10"></div>
<div class="a" style="left:850px;top:297px;width:3px;height:22px;background:#bfbfbf"></div>
<div class="a" style="left:873.5px;top:297px;width:2.5px;height:23px;background:#bfbfbf"></div>
<div class="a" style="left:779px;top:324px;width:97px;height:20px;background:#fff"></div>
<div class="a" style="left:779px;top:344px;width:97px;height:3px;background:#b0b0b0"></div>
<div class="a" style="left:779px;top:347px;width:71px;height:4px;background:linear-gradient(90deg,#2f5f1f,#70ad47 52%,#2f5f1f)"></div>
<div class="a" style="left:853px;top:347px;width:23px;height:4px;background:#003300"></div>
<div class="a" style="left:850px;top:346.5px;width:3px;height:5px;background:#ffff00"></div>
<div class="a" style="left:779px;top:324px;width:25px;height:3px;background:#f5e428"></div>
<div class="a" style="left:779px;top:344px;width:25px;height:3px;background:#f0c424"></div>
<div class="a" style="left:804px;top:324px;width:3px;height:23px;background:#c99a10"></div>
<div class="a" style="left:828px;top:327px;width:2px;height:17px;background:#c99a10"></div>
<div class="a" style="left:850px;top:324px;width:3px;height:22px;background:#bfbfbf"></div>
<div class="a" style="left:873.5px;top:324px;width:2.5px;height:23px;background:#bfbfbf"></div>
<div class="a" style="left:779px;top:351px;width:97px;height:20px;background:#fff"></div>
<div class="a" style="left:779px;top:371px;width:97px;height:3px;background:#b0b0b0"></div>
<div class="a" style="left:779px;top:374px;width:71px;height:4px;background:linear-gradient(90deg,#2f5f1f,#70ad47 52%,#2f5f1f)"></div>
<div class="a" style="left:853px;top:374px;width:23px;height:4px;background:#003300"></div>
<div class="a" style="left:850px;top:373.5px;width:3px;height:5px;background:#ffff00"></div>
<div class="a" style="left:779px;top:351px;width:25px;height:3px;background:#f5e428"></div>
<div class="a" style="left:779px;top:371px;width:25px;height:3px;background:#f0c424"></div>
<div class="a" style="left:804px;top:351px;width:3px;height:23px;background:#c99a10"></div>
<div class="a" style="left:828px;top:354px;width:2px;height:17px;background:#c99a10"></div>
<div class="a" style="left:850px;top:351px;width:3px;height:22px;background:#bfbfbf"></div>
<div class="a" style="left:873.5px;top:351px;width:2.5px;height:23px;background:#bfbfbf"></div>
<div class="a" style="left:779px;top:378px;width:97px;height:20px;background:#fff"></div>
<div class="a" style="left:779px;top:398px;width:97px;height:3px;background:#b0b0b0"></div>
<div class="a" style="left:779px;top:401px;width:71px;height:4px;background:linear-gradient(90deg,#2f5f1f,#70ad47 52%,#2f5f1f)"></div>
<div class="a" style="left:853px;top:401px;width:23px;height:4px;background:#003300"></div>
<div class="a" style="left:850px;top:400.5px;width:3px;height:5px;background:#ffff00"></div>
<div class="a" style="left:779px;top:378px;width:25px;height:3px;background:#f5e428"></div>
<div class="a" style="left:779px;top:398px;width:25px;height:3px;background:#f0c424"></div>
<div class="a" style="left:804px;top:378px;width:3px;height:23px;background:#c99a10"></div>
<div class="a" style="left:828px;top:381px;width:2px;height:17px;background:#c99a10"></div>
<div class="a" style="left:850px;top:378px;width:3px;height:22px;background:#bfbfbf"></div>
<div class="a" style="left:873.5px;top:378px;width:2.5px;height:23px;background:#bfbfbf"></div>
<div class="a" style="left:779px;top:405px;width:97px;height:20px;background:#fff"></div>
<div class="a" style="left:779px;top:425px;width:97px;height:3px;background:#b0b0b0"></div>
<div class="a" style="left:779px;top:428px;width:71px;height:4px;background:linear-gradient(90deg,#2f5f1f,#70ad47 52%,#2f5f1f)"></div>
<div class="a" style="left:853px;top:428px;width:23px;height:4px;background:#003300"></div>
<div class="a" style="left:850px;top:427.5px;width:3px;height:5px;background:#ffff00"></div>
<div class="a" style="left:779px;top:405px;width:25px;height:3px;background:#f5e428"></div>
<div class="a" style="left:779px;top:425px;width:25px;height:3px;background:#f0c424"></div>
<div class="a" style="left:804px;top:405px;width:3px;height:23px;background:#c99a10"></div>
<div class="a" style="left:828px;top:408px;width:2px;height:17px;background:#c99a10"></div>
<div class="a" style="left:850px;top:405px;width:3px;height:22px;background:#bfbfbf"></div>
<div class="a" style="left:873.5px;top:405px;width:2.5px;height:23px;background:#bfbfbf"></div>
<div class="a" style="left:876px;top:57px;width:3px;height:62px;background:#548235"></div>
<div class="a" style="left:876px;top:119px;width:3px;height:16px;background:#548235"></div>
<div class="a" style="left:876px;top:135px;width:3px;height:280px;background:#548235"></div>
<div class="a" style="left:879px;top:57px;width:100px;height:61px;background:#2f5597;border-top:3px solid #ffc000;border-right:3px solid #ffc000"></div>
<div class="a" style="left:879px;top:57px;width:1px;height:61px;background:#f3c51f"></div>
<div class="a" style="left:880px;top:60px;width:1px;height:58px;background:#7d6a14"></div>
<div class="a" style="left:881px;top:60px;width:1px;height:58px;background:#e8c94a"></div>
<div class="a" style="left:907px;top:60px;width:1px;height:58px;background:#e8c94a"></div>
<div class="a" style="left:908px;top:60px;width:1px;height:58px;background:#7d6a14"></div>
<div class="a" style="left:909px;top:60px;width:1px;height:58px;background:#e8c94a"></div>
<div class="a" style="left:930px;top:60px;width:1px;height:58px;background:#e8c94a"></div>
<div class="a" style="left:931px;top:60px;width:1px;height:58px;background:#7d6a14"></div>
<div class="a" style="left:932px;top:60px;width:1px;height:58px;background:#e8c94a"></div>
<div class="a" style="left:953px;top:60px;width:1px;height:58px;background:#e8c94a"></div>
<div class="a" style="left:954px;top:60px;width:1px;height:58px;background:#7d6a14"></div>
<div class="a" style="left:955px;top:60px;width:1px;height:58px;background:#e8c94a"></div>
<div class="wk" style="left:862.1px;top:81px">week4</div>
<div class="wk" style="left:887.6px;top:81px">week3</div>
<div class="wk" style="left:910.6px;top:81px">week2</div>
<div class="wk" style="left:933.6px;top:81px">week1</div>
<div class="a" style="left:879px;top:118px;width:100px;height:3px;background:#375623"></div>
<div class="a" style="left:882px;top:121px;width:71px;height:14px;background:linear-gradient(90deg,#548235,#92d050 52%,#548235)"></div>
<div class="a" style="left:956px;top:121px;width:23px;height:14px;background:#548235"></div>
<div class="a" style="left:953px;top:121px;width:3px;height:14px;background:#ffff00"></div>
<div class="a" style="left:879px;top:121px;width:3px;height:300px;background:#d4a30c"></div>
<div class="a" style="left:882px;top:135px;width:97px;height:20px;background:#fff"></div>
<div class="a" style="left:882px;top:155px;width:97px;height:3px;background:#b0b0b0"></div>
<div class="a" style="left:882px;top:158px;width:71px;height:4px;background:linear-gradient(90deg,#548235,#92d050 52%,#548235)"></div>
<div class="a" style="left:956px;top:158px;width:23px;height:4px;background:#548235"></div>
<div class="a" style="left:953px;top:157.5px;width:3px;height:5px;background:#ffff00"></div>
<div class="a" style="left:882px;top:135px;width:25px;height:3px;background:#f5e428"></div>
<div class="a" style="left:882px;top:155px;width:25px;height:3px;background:#f0c424"></div>
<div class="a" style="left:907px;top:135px;width:3px;height:23px;background:#c99a10"></div>
<div class="a" style="left:931px;top:138px;width:2px;height:17px;background:#c99a10"></div>
<div class="a" style="left:953px;top:135px;width:3px;height:22px;background:#bfbfbf"></div>
<div class="a" style="left:976.5px;top:135px;width:2.5px;height:23px;background:#bfbfbf"></div>
<div class="a" style="left:882px;top:162px;width:97px;height:20px;background:#fff"></div>
<div class="a" style="left:882px;top:182px;width:97px;height:3px;background:#b0b0b0"></div>
<div class="a" style="left:882px;top:185px;width:71px;height:4px;background:linear-gradient(90deg,#548235,#92d050 52%,#548235)"></div>
<div class="a" style="left:956px;top:185px;width:23px;height:4px;background:#548235"></div>
<div class="a" style="left:953px;top:184.5px;width:3px;height:5px;background:#ffff00"></div>
<div class="a" style="left:882px;top:162px;width:25px;height:3px;background:#f5e428"></div>
<div class="a" style="left:882px;top:182px;width:25px;height:3px;background:#f0c424"></div>
<div class="a" style="left:907px;top:162px;width:3px;height:23px;background:#c99a10"></div>
<div class="a" style="left:931px;top:165px;width:2px;height:17px;background:#c99a10"></div>
<div class="a" style="left:953px;top:162px;width:3px;height:22px;background:#bfbfbf"></div>
<div class="a" style="left:976.5px;top:162px;width:2.5px;height:23px;background:#bfbfbf"></div>
<div class="a" style="left:882px;top:189px;width:97px;height:20px;background:#fff"></div>
<div class="a" style="left:882px;top:209px;width:97px;height:3px;background:#b0b0b0"></div>
<div class="a" style="left:882px;top:212px;width:71px;height:4px;background:linear-gradient(90deg,#548235,#92d050 52%,#548235)"></div>
<div class="a" style="left:956px;top:212px;width:23px;height:4px;background:#548235"></div>
<div class="a" style="left:953px;top:211.5px;width:3px;height:5px;background:#ffff00"></div>
<div class="a" style="left:882px;top:189px;width:25px;height:3px;background:#f5e428"></div>
<div class="a" style="left:882px;top:209px;width:25px;height:3px;background:#f0c424"></div>
<div class="a" style="left:907px;top:189px;width:3px;height:23px;background:#c99a10"></div>
<div class="a" style="left:931px;top:192px;width:2px;height:17px;background:#c99a10"></div>
<div class="a" style="left:953px;top:189px;width:3px;height:22px;background:#bfbfbf"></div>
<div class="a" style="left:976.5px;top:189px;width:2.5px;height:23px;background:#bfbfbf"></div>
<div class="a" style="left:882px;top:216px;width:97px;height:20px;background:#fff"></div>
<div class="a" style="left:882px;top:236px;width:97px;height:3px;background:#b0b0b0"></div>
<div class="a" style="left:882px;top:239px;width:71px;height:4px;background:linear-gradient(90deg,#548235,#92d050 52%,#548235)"></div>
<div class="a" style="left:956px;top:239px;width:23px;height:4px;background:#548235"></div>
<div class="a" style="left:953px;top:238.5px;width:3px;height:5px;background:#ffff00"></div>
<div class="a" style="left:882px;top:216px;width:25px;height:3px;background:#f5e428"></div>
<div class="a" style="left:882px;top:236px;width:25px;height:3px;background:#f0c424"></div>
<div class="a" style="left:907px;top:216px;width:3px;height:23px;background:#c99a10"></div>
<div class="a" style="left:931px;top:219px;width:2px;height:17px;background:#c99a10"></div>
<div class="a" style="left:953px;top:216px;width:3px;height:22px;background:#bfbfbf"></div>
<div class="a" style="left:976.5px;top:216px;width:2.5px;height:23px;background:#bfbfbf"></div>
<div class="a" style="left:882px;top:243px;width:97px;height:20px;background:#fff"></div>
<div class="a" style="left:882px;top:263px;width:97px;height:3px;background:#b0b0b0"></div>
<div class="a" style="left:882px;top:266px;width:71px;height:4px;background:linear-gradient(90deg,#548235,#92d050 52%,#548235)"></div>
<div class="a" style="left:956px;top:266px;width:23px;height:4px;background:#548235"></div>
<div class="a" style="left:953px;top:265.5px;width:3px;height:5px;background:#ffff00"></div>
<div class="a" style="left:882px;top:243px;width:25px;height:3px;background:#f5e428"></div>
<div class="a" style="left:882px;top:263px;width:25px;height:3px;background:#f0c424"></div>
<div class="a" style="left:907px;top:243px;width:3px;height:23px;background:#c99a10"></div>
<div class="a" style="left:931px;top:246px;width:2px;height:17px;background:#c99a10"></div>
<div class="a" style="left:953px;top:243px;width:3px;height:22px;background:#bfbfbf"></div>
<div class="a" style="left:976.5px;top:243px;width:2.5px;height:23px;background:#bfbfbf"></div>
<div class="a" style="left:882px;top:270px;width:97px;height:20px;background:#fff"></div>
<div class="a" style="left:882px;top:290px;width:97px;height:3px;background:#b0b0b0"></div>
<div class="a" style="left:882px;top:293px;width:71px;height:4px;background:linear-gradient(90deg,#548235,#92d050 52%,#548235)"></div>
<div class="a" style="left:956px;top:293px;width:23px;height:4px;background:#548235"></div>
<div class="a" style="left:953px;top:292.5px;width:3px;height:5px;background:#ffff00"></div>
<div class="a" style="left:882px;top:270px;width:25px;height:3px;background:#f5e428"></div>
<div class="a" style="left:882px;top:290px;width:25px;height:3px;background:#f0c424"></div>
<div class="a" style="left:907px;top:270px;width:3px;height:23px;background:#c99a10"></div>
<div class="a" style="left:931px;top:273px;width:2px;height:17px;background:#c99a10"></div>
<div class="a" style="left:953px;top:270px;width:3px;height:22px;background:#bfbfbf"></div>
<div class="a" style="left:976.5px;top:270px;width:2.5px;height:23px;background:#bfbfbf"></div>
<div class="a" style="left:882px;top:297px;width:97px;height:20px;background:#fff"></div>
<div class="a" style="left:882px;top:317px;width:97px;height:3px;background:#b0b0b0"></div>
<div class="a" style="left:882px;top:320px;width:71px;height:4px;background:linear-gradient(90deg,#548235,#92d050 52%,#548235)"></div>
<div class="a" style="left:956px;top:320px;width:23px;height:4px;background:#548235"></div>
<div class="a" style="left:953px;top:319.5px;width:3px;height:5px;background:#ffff00"></div>
<div class="a" style="left:882px;top:297px;width:25px;height:3px;background:#f5e428"></div>
<div class="a" style="left:882px;top:317px;width:25px;height:3px;background:#f0c424"></div>
<div class="a" style="left:907px;top:297px;width:3px;height:23px;background:#c99a10"></div>
<div class="a" style="left:931px;top:300px;width:2px;height:17px;background:#c99a10"></div>
<div class="a" style="left:953px;top:297px;width:3px;height:22px;background:#bfbfbf"></div>
<div class="a" style="left:976.5px;top:297px;width:2.5px;height:23px;background:#bfbfbf"></div>
<div class="a" style="left:882px;top:324px;width:97px;height:20px;background:#fff"></div>
<div class="a" style="left:882px;top:344px;width:97px;height:3px;background:#b0b0b0"></div>
<div class="a" style="left:882px;top:347px;width:71px;height:4px;background:linear-gradient(90deg,#548235,#92d050 52%,#548235)"></div>
<div class="a" style="left:956px;top:347px;width:23px;height:4px;background:#548235"></div>
<div class="a" style="left:953px;top:346.5px;width:3px;height:5px;background:#ffff00"></div>
<div class="a" style="left:882px;top:324px;width:25px;height:3px;background:#f5e428"></div>
<div class="a" style="left:882px;top:344px;width:25px;height:3px;background:#f0c424"></div>
<div class="a" style="left:907px;top:324px;width:3px;height:23px;background:#c99a10"></div>
<div class="a" style="left:931px;top:327px;width:2px;height:17px;background:#c99a10"></div>
<div class="a" style="left:953px;top:324px;width:3px;height:22px;background:#bfbfbf"></div>
<div class="a" style="left:976.5px;top:324px;width:2.5px;height:23px;background:#bfbfbf"></div>
<div class="a" style="left:882px;top:351px;width:97px;height:20px;background:#fff"></div>
<div class="a" style="left:882px;top:371px;width:97px;height:3px;background:#b0b0b0"></div>
<div class="a" style="left:882px;top:374px;width:71px;height:4px;background:linear-gradient(90deg,#548235,#92d050 52%,#548235)"></div>
<div class="a" style="left:956px;top:374px;width:23px;height:4px;background:#548235"></div>
<div class="a" style="left:953px;top:373.5px;width:3px;height:5px;background:#ffff00"></div>
<div class="a" style="left:882px;top:351px;width:25px;height:3px;background:#f5e428"></div>
<div class="a" style="left:882px;top:371px;width:25px;height:3px;background:#f0c424"></div>
<div class="a" style="left:907px;top:351px;width:3px;height:23px;background:#c99a10"></div>
<div class="a" style="left:931px;top:354px;width:2px;height:17px;background:#c99a10"></div>
<div class="a" style="left:953px;top:351px;width:3px;height:22px;background:#bfbfbf"></div>
<div class="a" style="left:976.5px;top:351px;width:2.5px;height:23px;background:#bfbfbf"></div>
<div class="a" style="left:882px;top:378px;width:97px;height:20px;background:#fff"></div>
<div class="a" style="left:882px;top:398px;width:97px;height:3px;background:#b0b0b0"></div>
<div class="a" style="left:882px;top:401px;width:71px;height:4px;background:linear-gradient(90deg,#548235,#92d050 52%,#548235)"></div>
<div class="a" style="left:956px;top:401px;width:23px;height:4px;background:#548235"></div>
<div class="a" style="left:953px;top:400.5px;width:3px;height:5px;background:#ffff00"></div>
<div class="a" style="left:882px;top:378px;width:25px;height:3px;background:#f5e428"></div>
<div class="a" style="left:882px;top:398px;width:25px;height:3px;background:#f0c424"></div>
<div class="a" style="left:907px;top:378px;width:3px;height:23px;background:#c99a10"></div>
<div class="a" style="left:931px;top:381px;width:2px;height:17px;background:#c99a10"></div>
<div class="a" style="left:953px;top:378px;width:3px;height:22px;background:#bfbfbf"></div>
<div class="a" style="left:976.5px;top:378px;width:2.5px;height:23px;background:#bfbfbf"></div>
<div class="a" style="left:882px;top:405px;width:97px;height:20px;background:#fff"></div>
<div class="a" style="left:882px;top:425px;width:97px;height:3px;background:#b0b0b0"></div>
<div class="a" style="left:882px;top:428px;width:71px;height:4px;background:linear-gradient(90deg,#548235,#92d050 52%,#548235)"></div>
<div class="a" style="left:956px;top:428px;width:23px;height:4px;background:#548235"></div>
<div class="a" style="left:953px;top:427.5px;width:3px;height:5px;background:#ffff00"></div>
<div class="a" style="left:882px;top:405px;width:25px;height:3px;background:#f5e428"></div>
<div class="a" style="left:882px;top:425px;width:25px;height:3px;background:#f0c424"></div>
<div class="a" style="left:907px;top:405px;width:3px;height:23px;background:#c99a10"></div>
<div class="a" style="left:931px;top:408px;width:2px;height:17px;background:#c99a10"></div>
<div class="a" style="left:953px;top:405px;width:3px;height:22px;background:#bfbfbf"></div>
<div class="a" style="left:976.5px;top:405px;width:2.5px;height:23px;background:#bfbfbf"></div>
<div class="a" style="left:979px;top:57px;width:3px;height:62px;background:#548235"></div>
<div class="a" style="left:979px;top:119px;width:3px;height:16px;background:#548235"></div>
<div class="a" style="left:979px;top:135px;width:3px;height:280px;background:#548235"></div>
<div class="a" style="left:982px;top:57px;width:100px;height:61px;background:#1f3864;border-top:3px solid #ffc000;border-right:3px solid #ffc000"></div>
<div class="a" style="left:982px;top:57px;width:1px;height:61px;background:#f3c51f"></div>
<div class="a" style="left:983px;top:60px;width:1px;height:58px;background:#7d6a14"></div>
<div class="a" style="left:984px;top:60px;width:1px;height:58px;background:#e8c94a"></div>
<div class="a" style="left:1010px;top:60px;width:1px;height:58px;background:#e8c94a"></div>
<div class="a" style="left:1011px;top:60px;width:1px;height:58px;background:#7d6a14"></div>
<div class="a" style="left:1012px;top:60px;width:1px;height:58px;background:#e8c94a"></div>
<div class="a" style="left:1033px;top:60px;width:1px;height:58px;background:#e8c94a"></div>
<div class="a" style="left:1034px;top:60px;width:1px;height:58px;background:#7d6a14"></div>
<div class="a" style="left:1035px;top:60px;width:1px;height:58px;background:#e8c94a"></div>
<div class="a" style="left:1056px;top:60px;width:1px;height:58px;background:#e8c94a"></div>
<div class="a" style="left:1057px;top:60px;width:1px;height:58px;background:#7d6a14"></div>
<div class="a" style="left:1058px;top:60px;width:1px;height:58px;background:#e8c94a"></div>
<div class="wk" style="left:965.1px;top:81px">week4</div>
<div class="wk" style="left:990.6px;top:81px">week3</div>
<div class="wk" style="left:1013.6px;top:81px">week2</div>
<div class="wk" style="left:1036.6px;top:81px">week1</div>
<div class="a" style="left:982px;top:118px;width:100px;height:3px;background:#375623"></div>
<div class="a" style="left:985px;top:121px;width:71px;height:14px;background:linear-gradient(90deg,#548235,#92d050 52%,#548235)"></div>
<div class="a" style="left:1059px;top:121px;width:23px;height:14px;background:#548235"></div>
<div class="a" style="left:1056px;top:121px;width:3px;height:14px;background:#ffff00"></div>
<div class="a" style="left:982px;top:121px;width:3px;height:300px;background:#d4a30c"></div>
<div class="a" style="left:985px;top:135px;width:97px;height:20px;background:#fff"></div>
<div class="a" style="left:985px;top:155px;width:97px;height:3px;background:#b0b0b0"></div>
<div class="a" style="left:985px;top:158px;width:71px;height:4px;background:linear-gradient(90deg,#548235,#92d050 52%,#548235)"></div>
<div class="a" style="left:1059px;top:158px;width:23px;height:4px;background:#548235"></div>
<div class="a" style="left:1056px;top:157.5px;width:3px;height:5px;background:#ffff00"></div>
<div class="a" style="left:985px;top:135px;width:25px;height:3px;background:#f5e428"></div>
<div class="a" style="left:985px;top:155px;width:25px;height:3px;background:#f0c424"></div>
<div class="a" style="left:1010px;top:135px;width:3px;height:23px;background:#c99a10"></div>
<div class="a" style="left:1034px;top:138px;width:2px;height:17px;background:#c99a10"></div>
<div class="a" style="left:1056px;top:135px;width:3px;height:22px;background:#bfbfbf"></div>
<div class="a" style="left:1079.5px;top:135px;width:2.5px;height:23px;background:#bfbfbf"></div>
<div class="a" style="left:985px;top:162px;width:97px;height:20px;background:#fff"></div>
<div class="a" style="left:985px;top:182px;width:97px;height:3px;background:#b0b0b0"></div>
<div class="a" style="left:985px;top:185px;width:71px;height:4px;background:linear-gradient(90deg,#548235,#92d050 52%,#548235)"></div>
<div class="a" style="left:1059px;top:185px;width:23px;height:4px;background:#548235"></div>
<div class="a" style="left:1056px;top:184.5px;width:3px;height:5px;background:#ffff00"></div>
<div class="a" style="left:985px;top:162px;width:25px;height:3px;background:#f5e428"></div>
<div class="a" style="left:985px;top:182px;width:25px;height:3px;background:#f0c424"></div>
<div class="a" style="left:1010px;top:162px;width:3px;height:23px;background:#c99a10"></div>
<div class="a" style="left:1034px;top:165px;width:2px;height:17px;background:#c99a10"></div>
<div class="a" style="left:1056px;top:162px;width:3px;height:22px;background:#bfbfbf"></div>
<div class="a" style="left:1079.5px;top:162px;width:2.5px;height:23px;background:#bfbfbf"></div>
<div class="a" style="left:985px;top:189px;width:97px;height:20px;background:#fff"></div>
<div class="a" style="left:985px;top:209px;width:97px;height:3px;background:#b0b0b0"></div>
<div class="a" style="left:985px;top:212px;width:71px;height:4px;background:linear-gradient(90deg,#548235,#92d050 52%,#548235)"></div>
<div class="a" style="left:1059px;top:212px;width:23px;height:4px;background:#548235"></div>
<div class="a" style="left:1056px;top:211.5px;width:3px;height:5px;background:#ffff00"></div>
<div class="a" style="left:985px;top:189px;width:25px;height:3px;background:#f5e428"></div>
<div class="a" style="left:985px;top:209px;width:25px;height:3px;background:#f0c424"></div>
<div class="a" style="left:1010px;top:189px;width:3px;height:23px;background:#c99a10"></div>
<div class="a" style="left:1034px;top:192px;width:2px;height:17px;background:#c99a10"></div>
<div class="a" style="left:1056px;top:189px;width:3px;height:22px;background:#bfbfbf"></div>
<div class="a" style="left:1079.5px;top:189px;width:2.5px;height:23px;background:#bfbfbf"></div>
<div class="a" style="left:985px;top:216px;width:97px;height:20px;background:#fff"></div>
<div class="a" style="left:985px;top:236px;width:97px;height:3px;background:#b0b0b0"></div>
<div class="a" style="left:985px;top:239px;width:71px;height:4px;background:linear-gradient(90deg,#548235,#92d050 52%,#548235)"></div>
<div class="a" style="left:1059px;top:239px;width:23px;height:4px;background:#548235"></div>
<div class="a" style="left:1056px;top:238.5px;width:3px;height:5px;background:#ffff00"></div>
<div class="a" style="left:985px;top:216px;width:25px;height:3px;background:#f5e428"></div>
<div class="a" style="left:985px;top:236px;width:25px;height:3px;background:#f0c424"></div>
<div class="a" style="left:1010px;top:216px;width:3px;height:23px;background:#c99a10"></div>
<div class="a" style="left:1034px;top:219px;width:2px;height:17px;background:#c99a10"></div>
<div class="a" style="left:1056px;top:216px;width:3px;height:22px;background:#bfbfbf"></div>
<div class="a" style="left:1079.5px;top:216px;width:2.5px;height:23px;background:#bfbfbf"></div>
<div class="a" style="left:985px;top:243px;width:97px;height:20px;background:#fff"></div>
<div class="a" style="left:985px;top:263px;width:97px;height:3px;background:#b0b0b0"></div>
<div class="a" style="left:985px;top:266px;width:71px;height:4px;background:linear-gradient(90deg,#548235,#92d050 52%,#548235)"></div>
<div class="a" style="left:1059px;top:266px;width:23px;height:4px;background:#548235"></div>
<div class="a" style="left:1056px;top:265.5px;width:3px;height:5px;background:#ffff00"></div>
<div class="a" style="left:985px;top:243px;width:25px;height:3px;background:#f5e428"></div>
<div class="a" style="left:985px;top:263px;width:25px;height:3px;background:#f0c424"></div>
<div class="a" style="left:1010px;top:243px;width:3px;height:23px;background:#c99a10"></div>
<div class="a" style="left:1034px;top:246px;width:2px;height:17px;background:#c99a10"></div>
<div class="a" style="left:1056px;top:243px;width:3px;height:22px;background:#bfbfbf"></div>
<div class="a" style="left:1079.5px;top:243px;width:2.5px;height:23px;background:#bfbfbf"></div>
<div class="a" style="left:985px;top:270px;width:97px;height:20px;background:#fff"></div>
<div class="a" style="left:985px;top:290px;width:97px;height:3px;background:#b0b0b0"></div>
<div class="a" style="left:985px;top:293px;width:71px;height:4px;background:linear-gradient(90deg,#548235,#92d050 52%,#548235)"></div>
<div class="a" style="left:1059px;top:293px;width:23px;height:4px;background:#548235"></div>
<div class="a" style="left:1056px;top:292.5px;width:3px;height:5px;background:#ffff00"></div>
<div class="a" style="left:985px;top:270px;width:25px;height:3px;background:#f5e428"></div>
<div class="a" style="left:985px;top:290px;width:25px;height:3px;background:#f0c424"></div>
<div class="a" style="left:1010px;top:270px;width:3px;height:23px;background:#c99a10"></div>
<div class="a" style="left:1034px;top:273px;width:2px;height:17px;background:#c99a10"></div>
<div class="a" style="left:1056px;top:270px;width:3px;height:22px;background:#bfbfbf"></div>
<div class="a" style="left:1079.5px;top:270px;width:2.5px;height:23px;background:#bfbfbf"></div>
<div class="a" style="left:985px;top:297px;width:97px;height:20px;background:#fff"></div>
<div class="a" style="left:985px;top:317px;width:97px;height:3px;background:#b0b0b0"></div>
<div class="a" style="left:985px;top:320px;width:71px;height:4px;background:linear-gradient(90deg,#548235,#92d050 52%,#548235)"></div>
<div class="a" style="left:1059px;top:320px;width:23px;height:4px;background:#548235"></div>
<div class="a" style="left:1056px;top:319.5px;width:3px;height:5px;background:#ffff00"></div>
<div class="a" style="left:985px;top:297px;width:25px;height:3px;background:#f5e428"></div>
<div class="a" style="left:985px;top:317px;width:25px;height:3px;background:#f0c424"></div>
<div class="a" style="left:1010px;top:297px;width:3px;height:23px;background:#c99a10"></div>
<div class="a" style="left:1034px;top:300px;width:2px;height:17px;background:#c99a10"></div>
<div class="a" style="left:1056px;top:297px;width:3px;height:22px;background:#bfbfbf"></div>
<div class="a" style="left:1079.5px;top:297px;width:2.5px;height:23px;background:#bfbfbf"></div>
<div class="a" style="left:985px;top:324px;width:97px;height:20px;background:#fff"></div>
<div class="a" style="left:985px;top:344px;width:97px;height:3px;background:#b0b0b0"></div>
<div class="a" style="left:985px;top:347px;width:71px;height:4px;background:linear-gradient(90deg,#548235,#92d050 52%,#548235)"></div>
<div class="a" style="left:1059px;top:347px;width:23px;height:4px;background:#548235"></div>
<div class="a" style="left:1056px;top:346.5px;width:3px;height:5px;background:#ffff00"></div>
<div class="a" style="left:985px;top:324px;width:25px;height:3px;background:#f5e428"></div>
<div class="a" style="left:985px;top:344px;width:25px;height:3px;background:#f0c424"></div>
<div class="a" style="left:1010px;top:324px;width:3px;height:23px;background:#c99a10"></div>
<div class="a" style="left:1034px;top:327px;width:2px;height:17px;background:#c99a10"></div>
<div class="a" style="left:1056px;top:324px;width:3px;height:22px;background:#bfbfbf"></div>
<div class="a" style="left:1079.5px;top:324px;width:2.5px;height:23px;background:#bfbfbf"></div>
<div class="a" style="left:985px;top:351px;width:97px;height:20px;background:#fff"></div>
<div class="a" style="left:985px;top:371px;width:97px;height:3px;background:#b0b0b0"></div>
<div class="a" style="left:985px;top:374px;width:71px;height:4px;background:linear-gradient(90deg,#548235,#92d050 52%,#548235)"></div>
<div class="a" style="left:1059px;top:374px;width:23px;height:4px;background:#548235"></div>
<div class="a" style="left:1056px;top:373.5px;width:3px;height:5px;background:#ffff00"></div>
<div class="a" style="left:985px;top:351px;width:25px;height:3px;background:#f5e428"></div>
<div class="a" style="left:985px;top:371px;width:25px;height:3px;background:#f0c424"></div>
<div class="a" style="left:1010px;top:351px;width:3px;height:23px;background:#c99a10"></div>
<div class="a" style="left:1034px;top:354px;width:2px;height:17px;background:#c99a10"></div>
<div class="a" style="left:1056px;top:351px;width:3px;height:22px;background:#bfbfbf"></div>
<div class="a" style="left:1079.5px;top:351px;width:2.5px;height:23px;background:#bfbfbf"></div>
<div class="a" style="left:985px;top:378px;width:97px;height:20px;background:#fff"></div>
<div class="a" style="left:985px;top:398px;width:97px;height:3px;background:#b0b0b0"></div>
<div class="a" style="left:985px;top:401px;width:71px;height:4px;background:linear-gradient(90deg,#548235,#92d050 52%,#548235)"></div>
<div class="a" style="left:1059px;top:401px;width:23px;height:4px;background:#548235"></div>
<div class="a" style="left:1056px;top:400.5px;width:3px;height:5px;background:#ffff00"></div>
<div class="a" style="left:985px;top:378px;width:25px;height:3px;background:#f5e428"></div>
<div class="a" style="left:985px;top:398px;width:25px;height:3px;background:#f0c424"></div>
<div class="a" style="left:1010px;top:378px;width:3px;height:23px;background:#c99a10"></div>
<div class="a" style="left:1034px;top:381px;width:2px;height:17px;background:#c99a10"></div>
<div class="a" style="left:1056px;top:378px;width:3px;height:22px;background:#bfbfbf"></div>
<div class="a" style="left:1079.5px;top:378px;width:2.5px;height:23px;background:#bfbfbf"></div>
<div class="a" style="left:985px;top:405px;width:97px;height:20px;background:#fff"></div>
<div class="a" style="left:985px;top:425px;width:97px;height:3px;background:#b0b0b0"></div>
<div class="a" style="left:985px;top:428px;width:71px;height:4px;background:linear-gradient(90deg,#548235,#92d050 52%,#548235)"></div>
<div class="a" style="left:1059px;top:428px;width:23px;height:4px;background:#548235"></div>
<div class="a" style="left:1056px;top:427.5px;width:3px;height:5px;background:#ffff00"></div>
<div class="a" style="left:985px;top:405px;width:25px;height:3px;background:#f5e428"></div>
<div class="a" style="left:985px;top:425px;width:25px;height:3px;background:#f0c424"></div>
<div class="a" style="left:1010px;top:405px;width:3px;height:23px;background:#c99a10"></div>
<div class="a" style="left:1034px;top:408px;width:2px;height:17px;background:#c99a10"></div>
<div class="a" style="left:1056px;top:405px;width:3px;height:22px;background:#bfbfbf"></div>
<div class="a" style="left:1079.5px;top:405px;width:2.5px;height:23px;background:#bfbfbf"></div>
<div class="a" style="left:1082px;top:57px;width:3px;height:62px;background:#548235"></div>
<div class="a" style="left:1082px;top:119px;width:3px;height:16px;background:#548235"></div>
<div class="a" style="left:1082px;top:135px;width:3px;height:280px;background:#548235"></div>
<div class="a" style="left:1085px;top:57px;width:100px;height:61px;background:#2f5597;border-top:3px solid #ffc000;border-right:3px solid #ffc000"></div>
<div class="a" style="left:1085px;top:57px;width:1px;height:61px;background:#f3c51f"></div>
<div class="a" style="left:1086px;top:60px;width:1px;height:58px;background:#7d6a14"></div>
<div class="a" style="left:1087px;top:60px;width:1px;height:58px;background:#e8c94a"></div>
<div class="a" style="left:1113px;top:60px;width:1px;height:58px;background:#e8c94a"></div>
<div class="a" style="left:1114px;top:60px;width:1px;height:58px;background:#7d6a14"></div>
<div class="a" style="left:1115px;top:60px;width:1px;height:58px;background:#e8c94a"></div>
<div class="a" style="left:1136px;top:60px;width:1px;height:58px;background:#e8c94a"></div>
<div class="a" style="left:1137px;top:60px;width:1px;height:58px;background:#7d6a14"></div>
<div class="a" style="left:1138px;top:60px;width:1px;height:58px;background:#e8c94a"></div>
<div class="a" style="left:1159px;top:60px;width:1px;height:58px;background:#e8c94a"></div>
<div class="a" style="left:1160px;top:60px;width:1px;height:58px;background:#7d6a14"></div>
<div class="a" style="left:1161px;top:60px;width:1px;height:58px;background:#e8c94a"></div>
<div class="wk" style="left:1068.1px;top:81px">week4</div>
<div class="wk" style="left:1093.6px;top:81px">week3</div>
<div class="wk" style="left:1116.6px;top:81px">week2</div>
<div class="wk" style="left:1139.6px;top:81px">week1</div>
<div class="a" style="left:1085px;top:118px;width:100px;height:3px;background:#375623"></div>
<div class="a" style="left:1088px;top:121px;width:71px;height:14px;background:linear-gradient(90deg,#548235,#92d050 52%,#548235)"></div>
<div class="a" style="left:1162px;top:121px;width:23px;height:14px;background:#548235"></div>
<div class="a" style="left:1159px;top:121px;width:3px;height:14px;background:#ffff00"></div>
<div class="a" style="left:1085px;top:121px;width:3px;height:300px;background:#d4a30c"></div>
<div class="a" style="left:1088px;top:135px;width:97px;height:20px;background:#fff"></div>
<div class="a" style="left:1088px;top:155px;width:97px;height:3px;background:#b0b0b0"></div>
<div class="a" style="left:1088px;top:158px;width:71px;height:4px;background:linear-gradient(90deg,#548235,#92d050 52%,#548235)"></div>
<div class="a" style="left:1162px;top:158px;width:23px;height:4px;background:#548235"></div>
<div class="a" style="left:1159px;top:157.5px;width:3px;height:5px;background:#ffff00"></div>
<div class="a" style="left:1088px;top:135px;width:25px;height:3px;background:#f5e428"></div>
<div class="a" style="left:1088px;top:155px;width:25px;height:3px;background:#f0c424"></div>
<div class="a" style="left:1113px;top:135px;width:3px;height:23px;background:#c99a10"></div>
<div class="a" style="left:1137px;top:138px;width:2px;height:17px;background:#c99a10"></div>
<div class="a" style="left:1159px;top:135px;width:3px;height:22px;background:#bfbfbf"></div>
<div class="a" style="left:1182.5px;top:135px;width:2.5px;height:23px;background:#bfbfbf"></div>
<div class="a" style="left:1088px;top:162px;width:97px;height:20px;background:#fff"></div>
<div class="a" style="left:1088px;top:182px;width:97px;height:3px;background:#b0b0b0"></div>
<div class="a" style="left:1088px;top:185px;width:71px;height:4px;background:linear-gradient(90deg,#548235,#92d050 52%,#548235)"></div>
<div class="a" style="left:1162px;top:185px;width:23px;height:4px;background:#548235"></div>
<div class="a" style="left:1159px;top:184.5px;width:3px;height:5px;background:#ffff00"></div>
<div class="a" style="left:1088px;top:162px;width:25px;height:3px;background:#f5e428"></div>
<div class="a" style="left:1088px;top:182px;width:25px;height:3px;background:#f0c424"></div>
<div class="a" style="left:1113px;top:162px;width:3px;height:23px;background:#c99a10"></div>
<div class="a" style="left:1137px;top:165px;width:2px;height:17px;background:#c99a10"></div>
<div class="a" style="left:1159px;top:162px;width:3px;height:22px;background:#bfbfbf"></div>
<div class="a" style="left:1182.5px;top:162px;width:2.5px;height:23px;background:#bfbfbf"></div>
<div class="a" style="left:1088px;top:189px;width:97px;height:20px;background:#fff"></div>
<div class="a" style="left:1088px;top:209px;width:97px;height:3px;background:#b0b0b0"></div>
<div class="a" style="left:1088px;top:212px;width:71px;height:4px;background:linear-gradient(90deg,#548235,#92d050 52%,#548235)"></div>
<div class="a" style="left:1162px;top:212px;width:23px;height:4px;background:#548235"></div>
<div class="a" style="left:1159px;top:211.5px;width:3px;height:5px;background:#ffff00"></div>
<div class="a" style="left:1088px;top:189px;width:25px;height:3px;background:#f5e428"></div>
<div class="a" style="left:1088px;top:209px;width:25px;height:3px;background:#f0c424"></div>
<div class="a" style="left:1113px;top:189px;width:3px;height:23px;background:#c99a10"></div>
<div class="a" style="left:1137px;top:192px;width:2px;height:17px;background:#c99a10"></div>
<div class="a" style="left:1159px;top:189px;width:3px;height:22px;background:#bfbfbf"></div>
<div class="a" style="left:1182.5px;top:189px;width:2.5px;height:23px;background:#bfbfbf"></div>
<div class="a" style="left:1088px;top:216px;width:97px;height:20px;background:#fff"></div>
<div class="a" style="left:1088px;top:236px;width:97px;height:3px;background:#b0b0b0"></div>
<div class="a" style="left:1088px;top:239px;width:71px;height:4px;background:linear-gradient(90deg,#548235,#92d050 52%,#548235)"></div>
<div class="a" style="left:1162px;top:239px;width:23px;height:4px;background:#548235"></div>
<div class="a" style="left:1159px;top:238.5px;width:3px;height:5px;background:#ffff00"></div>
<div class="a" style="left:1088px;top:216px;width:25px;height:3px;background:#f5e428"></div>
<div class="a" style="left:1088px;top:236px;width:25px;height:3px;background:#f0c424"></div>
<div class="a" style="left:1113px;top:216px;width:3px;height:23px;background:#c99a10"></div>
<div class="a" style="left:1137px;top:219px;width:2px;height:17px;background:#c99a10"></div>
<div class="a" style="left:1159px;top:216px;width:3px;height:22px;background:#bfbfbf"></div>
<div class="a" style="left:1182.5px;top:216px;width:2.5px;height:23px;background:#bfbfbf"></div>
<div class="a" style="left:1088px;top:243px;width:97px;height:20px;background:#fff"></div>
<div class="a" style="left:1088px;top:263px;width:97px;height:3px;background:#b0b0b0"></div>
<div class="a" style="left:1088px;top:266px;width:71px;height:4px;background:linear-gradient(90deg,#548235,#92d050 52%,#548235)"></div>
<div class="a" style="left:1162px;top:266px;width:23px;height:4px;background:#548235"></div>
<div class="a" style="left:1159px;top:265.5px;width:3px;height:5px;background:#ffff00"></div>
<div class="a" style="left:1088px;top:243px;width:25px;height:3px;background:#f5e428"></div>
<div class="a" style="left:1088px;top:263px;width:25px;height:3px;background:#f0c424"></div>
<div class="a" style="left:1113px;top:243px;width:3px;height:23px;background:#c99a10"></div>
<div class="a" style="left:1137px;top:246px;width:2px;height:17px;background:#c99a10"></div>
<div class="a" style="left:1159px;top:243px;width:3px;height:22px;background:#bfbfbf"></div>
<div class="a" style="left:1182.5px;top:243px;width:2.5px;height:23px;background:#bfbfbf"></div>
<div class="a" style="left:1088px;top:270px;width:97px;height:20px;background:#fff"></div>
<div class="a" style="left:1088px;top:290px;width:97px;height:3px;background:#b0b0b0"></div>
<div class="a" style="left:1088px;top:293px;width:71px;height:4px;background:linear-gradient(90deg,#548235,#92d050 52%,#548235)"></div>
<div class="a" style="left:1162px;top:293px;width:23px;height:4px;background:#548235"></div>
<div class="a" style="left:1159px;top:292.5px;width:3px;height:5px;background:#ffff00"></div>
<div class="a" style="left:1088px;top:270px;width:25px;height:3px;background:#f5e428"></div>
<div class="a" style="left:1088px;top:290px;width:25px;height:3px;background:#f0c424"></div>
<div class="a" style="left:1113px;top:270px;width:3px;height:23px;background:#c99a10"></div>
<div class="a" style="left:1137px;top:273px;width:2px;height:17px;background:#c99a10"></div>
<div class="a" style="left:1159px;top:270px;width:3px;height:22px;background:#bfbfbf"></div>
<div class="a" style="left:1182.5px;top:270px;width:2.5px;height:23px;background:#bfbfbf"></div>
<div class="a" style="left:1088px;top:297px;width:97px;height:20px;background:#fff"></div>
<div class="a" style="left:1088px;top:317px;width:97px;height:3px;background:#b0b0b0"></div>
<div class="a" style="left:1088px;top:320px;width:71px;height:4px;background:linear-gradient(90deg,#548235,#92d050 52%,#548235)"></div>
<div class="a" style="left:1162px;top:320px;width:23px;height:4px;background:#548235"></div>
<div class="a" style="left:1159px;top:319.5px;width:3px;height:5px;background:#ffff00"></div>
<div class="a" style="left:1088px;top:297px;width:25px;height:3px;background:#f5e428"></div>
<div class="a" style="left:1088px;top:317px;width:25px;height:3px;background:#f0c424"></div>
<div class="a" style="left:1113px;top:297px;width:3px;height:23px;background:#c99a10"></div>
<div class="a" style="left:1137px;top:300px;width:2px;height:17px;background:#c99a10"></div>
<div class="a" style="left:1159px;top:297px;width:3px;height:22px;background:#bfbfbf"></div>
<div class="a" style="left:1182.5px;top:297px;width:2.5px;height:23px;background:#bfbfbf"></div>
<div class="a" style="left:1088px;top:324px;width:97px;height:20px;background:#fff"></div>
<div class="a" style="left:1088px;top:344px;width:97px;height:3px;background:#b0b0b0"></div>
<div class="a" style="left:1088px;top:347px;width:71px;height:4px;background:linear-gradient(90deg,#548235,#92d050 52%,#548235)"></div>
<div class="a" style="left:1162px;top:347px;width:23px;height:4px;background:#548235"></div>
<div class="a" style="left:1159px;top:346.5px;width:3px;height:5px;background:#ffff00"></div>
<div class="a" style="left:1088px;top:324px;width:25px;height:3px;background:#f5e428"></div>
<div class="a" style="left:1088px;top:344px;width:25px;height:3px;background:#f0c424"></div>
<div class="a" style="left:1113px;top:324px;width:3px;height:23px;background:#c99a10"></div>
<div class="a" style="left:1137px;top:327px;width:2px;height:17px;background:#c99a10"></div>
<div class="a" style="left:1159px;top:324px;width:3px;height:22px;background:#bfbfbf"></div>
<div class="a" style="left:1182.5px;top:324px;width:2.5px;height:23px;background:#bfbfbf"></div>
<div class="a" style="left:1088px;top:351px;width:97px;height:20px;background:#fff"></div>
<div class="a" style="left:1088px;top:371px;width:97px;height:3px;background:#b0b0b0"></div>
<div class="a" style="left:1088px;top:374px;width:71px;height:4px;background:linear-gradient(90deg,#548235,#92d050 52%,#548235)"></div>
<div class="a" style="left:1162px;top:374px;width:23px;height:4px;background:#548235"></div>
<div class="a" style="left:1159px;top:373.5px;width:3px;height:5px;background:#ffff00"></div>
<div class="a" style="left:1088px;top:351px;width:25px;height:3px;background:#f5e428"></div>
<div class="a" style="left:1088px;top:371px;width:25px;height:3px;background:#f0c424"></div>
<div class="a" style="left:1113px;top:351px;width:3px;height:23px;background:#c99a10"></div>
<div class="a" style="left:1137px;top:354px;width:2px;height:17px;background:#c99a10"></div>
<div class="a" style="left:1159px;top:351px;width:3px;height:22px;background:#bfbfbf"></div>
<div class="a" style="left:1182.5px;top:351px;width:2.5px;height:23px;background:#bfbfbf"></div>
<div class="a" style="left:1088px;top:378px;width:97px;height:20px;background:#fff"></div>
<div class="a" style="left:1088px;top:398px;width:97px;height:3px;background:#b0b0b0"></div>
<div class="a" style="left:1088px;top:401px;width:71px;height:4px;background:linear-gradient(90deg,#548235,#92d050 52%,#548235)"></div>
<div class="a" style="left:1162px;top:401px;width:23px;height:4px;background:#548235"></div>
<div class="a" style="left:1159px;top:400.5px;width:3px;height:5px;background:#ffff00"></div>
<div class="a" style="left:1088px;top:378px;width:25px;height:3px;background:#f5e428"></div>
<div class="a" style="left:1088px;top:398px;width:25px;height:3px;background:#f0c424"></div>
<div class="a" style="left:1113px;top:378px;width:3px;height:23px;background:#c99a10"></div>
<div class="a" style="left:1137px;top:381px;width:2px;height:17px;background:#c99a10"></div>
<div class="a" style="left:1159px;top:378px;width:3px;height:22px;background:#bfbfbf"></div>
<div class="a" style="left:1182.5px;top:378px;width:2.5px;height:23px;background:#bfbfbf"></div>
<div class="a" style="left:1088px;top:405px;width:97px;height:20px;background:#fff"></div>
<div class="a" style="left:1088px;top:425px;width:97px;height:3px;background:#b0b0b0"></div>
<div class="a" style="left:1088px;top:428px;width:71px;height:4px;background:linear-gradient(90deg,#548235,#92d050 52%,#548235)"></div>
<div class="a" style="left:1162px;top:428px;width:23px;height:4px;background:#548235"></div>
<div class="a" style="left:1159px;top:427.5px;width:3px;height:5px;background:#ffff00"></div>
<div class="a" style="left:1088px;top:405px;width:25px;height:3px;background:#f5e428"></div>
<div class="a" style="left:1088px;top:425px;width:25px;height:3px;background:#f0c424"></div>
<div class="a" style="left:1113px;top:405px;width:3px;height:23px;background:#c99a10"></div>
<div class="a" style="left:1137px;top:408px;width:2px;height:17px;background:#c99a10"></div>
<div class="a" style="left:1159px;top:405px;width:3px;height:22px;background:#bfbfbf"></div>
<div class="a" style="left:1182.5px;top:405px;width:2.5px;height:23px;background:#bfbfbf"></div>
<div class="a" style="left:1199px;top:57px;width:115px;height:61px;background:linear-gradient(to bottom right,#e6eef8 2%,#bfd8f0 24%,#9fc4ea 50%,#bfd8f0 76%,#e4edf7 98%);border-top:3px solid #ffc000"></div>
<div class="a" style="left:1199px;top:57px;width:1px;height:61px;background:#f3c51f"></div>
<div class="a" style="left:1200px;top:60px;width:1px;height:58px;background:#6b6b10"></div>
<div class="a" style="left:1201px;top:60px;width:1px;height:58px;background:#f5e9a0"></div>
<div class="a" style="left:1310px;top:60px;width:4px;height:58px;background:linear-gradient(90deg,#f3d545,#f7e58a 50%,#f2d040)"></div>
<div class="a" style="left:1199px;top:118px;width:115px;height:3px;background:#375623"></div>
<div class="a" style="left:1199px;top:121px;width:3px;height:300px;background:#d4a30c"></div>
<div class="a" style="left:1202px;top:135px;width:109px;height:20px;background:#ddebf7"></div>
<div class="a" style="left:1202px;top:135px;width:109px;height:1px;background:#eef4fb"></div>
<div class="a" style="left:1202px;top:155px;width:109px;height:3px;background:#b0b0b0"></div>
<div class="a" style="left:1311px;top:138px;width:3px;height:17px;background:#bfbfbf"></div>
<div class="a" style="left:1311px;top:155px;width:3px;height:10px;background:#d4a30c"></div>
<div class="a" style="left:1202px;top:162px;width:109px;height:20px;background:#ddebf7"></div>
<div class="a" style="left:1202px;top:162px;width:109px;height:1px;background:#eef4fb"></div>
<div class="a" style="left:1202px;top:182px;width:109px;height:3px;background:#b0b0b0"></div>
<div class="a" style="left:1311px;top:165px;width:3px;height:17px;background:#bfbfbf"></div>
<div class="a" style="left:1311px;top:182px;width:3px;height:10px;background:#d4a30c"></div>
<div class="a" style="left:1202px;top:189px;width:109px;height:20px;background:#ddebf7"></div>
<div class="a" style="left:1202px;top:189px;width:109px;height:1px;background:#eef4fb"></div>
<div class="a" style="left:1202px;top:209px;width:109px;height:3px;background:#b0b0b0"></div>
<div class="a" style="left:1311px;top:192px;width:3px;height:17px;background:#bfbfbf"></div>
<div class="a" style="left:1311px;top:209px;width:3px;height:10px;background:#d4a30c"></div>
<div class="a" style="left:1202px;top:216px;width:109px;height:20px;background:#ddebf7"></div>
<div class="a" style="left:1202px;top:216px;width:109px;height:1px;background:#eef4fb"></div>
<div class="a" style="left:1202px;top:236px;width:109px;height:3px;background:#b0b0b0"></div>
<div class="a" style="left:1311px;top:219px;width:3px;height:17px;background:#bfbfbf"></div>
<div class="a" style="left:1311px;top:236px;width:3px;height:10px;background:#d4a30c"></div>
<div class="a" style="left:1202px;top:243px;width:109px;height:20px;background:#ddebf7"></div>
<div class="a" style="left:1202px;top:243px;width:109px;height:1px;background:#eef4fb"></div>
<div class="a" style="left:1202px;top:263px;width:109px;height:3px;background:#b0b0b0"></div>
<div class="a" style="left:1311px;top:246px;width:3px;height:17px;background:#bfbfbf"></div>
<div class="a" style="left:1311px;top:263px;width:3px;height:10px;background:#d4a30c"></div>
<div class="a" style="left:1202px;top:270px;width:109px;height:20px;background:#ddebf7"></div>
<div class="a" style="left:1202px;top:270px;width:109px;height:1px;background:#eef4fb"></div>
<div class="a" style="left:1202px;top:290px;width:109px;height:3px;background:#b0b0b0"></div>
<div class="a" style="left:1311px;top:273px;width:3px;height:17px;background:#bfbfbf"></div>
<div class="a" style="left:1311px;top:290px;width:3px;height:10px;background:#d4a30c"></div>
<div class="a" style="left:1202px;top:297px;width:109px;height:20px;background:#ddebf7"></div>
<div class="a" style="left:1202px;top:297px;width:109px;height:1px;background:#eef4fb"></div>
<div class="a" style="left:1202px;top:317px;width:109px;height:3px;background:#b0b0b0"></div>
<div class="a" style="left:1311px;top:300px;width:3px;height:17px;background:#bfbfbf"></div>
<div class="a" style="left:1311px;top:317px;width:3px;height:10px;background:#d4a30c"></div>
<div class="a" style="left:1202px;top:324px;width:109px;height:20px;background:#ddebf7"></div>
<div class="a" style="left:1202px;top:324px;width:109px;height:1px;background:#eef4fb"></div>
<div class="a" style="left:1202px;top:344px;width:109px;height:3px;background:#b0b0b0"></div>
<div class="a" style="left:1311px;top:327px;width:3px;height:17px;background:#bfbfbf"></div>
<div class="a" style="left:1311px;top:344px;width:3px;height:10px;background:#d4a30c"></div>
<div class="a" style="left:1202px;top:351px;width:109px;height:20px;background:#ddebf7"></div>
<div class="a" style="left:1202px;top:351px;width:109px;height:1px;background:#eef4fb"></div>
<div class="a" style="left:1202px;top:371px;width:109px;height:3px;background:#b0b0b0"></div>
<div class="a" style="left:1311px;top:354px;width:3px;height:17px;background:#bfbfbf"></div>
<div class="a" style="left:1311px;top:371px;width:3px;height:10px;background:#d4a30c"></div>
<div class="a" style="left:1202px;top:378px;width:109px;height:20px;background:#ddebf7"></div>
<div class="a" style="left:1202px;top:378px;width:109px;height:1px;background:#eef4fb"></div>
<div class="a" style="left:1202px;top:398px;width:109px;height:3px;background:#b0b0b0"></div>
<div class="a" style="left:1311px;top:381px;width:3px;height:17px;background:#bfbfbf"></div>
<div class="a" style="left:1311px;top:398px;width:3px;height:10px;background:#d4a30c"></div>
<div class="a" style="left:1202px;top:405px;width:109px;height:20px;background:#ddebf7"></div>
<div class="a" style="left:1202px;top:405px;width:109px;height:1px;background:#eef4fb"></div>
<div class="a" style="left:1202px;top:425px;width:109px;height:3px;background:#b0b0b0"></div>
<div class="a" style="left:1311px;top:408px;width:3px;height:17px;background:#bfbfbf"></div>
<div class="a" style="left:1311px;top:425px;width:3px;height:10px;background:#d4a30c"></div>
<div class="a" style="left:1311px;top:121px;width:3px;height:17px;background:#d4a30c"></div>
<div class="a" style="left:1322px;top:58px;width:2px;height:360px;background:#a89a12"></div>
</div>
<div class="a" style="left:1221px;top:257px;width:115px;height:23px;border:2px solid #1e6e42;border-bottom-width:3px"></div>
<div class="a" style="left:1223px;top:259px;width:111px;height:18px;border:1px solid #fff"></div>
<div class="a" style="left:1220px;top:274.500px;width:6px;height:5.500px;background:#1e6e42;border-top:1px solid #fff;border-right:1px solid #fff"></div>
<div class="box" style="left:5px;top:171px;width:102px;height:26px;border-color:#c6c6c6"></div>
<div class="t" style="left:12px;top:175px;font-size:13px;line-height:18px;color:#333">B1</div>
<svg style="left:93px;top:181.500px" width="7" height="4" viewBox="0 0 7 4"><path d="M0 0h7l-3.500 4z" fill="#777"/></svg>
<div class="a" style="left:121px;top:180px;width:1.500px;height:1.500px;background:#aaa"></div>
<div class="a" style="left:121px;top:183.5px;width:1.500px;height:1.500px;background:#aaa"></div>
<div class="a" style="left:121px;top:187px;width:1.500px;height:1.500px;background:#aaa"></div>
<div class="box" style="left:137px;top:171px;width:110px;height:26px;border-color:#d4d4d4"></div>
<svg style="left:150px;top:179px" width="11" height="10" viewBox="0 0 11 10"><path d="M0.500 0.500l10 9 M10.500 0.500l-10 9" stroke="#b8b8b8" stroke-width="1.900" fill="none"/></svg>
<svg style="left:186px;top:179px" width="13" height="10" viewBox="0 0 13 10"><path d="M0.500 5.500l4 4 8-9" stroke="#b8b8b8" stroke-width="2.100" fill="none"/></svg>
<div class="t" style="left:222px;top:174px;font-size:14px;line-height:18px;font-style:italic;font-family:'Liberation Serif',serif;color:#555;font-weight:bold;letter-spacing:-0.5px">f<span style="font-size:10px">x</span></div>
<div class="box" style="left:250px;top:171px;width:1111px;height:66px;border-color:#d4d4d4"></div>
<svg style="left:1349px;top:180px" width="8" height="5" viewBox="0 0 8 5"><path d="M0.500 4.500l3.500-3.500 3.500 3.500" stroke="#444" stroke-width="1.600" fill="none"/></svg>
<div class="a" style="left:0;top:246px;width:22px;height:430px;background:#e6e6e6"></div>
<div class="a" style="left:3px;top:264px;width:15px;height:392px;background:#f0f0f0"></div>
<div class="a" style="left:21px;top:258px;width:1px;height:412px;background:#9a9a9a"></div>
<div class="box" style="left:3px;top:249px;width:15px;height:15px;border-color:#8a8a8a"></div>
<svg style="left:7px;top:254px" width="7" height="4" viewBox="0 0 7 4"><path d="M0 4h7l-3.500-4z" fill="#000"/></svg>
<div class="box" style="left:3px;top:263px;width:15px;height:230px;border-color:#8a8a8a"></div>
<div class="box" style="left:3px;top:656px;width:15px;height:15px;border-color:#8a8a8a"></div>
<svg style="left:7px;top:662px" width="7" height="4" viewBox="0 0 7 4"><path d="M0 0h7l-3.500 4z" fill="#000"/></svg>
<div class="a" style="left:0;top:670px;width:1366px;height:28px;background:#e6e6e6"></div>
<div class="a" style="left:0;top:670px;width:1366px;height:1px;background:#b4b4b4"></div>
<div class="a" style="left:21px;top:675px;width:475px;height:20px;background:linear-gradient(90deg,#f0f0f0 85%,#e6e6e6)"></div>
<div class="box" style="left:21px;top:677px;width:15px;height:15px;border-color:#8a8a8a"></div>
<svg style="left:26px;top:680.500px" width="5" height="8" viewBox="0 0 5 8"><path d="M4.500 0v8l-4.500-4z" fill="#000"/></svg>
<div class="box" style="left:498px;top:677px;width:18px;height:15px;border-color:#8a8a8a"></div>
<div class="box" style="left:515px;top:677px;width:15px;height:15px;border-color:#8a8a8a"></div>
<svg style="left:521px;top:680.500px" width="5" height="8" viewBox="0 0 5 8"><path d="M0.500 0v8l4.500-4z" fill="#000"/></svg>
<div class="a" style="left:545px;top:679px;width:1.500px;height:1.500px;background:#aaa"></div>
<div class="a" style="left:545px;top:683px;width:1.500px;height:1.500px;background:#aaa"></div>
<div class="a" style="left:545px;top:687px;width:1.500px;height:1.500px;background:#aaa"></div>
<svg style="left:1085px;top:676px" width="16" height="16" viewBox="0 0 16 16"><circle cx="8" cy="8" r="7" fill="none" stroke="#757575" stroke-width="1.400"/><path d="M4.500 8h7M8 4.500v7" stroke="#757575" stroke-width="1.600"/></svg>
<div class="a" style="left:1136px;top:675px;width:1px;height:19px;background:#b0b0b0"></div>
<div class="t" id="sheet2" style="left:1150px;top:675px;letter-spacing:-0.451px;font-size:13px;line-height:17px;color:#444">Sheet2</div>
<div class="a" style="left:1200px;top:670px;width:66px;height:25px;background:#fff;border-bottom:2px solid #217346;border-left:1px solid #b4b4b4;border-right:1px solid #b4b4b4"></div>
<div class="t" id="sheet1" style="left:1214px;top:675px;letter-spacing:-0.523px;font-size:13px;line-height:17px;color:#217346;font-weight:bold">Sheet1</div>
<svg style="left:1305px;top:680px" width="5" height="8" viewBox="0 0 5 8"><path d="M5 0v8l-5-4z" fill="#c4c4c4"/></svg>
<svg style="left:1333px;top:680px" width="5" height="8" viewBox="0 0 5 8"><path d="M0 0v8l5-4z" fill="#c4c4c4"/></svg>
<div class="a" style="left:0;top:698px;width:1366px;height:22px;background:#f3f2f1;border-top:1px solid #c8c8c8"></div>
<div class="t" id="ready" style="left:7px;top:702px;letter-spacing:-0.640px;color:#444">Ready</div>
<svg style="left:57px;top:701px" width="16" height="16" viewBox="57 701 16 16"><circle cx="64.300" cy="704" r="1.700" fill="none" stroke="#444" stroke-width="1"/>
<path d="M58.500 706.800q5.800 1.600 11.600 0l.5 1.500q-2.200.9-4 1.100v2.600l1.600 3.400-1.400.7-2.500-4.800-2.500 4.800-1.400-.7 2-4v-2q-2.200-.2-4.400-1.100z" fill="none" stroke="#444" stroke-width=".9"/><path d="M66.800 711.300l4.700 4.700 M71.500 711.300l-4.700 4.700" stroke="#444" stroke-width="1.100"/></svg>
<div class="t" id="acc" style="left:76px;top:701px;letter-spacing:-0.291px;color:#444">Accessibility: Investigate</div>
<div class="a" style="left:1069px;top:699px;width:40px;height:21px;background:#d2d2d2"></div>
<svg style="left:1082px;top:702px" width="14" height="14" viewBox="0 0 14 14"><path d="M0.500 0.500h13v13h-13z M0.500 5h13 M0.500 9h13 M5 0.500v13 M9 0.500v13" fill="none" stroke="#444" stroke-width="1"/></svg>
<svg style="left:1122px;top:702px" width="14" height="14" viewBox="0 0 14 14"><path d="M0.500 0.500h13v13h-13z M3 3h8v8h-8z M4.500 5.500h5 M4.500 8.500h5" fill="none" stroke="#444" stroke-width="1"/></svg>
<svg style="left:1162px;top:702px" width="14" height="14" viewBox="0 0 14 14"><path d="M0.500 0.500h13v13h-13z M4.500 0.500v6h4.500v-6 M0.500 6.500h4" fill="none" stroke="#444" stroke-width="1"/></svg>
<div class="a" style="left:1196px;top:709px;width:7px;height:1px;background:#444"></div>
<div class="a" style="left:1208px;top:709px;width:100px;height:1px;background:#555"></div>
<div class="a" style="left:1234px;top:703px;width:5px;height:12px;background:#333"></div>
<div class="a" style="left:1258px;top:706px;width:1px;height:7px;background:#555"></div>
<div class="a" style="left:1312px;top:709px;width:9px;height:1px;background:#444"></div><div class="a" style="left:1316px;top:705px;width:1px;height:9px;background:#444"></div>
<div class="t" id="zoom" style="left:1334px;top:701px;letter-spacing:-0.590px;color:#444">60 %</div>
<div class="a" style="left:0;top:720px;width:1366px;height:48px;background:linear-gradient(90deg,#e0ebf5,#dde8f5 18%,#d9e3f5 30%,#dae3f6 60%,#e0e8f7 80%,#e3eaf8);border-top:1px solid #c3c8d2"></div>
<svg style="left:20px;top:728px" width="24" height="24" viewBox="0 0 24 24"><defs><linearGradient id="wg" x1="0" y1="0" x2="1" y2="1"><stop offset="0" stop-color="#b4b7bd"/><stop offset="1" stop-color="#7b7e86"/></linearGradient></defs>
<circle cx="11" cy="11" r="10.800" fill="url(#wg)"/><path d="M12.500 18.700c-3.200 0-3.200-4.200-.3-4.400.8-3.700 6-3.800 6.800-.6 3.500-.3 4 4.600.6 5z" fill="#eceef2"/></svg>
<svg style="left:406px;top:733px" width="23" height="23" viewBox="0 0 23 23"><defs><linearGradient id="wl" x1="0" y1="0" x2="1" y2="1"><stop offset="0" stop-color="#55cdf7"/><stop offset=".45" stop-color="#1f9be8"/><stop offset="1" stop-color="#0c6fd0"/></linearGradient></defs>
<path d="M0 0h10.800v10.800h-10.800z M12.200 0h10.800v10.800h-10.800z M0 12.200h10.800v10.800h-10.800z M12.200 12.200h10.800v10.800h-10.800z" fill="url(#wl)"/></svg>
<div class="a" style="left:443px;top:728px;width:218px;height:32px;border-radius:16px;background:#f4f6fc;border:1px solid #cdd3df;border-bottom-color:#bfc6d4"></div>
<svg style="left:453px;top:735px" width="16" height="17" viewBox="0 0 16 17"><circle cx="6.500" cy="6.500" r="5.200" fill="none" stroke="#222" stroke-width="1.700"/><path d="M10.500 10.500l4.500 5" stroke="#222" stroke-width="1.900"/></svg>
<div class="t" id="tsearch" style="left:479px;top:735px;letter-spacing:-0.646px;font-size:14px;line-height:18px;color:#5a5a5a">Search</div>
<svg style="left:674px;top:731px" width="25" height="26" viewBox="674 731 25 26"><defs>
<linearGradient id="cpa" x1="0.300" y1="0" x2="0" y2="1"><stop offset="0" stop-color="#2fb4ec"/><stop offset=".55" stop-color="#56c98f"/><stop offset="1" stop-color="#f6c648"/></linearGradient>
<linearGradient id="cpb" x1="0" y1="0" x2="1" y2="1"><stop offset="0" stop-color="#2fa4ea"/><stop offset="1" stop-color="#4664de"/></linearGradient>
<linearGradient id="cpc" x1="0.300" y1="0" x2="0.700" y2="1"><stop offset="0" stop-color="#7a5be6"/><stop offset=".5" stop-color="#c45ad8"/><stop offset="1" stop-color="#f56bb0"/></linearGradient></defs>
<path d="M678.500 747.500C676 747.500 674.800 745.800 675.600 743.500L678 736.800C678.800 734.800 680 733.800 682 733.800L688.500 733.800C686.800 733.800 685.800 734.800 685.300 736.300L682.200 745.200C681.600 746.800 680.500 747.500 678.500 747.500Z" fill="url(#cpa)"/>
<path d="M682 733.800L688.500 733.800C690.300 733.800 691.300 734.800 691.800 736.300L693 740.300L687.800 740.300L686.800 736.600C686.300 734.800 685 733.800 682 733.800Z" fill="url(#cpb)"/>
<path d="M693.500 738.300C696 738.300 697.300 740 696.500 742.200L694.500 747.500C693.800 749.400 692.500 750 690.500 750L683.500 750C685.500 750 686.600 749 687.100 747.500L689.800 739.800C690.200 738.800 691 738.300 693.500 738.300Z" fill="url(#cpc)"/>
<rect x="679.800" y="748.800" width="18.200" height="7" rx="1.800" fill="#f8c73b"/><text x="688.900" y="754.600" font-size="6.600" font-weight="bold" text-anchor="middle" letter-spacing=".3" font-family="Liberation Sans, sans-serif" fill="#1b1b1b">PRE</text></svg>
<div class="a" style="left:718px;top:739px;width:18px;height:16px;background:linear-gradient(135deg,#3c3c3c,#161616);border-radius:2px"></div>
<div class="a" style="left:724px;top:733px;width:17.500px;height:15px;background:linear-gradient(135deg,rgba(255,255,255,.95),rgba(215,218,224,.8));border-radius:2px"></div>
<svg style="left:761px;top:732px" width="26" height="24" viewBox="0 0 26 24"><defs><linearGradient id="fo" x1="0" y1="0" x2="0" y2="1"><stop offset="0" stop-color="#fdd757"/><stop offset="1" stop-color="#f8c02f"/></linearGradient></defs>
<path d="M1 3c0-1 .700-1.700 1.700-1.700h6.300l2.200 2.700h-10.200z" fill="#e3a51f"/>
<path d="M1 4h22.300c1 0 1.700.700 1.700 1.700v15.300c0 1-.700 1.700-1.700 1.700h-20.600c-1 0-1.700-.700-1.700-1.700z" fill="url(#fo)"/><path d="M5 17.500c0-1 .700-1.700 1.700-1.700h12.600c1 0 1.700.700 1.700 1.700v5.200h-16z" fill="#2489dd"/><rect x="8.500" y="18.300" width="9" height="1.700" rx=".85" fill="#1867b8"/></svg>
<div class="a" style="left:771px;top:760px;width:6px;height:3px;border-radius:1.500px;background:#8a8f98"></div>
<svg style="left:805px;top:732px" width="25" height="25" viewBox="0 0 25 25"><defs><linearGradient id="eg1" x1="0" y1="0" x2="1" y2="0"><stop offset="0" stop-color="#1c8fd8"/><stop offset=".6" stop-color="#33c0a8"/><stop offset="1" stop-color="#7bd65a"/></linearGradient></defs>
<circle cx="12.500" cy="12.500" r="12" fill="#1769c4"/><path d="M1 11c1-6.500 6-10.500 12-10.500 7 0 11.500 5 11.500 10 0 4-3 6-6.500 6-2.500 0-4-1-4-2 0-1 1-1.500 1-3 0-2-2-4-5-4-4 0-7.500 3-9 3.500z" fill="url(#eg1)"/>
<path d="M9.500 13c-2 3 0 8 5 9.500 3 .8 6-.5 8-2.500-2 1-4 1.500-6.500 .500-3-1.200-5-4-4.500-7.500z" fill="#0d4f9e"/><ellipse cx="14" cy="13" rx="3.200" ry="3.500" fill="#dfe8f3"/></svg>
<svg style="left:849px;top:732px" width="25" height="25" viewBox="0 0 25 25"><defs><linearGradient id="st" x1="0" y1="0" x2="0" y2="1"><stop offset="0" stop-color="#1c62ad"/><stop offset="1" stop-color="#0f4c8f"/></linearGradient></defs>
<path d="M7.300 6v-2.200c0-1.400 1-2.300 2.300-2.300h5.300c1.400 0 2.300 1 2.300 2.300v2.200" fill="none" stroke="#4fc0f5" stroke-width="1.800"/>
<path d="M.800 5.200h23l-.5 15.500c-.1 1.800-1.300 3-3 3h-16c-1.700 0-2.900-1.200-3-3z" fill="url(#st)"/><rect x="7.700" y="9.800" width="4.300" height="4.300" fill="#f25022"/><rect x="12.800" y="9.800" width="4.300" height="4.300" fill="#7fba00"/><rect x="7.700" y="14.900" width="4.300" height="4.300" fill="#00a4ef"/><rect x="12.800" y="14.900" width="4.300" height="4.300" fill="#ffb900"/></svg>
<svg style="left:893px;top:731px" width="26" height="26" viewBox="0 0 26 26"><defs><linearGradient id="ff1" x1=".7" y1="0" x2=".3" y2="1"><stop offset="0" stop-color="#ffe14a"/><stop offset=".35" stop-color="#ff9a1a"/><stop offset=".75" stop-color="#f5453c"/><stop offset="1" stop-color="#e62e6b"/></linearGradient></defs>
<path d="M15.500 1c.8 1.500 2 2.300 3.300 3.500 3 2.600 5.200 6 4.700 10.500-.6 5.800-5.500 9.800-11 9.800-6 0-11.300-4.500-11.300-11.300 0-3 1.200-5.800 3-7.300-.1 1.500.3 2.500.9 3.200.8-3 3.300-5.400 5.600-5.900-.8 1 -.9 2.300-.3 3.300 1.500-1.500 3.500-3.500 5.100-5.800z" fill="url(#ff1)"/>
<circle cx="13.800" cy="13.300" r="5.600" fill="#7a3cd4"/><circle cx="14.500" cy="12.300" r="3" fill="#9156e6"/><path d="M7 10.500c1.500-.8 3.300-.5 4.300.8.800 1 2.200 1.200 3.500.8-.5 1.500-1.800 2.300-3.300 2.200 1 2.500 3.800 3.300 6.500 2-1.500 3-4.800 4.200-7.700 3-2.800-1.200-4.300-4.800-3.300-8.800z" fill="#ff8a1f"/></svg>
<div class="a" style="left:931px;top:725px;width:38px;height:39px;background:#eef2fa;border-radius:5px;border:1px solid #e6eaf3"></div>
<svg style="left:937px;top:732px" width="26" height="24" viewBox="0 0 26 24"><path d="M8 1h16c.8 0 1.500.7 1.500 1.500v19c0 .8-.7 1.500-1.500 1.500h-16z" fill="#21a366"/><path d="M8 1h9v6h-9z" fill="#21a366"/><path d="M17 1h7c.8 0 1.500.7 1.500 1.500v4.500h-8.500z" fill="#33c481"/><path d="M8 7h9v5.500h-9z" fill="#107c41"/><path d="M17 7h8.500v5.500h-8.500z" fill="#21a366"/><path d="M8 12.500h9v5.500h-9z" fill="#185c37"/><path d="M17 12.500h8.500v5.500h-8.500z" fill="#107c41"/><path d="M8 18h17.500v3.500c0 .8-.7 1.500-1.500 1.500h-16z" fill="#185c37"/>
<rect x="1" y="6" width="12" height="12" rx="1.200" fill="#107c41"/><text x="7" y="15.800" font-size="10.500" font-weight="bold" text-anchor="middle" font-family="Liberation Sans, sans-serif" fill="#fff">X</text></svg>
<div class="a" style="left:941px;top:760px;width:17px;height:3px;border-radius:1.500px;background:#0067c0"></div>
<svg style="left:1080px;top:740px" width="12" height="8" viewBox="0 0 12 8"><path d="M0.700 6.800l5.300-5.500 5.300 5.500" fill="none" stroke="#222" stroke-width="1.400"/></svg>
<svg style="left:1109px;top:736px" width="19" height="16" viewBox="0 0 19 16"><path d="M4.500 12.500c-4.500 0-4.500-6 0-6 .5-5 8-5 9-1 4.500 0 4.500 7 0 7z" fill="#8b8f97" stroke="#222" stroke-width="1.300"/><path d="M2.500 2l13 12.500" stroke="#222" stroke-width="1.400"/></svg>
<div class="t" id="eng" style="left:1144px;top:737px;letter-spacing:-0.505px;font-size:12px;line-height:16px;color:#222">ENG</div>
<svg style="left:1185px;top:735px" width="19" height="18" viewBox="0 0 19 18"><circle cx="8.500" cy="8.500" r="7.500" fill="none" stroke="#222" stroke-width="1.200"/><path d="M1 8.500h15 M8.500 1c-4 4-4 11 0 15 M8.500 1c4 4 4 11 0 15" fill="none" stroke="#222" stroke-width="1.100"/>
<circle cx="13.500" cy="13" r="4.300" fill="#dde6f5" stroke="#222" stroke-width="1.200"/><path d="M10.600 16l5.800-6" stroke="#222" stroke-width="1.200"/></svg>
<svg style="left:1210px;top:736px" width="18" height="16" viewBox="0 0 18 16"><path d="M1 5.500h3l4-4v13l-4-4h-3z" fill="none" stroke="#222" stroke-width="1.200"/><path d="M10.300 5.300c1.300 1.300 1.300 4.100 0 5.400 M12.200 3.500c2.400 2.400 2.400 6.600 0 9 M14.100 1.800c3.400 3.400 3.400 9 0 12.400" fill="none" stroke="#222" stroke-width="1.100"/></svg>
<svg style="left:1233px;top:739px" width="19" height="11" viewBox="0 0 19 11"><rect x=".700" y=".700" width="15" height="9.600" rx="2" fill="none" stroke="#222" stroke-width="1.300"/><rect x="2.700" y="2.700" width="8.500" height="5.600" rx=".8" fill="#222"/><path d="M17 3.500v4" stroke="#222" stroke-width="1.600"/></svg>
<div class="t" id="clock1" style="right:44px;top:726px;transform:scaleX(.96);transform-origin:100% 50%;font-size:12.5px;line-height:18px;color:#222;font-family:'DejaVu Sans',sans-serif;direction:rtl">۰۹:۲۴ صبح</div>
<div class="t" id="clock2" style="right:44px;top:743.5px;transform:scaleX(.715);transform-origin:100% 50%;font-size:12.5px;line-height:18px;color:#222;font-family:'DejaVu Sans',sans-serif;direction:ltr">۱۰/۱۱/۱۴۰۲</div>
<svg style="left:1331px;top:735px" width="15" height="18" viewBox="0 0 15 18"><path d="M7.500 1c-3.500 0-5.500 2.500-5.500 5.500v4l-1.700 3h14.400l-1.700-3v-4c0-3-2-5.500-5.500-5.500z" fill="#0b5cbe"/><path d="M5.500 15c.3 2.500 3.700 2.500 4 0z" fill="#0b5cbe"/></svg>
</div></body></html>
